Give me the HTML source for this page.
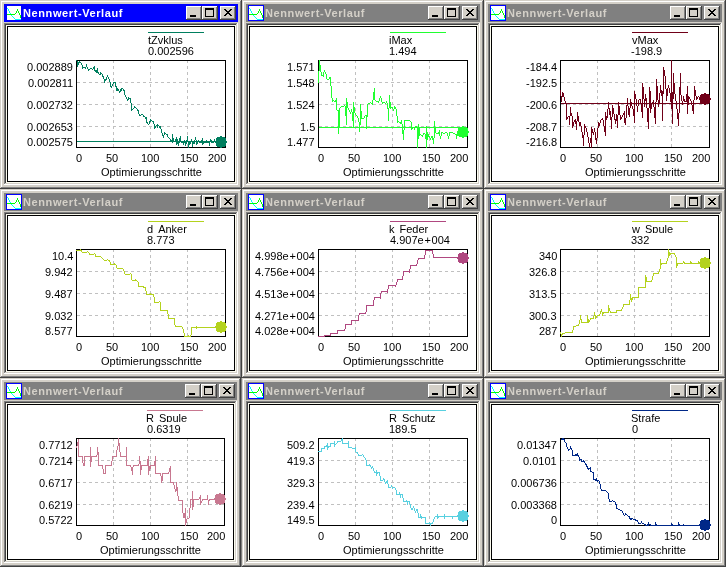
<!DOCTYPE html>
<html><head><meta charset="utf-8"><style>
html,body{margin:0;padding:0;}
body{width:726px;height:567px;overflow:hidden;background:#808080;position:relative;font-family:"Liberation Sans", sans-serif;}
.win{position:absolute;height:189px;overflow:hidden;}
.win svg{position:absolute;left:0;top:0;}
.tx{position:absolute;will-change:transform;font-size:11px;line-height:11px;height:11px;white-space:nowrap;color:#000;}
.tt{position:absolute;will-change:transform;font-size:11px;font-weight:bold;letter-spacing:0.6px;line-height:11px;white-space:nowrap;}
.yl{text-align:right;}
.pl{margin:0 0.75px;}
.us{display:inline-block;width:5px;height:9px;overflow:hidden;vertical-align:top;color:transparent;}
</style></head><body>

<div class="win" style="left:0px;top:0px;width:242px">
<svg width="242" height="189" viewBox="0 0 242 189" shape-rendering="crispEdges">
<rect x="0" y="0" width="242" height="189" fill="#d4d0c8"/>
<rect x="1" y="1" width="240" height="1" fill="#ffffff"/>
<rect x="1" y="1" width="1" height="187" fill="#ffffff"/>
<rect x="0" y="188" width="242" height="1" fill="#404040"/>
<rect x="241" y="0" width="1" height="189" fill="#404040"/>
<rect x="1" y="187" width="240" height="1" fill="#808080"/>
<rect x="240" y="1" width="1" height="187" fill="#808080"/>
<rect x="4" y="4" width="234" height="18" fill="#0000ff"/>
<rect x="6" y="5" width="16" height="16" fill="#0000ff"/>
<rect x="7" y="6" width="14" height="14" fill="#ffffff"/>
<rect x="7" y="8" width="1" height="1" fill="#00ffff"/>
<rect x="8" y="9" width="1" height="1" fill="#00ffff"/>
<rect x="8" y="10" width="1" height="1" fill="#00ffff"/>
<rect x="9" y="11" width="1" height="1" fill="#00ffff"/>
<rect x="9" y="12" width="1" height="1" fill="#00ffff"/>
<rect x="10" y="13" width="1" height="1" fill="#00ffff"/>
<rect x="11" y="14" width="1" height="1" fill="#00ffff"/>
<rect x="11" y="15" width="1" height="1" fill="#00ffff"/>
<rect x="12" y="16" width="1" height="1" fill="#00ffff"/>
<rect x="13" y="17" width="1" height="1" fill="#00ffff"/>
<rect x="14" y="18" width="1" height="1" fill="#00ffff"/>
<rect x="15" y="19" width="1" height="1" fill="#00ffff"/>
<rect x="16" y="19" width="1" height="1" fill="#00ffff"/>
<rect x="17" y="19" width="1" height="1" fill="#00ffff"/>
<rect x="18" y="19" width="1" height="1" fill="#00ffff"/>
<rect x="19" y="19" width="1" height="1" fill="#00ffff"/>
<rect x="20" y="19" width="1" height="1" fill="#00ffff"/>
<rect x="7" y="14" width="1" height="1" fill="#00ff00"/>
<rect x="8" y="14" width="1" height="1" fill="#00ff00"/>
<rect x="9" y="14" width="1" height="1" fill="#00ff00"/>
<rect x="10" y="14" width="1" height="1" fill="#00ff00"/>
<rect x="11" y="14" width="1" height="1" fill="#00ff00"/>
<rect x="12" y="14" width="1" height="1" fill="#00ff00"/>
<rect x="13" y="14" width="1" height="1" fill="#00ff00"/>
<rect x="14" y="14" width="1" height="1" fill="#00ff00"/>
<rect x="15" y="13" width="1" height="1" fill="#00ff00"/>
<rect x="16" y="11" width="1" height="1" fill="#00ff00"/>
<rect x="16" y="12" width="1" height="1" fill="#00ff00"/>
<rect x="17" y="9" width="1" height="1" fill="#00ff00"/>
<rect x="17" y="10" width="1" height="1" fill="#00ff00"/>
<rect x="18" y="11" width="1" height="1" fill="#00ff00"/>
<rect x="18" y="12" width="1" height="1" fill="#00ff00"/>
<rect x="19" y="13" width="1" height="1" fill="#00ff00"/>
<rect x="19" y="14" width="1" height="1" fill="#00ff00"/>
<rect x="20" y="15" width="1" height="1" fill="#00ff00"/>
<rect x="20" y="16" width="1" height="1" fill="#00ff00"/>
<rect x="20" y="17" width="1" height="1" fill="#00ff00"/>
<rect x="186" y="6" width="16" height="14" fill="#404040"/>
<rect x="186" y="6" width="15" height="13" fill="#ffffff"/>
<rect x="187" y="7" width="14" height="12" fill="#808080"/>
<rect x="187" y="7" width="13" height="11" fill="#d4d0c8"/>
<rect x="202" y="6" width="16" height="14" fill="#404040"/>
<rect x="202" y="6" width="15" height="13" fill="#ffffff"/>
<rect x="203" y="7" width="14" height="12" fill="#808080"/>
<rect x="203" y="7" width="13" height="11" fill="#d4d0c8"/>
<rect x="220" y="6" width="16" height="14" fill="#404040"/>
<rect x="220" y="6" width="15" height="13" fill="#ffffff"/>
<rect x="221" y="7" width="14" height="12" fill="#808080"/>
<rect x="221" y="7" width="13" height="11" fill="#d4d0c8"/>
<rect x="190" y="15" width="6" height="2" fill="#000000"/>
<rect x="205" y="8" width="9" height="9" fill="#000000"/>
<rect x="206" y="10" width="7" height="6" fill="#d4d0c8"/>
<rect x="224" y="9" width="1" height="1" fill="#000000"/>
<rect x="225" y="9" width="1" height="1" fill="#000000"/>
<rect x="230" y="9" width="1" height="1" fill="#000000"/>
<rect x="231" y="9" width="1" height="1" fill="#000000"/>
<rect x="225" y="10" width="1" height="1" fill="#000000"/>
<rect x="226" y="10" width="1" height="1" fill="#000000"/>
<rect x="229" y="10" width="1" height="1" fill="#000000"/>
<rect x="230" y="10" width="1" height="1" fill="#000000"/>
<rect x="226" y="11" width="1" height="1" fill="#000000"/>
<rect x="227" y="11" width="1" height="1" fill="#000000"/>
<rect x="228" y="11" width="1" height="1" fill="#000000"/>
<rect x="229" y="11" width="1" height="1" fill="#000000"/>
<rect x="227" y="12" width="1" height="1" fill="#000000"/>
<rect x="228" y="12" width="1" height="1" fill="#000000"/>
<rect x="226" y="13" width="1" height="1" fill="#000000"/>
<rect x="227" y="13" width="1" height="1" fill="#000000"/>
<rect x="228" y="13" width="1" height="1" fill="#000000"/>
<rect x="229" y="13" width="1" height="1" fill="#000000"/>
<rect x="225" y="14" width="1" height="1" fill="#000000"/>
<rect x="226" y="14" width="1" height="1" fill="#000000"/>
<rect x="229" y="14" width="1" height="1" fill="#000000"/>
<rect x="230" y="14" width="1" height="1" fill="#000000"/>
<rect x="224" y="15" width="1" height="1" fill="#000000"/>
<rect x="225" y="15" width="1" height="1" fill="#000000"/>
<rect x="230" y="15" width="1" height="1" fill="#000000"/>
<rect x="231" y="15" width="1" height="1" fill="#000000"/>
<rect x="4" y="23" width="234" height="162" fill="#ffffff"/>
<rect x="4" y="23" width="233" height="1" fill="#808080"/>
<rect x="4" y="23" width="1" height="161" fill="#808080"/>
<rect x="5" y="24" width="231" height="1" fill="#404040"/>
<rect x="5" y="24" width="1" height="159" fill="#404040"/>
<rect x="5" y="183" width="232" height="1" fill="#d4d0c8"/>
<rect x="236" y="24" width="1" height="160" fill="#d4d0c8"/>
<rect x="6" y="25" width="230" height="158" fill="#fbfbef"/>
<rect x="7" y="26" width="228" height="156" fill="#000000"/>
<rect x="8" y="27" width="226" height="154" fill="#ffffff"/>
<rect x="113" y="60" width="1" height="3" fill="#c0c0c0"/>
<rect x="113" y="66" width="1" height="3" fill="#c0c0c0"/>
<rect x="113" y="72" width="1" height="3" fill="#c0c0c0"/>
<rect x="113" y="78" width="1" height="3" fill="#c0c0c0"/>
<rect x="113" y="84" width="1" height="3" fill="#c0c0c0"/>
<rect x="113" y="90" width="1" height="3" fill="#c0c0c0"/>
<rect x="113" y="96" width="1" height="3" fill="#c0c0c0"/>
<rect x="113" y="102" width="1" height="3" fill="#c0c0c0"/>
<rect x="113" y="108" width="1" height="3" fill="#c0c0c0"/>
<rect x="113" y="114" width="1" height="3" fill="#c0c0c0"/>
<rect x="113" y="120" width="1" height="3" fill="#c0c0c0"/>
<rect x="113" y="126" width="1" height="3" fill="#c0c0c0"/>
<rect x="113" y="132" width="1" height="3" fill="#c0c0c0"/>
<rect x="113" y="138" width="1" height="3" fill="#c0c0c0"/>
<rect x="113" y="144" width="1" height="3" fill="#c0c0c0"/>
<rect x="150" y="60" width="1" height="3" fill="#c0c0c0"/>
<rect x="150" y="66" width="1" height="3" fill="#c0c0c0"/>
<rect x="150" y="72" width="1" height="3" fill="#c0c0c0"/>
<rect x="150" y="78" width="1" height="3" fill="#c0c0c0"/>
<rect x="150" y="84" width="1" height="3" fill="#c0c0c0"/>
<rect x="150" y="90" width="1" height="3" fill="#c0c0c0"/>
<rect x="150" y="96" width="1" height="3" fill="#c0c0c0"/>
<rect x="150" y="102" width="1" height="3" fill="#c0c0c0"/>
<rect x="150" y="108" width="1" height="3" fill="#c0c0c0"/>
<rect x="150" y="114" width="1" height="3" fill="#c0c0c0"/>
<rect x="150" y="120" width="1" height="3" fill="#c0c0c0"/>
<rect x="150" y="126" width="1" height="3" fill="#c0c0c0"/>
<rect x="150" y="132" width="1" height="3" fill="#c0c0c0"/>
<rect x="150" y="138" width="1" height="3" fill="#c0c0c0"/>
<rect x="150" y="144" width="1" height="3" fill="#c0c0c0"/>
<rect x="187" y="60" width="1" height="3" fill="#c0c0c0"/>
<rect x="187" y="66" width="1" height="3" fill="#c0c0c0"/>
<rect x="187" y="72" width="1" height="3" fill="#c0c0c0"/>
<rect x="187" y="78" width="1" height="3" fill="#c0c0c0"/>
<rect x="187" y="84" width="1" height="3" fill="#c0c0c0"/>
<rect x="187" y="90" width="1" height="3" fill="#c0c0c0"/>
<rect x="187" y="96" width="1" height="3" fill="#c0c0c0"/>
<rect x="187" y="102" width="1" height="3" fill="#c0c0c0"/>
<rect x="187" y="108" width="1" height="3" fill="#c0c0c0"/>
<rect x="187" y="114" width="1" height="3" fill="#c0c0c0"/>
<rect x="187" y="120" width="1" height="3" fill="#c0c0c0"/>
<rect x="187" y="126" width="1" height="3" fill="#c0c0c0"/>
<rect x="187" y="132" width="1" height="3" fill="#c0c0c0"/>
<rect x="187" y="138" width="1" height="3" fill="#c0c0c0"/>
<rect x="187" y="144" width="1" height="3" fill="#c0c0c0"/>
<rect x="77" y="82" width="3" height="1" fill="#c0c0c0"/>
<rect x="83" y="82" width="3" height="1" fill="#c0c0c0"/>
<rect x="89" y="82" width="3" height="1" fill="#c0c0c0"/>
<rect x="95" y="82" width="3" height="1" fill="#c0c0c0"/>
<rect x="101" y="82" width="3" height="1" fill="#c0c0c0"/>
<rect x="107" y="82" width="3" height="1" fill="#c0c0c0"/>
<rect x="113" y="82" width="3" height="1" fill="#c0c0c0"/>
<rect x="119" y="82" width="3" height="1" fill="#c0c0c0"/>
<rect x="125" y="82" width="3" height="1" fill="#c0c0c0"/>
<rect x="131" y="82" width="3" height="1" fill="#c0c0c0"/>
<rect x="137" y="82" width="3" height="1" fill="#c0c0c0"/>
<rect x="143" y="82" width="3" height="1" fill="#c0c0c0"/>
<rect x="149" y="82" width="3" height="1" fill="#c0c0c0"/>
<rect x="155" y="82" width="3" height="1" fill="#c0c0c0"/>
<rect x="161" y="82" width="3" height="1" fill="#c0c0c0"/>
<rect x="167" y="82" width="3" height="1" fill="#c0c0c0"/>
<rect x="173" y="82" width="3" height="1" fill="#c0c0c0"/>
<rect x="179" y="82" width="3" height="1" fill="#c0c0c0"/>
<rect x="185" y="82" width="3" height="1" fill="#c0c0c0"/>
<rect x="191" y="82" width="3" height="1" fill="#c0c0c0"/>
<rect x="197" y="82" width="3" height="1" fill="#c0c0c0"/>
<rect x="203" y="82" width="3" height="1" fill="#c0c0c0"/>
<rect x="209" y="82" width="3" height="1" fill="#c0c0c0"/>
<rect x="215" y="82" width="3" height="1" fill="#c0c0c0"/>
<rect x="221" y="82" width="3" height="1" fill="#c0c0c0"/>
<rect x="77" y="104" width="3" height="1" fill="#c0c0c0"/>
<rect x="83" y="104" width="3" height="1" fill="#c0c0c0"/>
<rect x="89" y="104" width="3" height="1" fill="#c0c0c0"/>
<rect x="95" y="104" width="3" height="1" fill="#c0c0c0"/>
<rect x="101" y="104" width="3" height="1" fill="#c0c0c0"/>
<rect x="107" y="104" width="3" height="1" fill="#c0c0c0"/>
<rect x="113" y="104" width="3" height="1" fill="#c0c0c0"/>
<rect x="119" y="104" width="3" height="1" fill="#c0c0c0"/>
<rect x="125" y="104" width="3" height="1" fill="#c0c0c0"/>
<rect x="131" y="104" width="3" height="1" fill="#c0c0c0"/>
<rect x="137" y="104" width="3" height="1" fill="#c0c0c0"/>
<rect x="143" y="104" width="3" height="1" fill="#c0c0c0"/>
<rect x="149" y="104" width="3" height="1" fill="#c0c0c0"/>
<rect x="155" y="104" width="3" height="1" fill="#c0c0c0"/>
<rect x="161" y="104" width="3" height="1" fill="#c0c0c0"/>
<rect x="167" y="104" width="3" height="1" fill="#c0c0c0"/>
<rect x="173" y="104" width="3" height="1" fill="#c0c0c0"/>
<rect x="179" y="104" width="3" height="1" fill="#c0c0c0"/>
<rect x="185" y="104" width="3" height="1" fill="#c0c0c0"/>
<rect x="191" y="104" width="3" height="1" fill="#c0c0c0"/>
<rect x="197" y="104" width="3" height="1" fill="#c0c0c0"/>
<rect x="203" y="104" width="3" height="1" fill="#c0c0c0"/>
<rect x="209" y="104" width="3" height="1" fill="#c0c0c0"/>
<rect x="215" y="104" width="3" height="1" fill="#c0c0c0"/>
<rect x="221" y="104" width="3" height="1" fill="#c0c0c0"/>
<rect x="77" y="126" width="3" height="1" fill="#c0c0c0"/>
<rect x="83" y="126" width="3" height="1" fill="#c0c0c0"/>
<rect x="89" y="126" width="3" height="1" fill="#c0c0c0"/>
<rect x="95" y="126" width="3" height="1" fill="#c0c0c0"/>
<rect x="101" y="126" width="3" height="1" fill="#c0c0c0"/>
<rect x="107" y="126" width="3" height="1" fill="#c0c0c0"/>
<rect x="113" y="126" width="3" height="1" fill="#c0c0c0"/>
<rect x="119" y="126" width="3" height="1" fill="#c0c0c0"/>
<rect x="125" y="126" width="3" height="1" fill="#c0c0c0"/>
<rect x="131" y="126" width="3" height="1" fill="#c0c0c0"/>
<rect x="137" y="126" width="3" height="1" fill="#c0c0c0"/>
<rect x="143" y="126" width="3" height="1" fill="#c0c0c0"/>
<rect x="149" y="126" width="3" height="1" fill="#c0c0c0"/>
<rect x="155" y="126" width="3" height="1" fill="#c0c0c0"/>
<rect x="161" y="126" width="3" height="1" fill="#c0c0c0"/>
<rect x="167" y="126" width="3" height="1" fill="#c0c0c0"/>
<rect x="173" y="126" width="3" height="1" fill="#c0c0c0"/>
<rect x="179" y="126" width="3" height="1" fill="#c0c0c0"/>
<rect x="185" y="126" width="3" height="1" fill="#c0c0c0"/>
<rect x="191" y="126" width="3" height="1" fill="#c0c0c0"/>
<rect x="197" y="126" width="3" height="1" fill="#c0c0c0"/>
<rect x="203" y="126" width="3" height="1" fill="#c0c0c0"/>
<rect x="209" y="126" width="3" height="1" fill="#c0c0c0"/>
<rect x="215" y="126" width="3" height="1" fill="#c0c0c0"/>
<rect x="221" y="126" width="3" height="1" fill="#c0c0c0"/>
<rect x="76.5" y="60.5" width="149" height="87" fill="none" stroke="#000" stroke-width="1"/>
<rect x="148" y="32" width="56" height="1" fill="#007f5f"/>
<rect x="77" y="141" width="148" height="1" fill="#007f5f"/>
<path d="M76 60h1v1h-1zM77 61h1v1h-1zM79 61h1v1h-1zM77 62h4v1h-4zM77 63h2v1h-2zM81 63h1v1h-1zM77 64h2v1h-2zM81 64h1v1h-1zM86 64h1v1h-1zM77 65h1v1h-1zM82 65h1v1h-1zM86 65h1v1h-1zM77 66h1v1h-1zM82 66h1v1h-1zM86 66h1v1h-1zM94 66h1v1h-1zM82 67h4v1h-4zM87 67h1v1h-1zM93 67h2v1h-2zM82 68h1v1h-1zM85 68h1v1h-1zM87 68h1v1h-1zM90 68h2v1h-2zM93 68h2v1h-2zM97 68h1v1h-1zM88 69h2v1h-2zM92 69h1v1h-1zM94 69h1v1h-1zM97 69h1v1h-1zM88 70h1v1h-1zM94 70h4v1h-4zM95 71h3v1h-3zM96 72h3v1h-3zM100 72h1v1h-1zM98 73h1v1h-1zM100 73h2v1h-2zM99 74h2v1h-2zM102 74h1v1h-1zM102 75h1v1h-1zM107 75h1v1h-1zM102 76h2v1h-2zM107 76h1v1h-1zM103 77h1v1h-1zM106 77h1v1h-1zM108 77h1v1h-1zM103 78h1v1h-1zM106 78h1v1h-1zM108 78h1v1h-1zM104 79h3v1h-3zM109 79h1v1h-1zM104 80h2v1h-2zM109 80h1v1h-1zM104 81h1v1h-1zM109 81h1v1h-1zM104 82h1v1h-1zM110 82h1v1h-1zM113 82h3v1h-3zM110 83h1v1h-1zM113 83h1v1h-1zM115 83h1v1h-1zM110 84h1v1h-1zM112 84h1v1h-1zM115 84h1v1h-1zM110 85h1v1h-1zM112 85h1v1h-1zM115 85h1v1h-1zM110 86h2v1h-2zM115 86h2v1h-2zM111 87h1v1h-1zM116 87h1v1h-1zM116 88h2v1h-2zM121 88h2v1h-2zM116 89h3v1h-3zM120 89h2v1h-2zM123 89h1v1h-1zM116 90h3v1h-3zM120 90h2v1h-2zM123 90h2v1h-2zM119 91h2v1h-2zM124 91h1v1h-1zM119 92h1v1h-1zM124 92h1v1h-1zM124 93h1v1h-1zM124 94h1v1h-1zM125 95h1v1h-1zM125 96h1v1h-1zM126 97h1v1h-1zM128 97h1v1h-1zM126 98h1v1h-1zM128 98h3v1h-3zM127 99h2v1h-2zM130 99h1v1h-1zM127 100h1v1h-1zM130 100h1v1h-1zM130 101h1v1h-1zM130 102h1v1h-1zM131 103h1v1h-1zM131 104h1v1h-1zM131 105h1v1h-1zM131 106h1v1h-1zM134 106h1v1h-1zM131 107h1v1h-1zM134 107h2v1h-2zM131 108h1v1h-1zM133 108h1v1h-1zM136 108h1v1h-1zM131 109h2v1h-2zM137 109h1v1h-1zM131 110h1v1h-1zM137 110h2v1h-2zM138 111h1v1h-1zM138 112h1v1h-1zM138 113h1v1h-1zM139 114h1v1h-1zM141 114h2v1h-2zM139 115h2v1h-2zM143 115h1v1h-1zM143 116h2v1h-2zM145 117h2v1h-2zM145 118h2v1h-2zM146 119h1v1h-1zM150 119h1v1h-1zM146 120h1v1h-1zM150 120h2v1h-2zM146 121h1v1h-1zM149 121h2v1h-2zM152 121h2v1h-2zM146 122h2v1h-2zM149 122h1v1h-1zM153 122h1v1h-1zM147 123h1v1h-1zM149 123h1v1h-1zM153 123h1v1h-1zM148 124h1v1h-1zM154 124h1v1h-1zM157 124h1v1h-1zM154 125h1v1h-1zM156 125h3v1h-3zM154 126h2v1h-2zM157 126h1v1h-1zM159 126h2v1h-2zM154 127h2v1h-2zM157 127h1v1h-1zM159 127h2v1h-2zM154 128h1v1h-1zM160 128h1v1h-1zM161 129h1v1h-1zM161 130h1v1h-1zM161 131h1v1h-1zM161 132h1v1h-1zM164 132h1v1h-1zM162 133h1v1h-1zM164 133h2v1h-2zM162 134h1v1h-1zM164 134h1v1h-1zM166 134h2v1h-2zM172 134h1v1h-1zM162 135h2v1h-2zM167 135h1v1h-1zM172 135h1v1h-1zM163 136h1v1h-1zM167 136h1v1h-1zM172 136h1v1h-1zM180 136h1v1h-1zM187 136h1v1h-1zM163 137h1v1h-1zM168 137h1v1h-1zM172 137h1v1h-1zM176 137h1v1h-1zM180 137h1v1h-1zM187 137h1v1h-1zM195 137h1v1h-1zM169 138h1v1h-1zM172 138h2v1h-2zM176 138h1v1h-1zM179 138h2v1h-2zM187 138h1v1h-1zM195 138h1v1h-1zM202 138h1v1h-1zM170 139h1v1h-1zM172 139h2v1h-2zM175 139h3v1h-3zM179 139h2v1h-2zM187 139h1v1h-1zM191 139h1v1h-1zM195 139h1v1h-1zM202 139h1v1h-1zM210 139h1v1h-1zM214 139h1v1h-1zM170 140h4v1h-4zM175 140h3v1h-3zM179 140h2v1h-2zM184 140h1v1h-1zM186 140h2v1h-2zM191 140h1v1h-1zM194 140h1v1h-1zM196 140h1v1h-1zM198 140h1v1h-1zM201 140h2v1h-2zM206 140h1v1h-1zM210 140h2v1h-2zM214 140h1v1h-1zM172 141h3v1h-3zM176 141h2v1h-2zM179 141h2v1h-2zM184 141h1v1h-1zM186 141h2v1h-2zM190 141h2v1h-2zM194 141h1v1h-1zM196 141h1v1h-1zM198 141h2v1h-2zM201 141h2v1h-2zM205 141h3v1h-3zM210 141h2v1h-2zM213 141h3v1h-3zM172 142h1v1h-1zM176 142h4v1h-4zM181 142h6v1h-6zM188 142h3v1h-3zM192 142h3v1h-3zM196 142h2v1h-2zM199 142h11v1h-11zM211 142h3v1h-3zM215 142h2v1h-2zM176 143h3v1h-3zM183 143h1v1h-1zM185 143h2v1h-2zM188 143h3v1h-3zM192 143h3v1h-3zM196 143h2v1h-2zM202 143h2v1h-2zM209 143h1v1h-1zM176 144h1v1h-1zM178 144h1v1h-1zM183 144h1v1h-1zM185 144h1v1h-1zM188 144h2v1h-2zM192 144h1v1h-1zM196 144h1v1h-1zM202 144h1v1h-1zM209 144h1v1h-1zM178 145h1v1h-1zM185 145h1v1h-1zM188 145h1v1h-1zM192 145h1v1h-1zM209 145h1v1h-1zM188 146h1v1h-1zM192 146h1v1h-1zM188 147h1v1h-1z" fill="#007f5f"/>
<path d="M220 136h2v1h-2zM217 137h8v1h-8zM216 138h10v1h-10zM216 139h10v1h-10zM216 140h10v1h-10zM215 141h12v1h-12zM215 142h12v1h-12zM216 143h10v1h-10zM216 144h10v1h-10zM216 145h10v1h-10zM217 146h8v1h-8zM220 147h2v1h-2z" fill="#007f5f"/>
</svg>
<div class="tt" style="left:23px;top:8px;color:#ffffff">Nennwert-Verlauf</div>
<div class="tx" style="left:148px;top:35px;height:9px;overflow:hidden">tZvklus</div>
<div class="tx" style="left:148px;top:46px">0.002596</div>
<div class="tx yl" style="right:169px;top:62px">0.002889</div>
<div class="tx yl" style="right:169px;top:78px">0.002811</div>
<div class="tx yl" style="right:169px;top:100px">0.002732</div>
<div class="tx yl" style="right:169px;top:122px">0.002653</div>
<div class="tx yl" style="right:169px;top:137px">0.002575</div>
<div class="tx" style="left:76px;top:153px">0</div>
<div class="tx" style="left:106px;top:153px">50</div>
<div class="tx" style="left:141px;top:153px">100</div>
<div class="tx" style="left:180px;top:153px">150</div>
<div class="tx" style="left:208px;top:153px">200</div>
<div class="tx" style="left:101px;top:167px">Optimierungsschritte</div>
</div>
<div class="win" style="left:242px;top:0px;width:242px">
<svg width="242" height="189" viewBox="0 0 242 189" shape-rendering="crispEdges">
<rect x="0" y="0" width="242" height="189" fill="#d4d0c8"/>
<rect x="1" y="1" width="240" height="1" fill="#ffffff"/>
<rect x="1" y="1" width="1" height="187" fill="#ffffff"/>
<rect x="0" y="188" width="242" height="1" fill="#404040"/>
<rect x="241" y="0" width="1" height="189" fill="#404040"/>
<rect x="1" y="187" width="240" height="1" fill="#808080"/>
<rect x="240" y="1" width="1" height="187" fill="#808080"/>
<rect x="4" y="4" width="234" height="18" fill="#808080"/>
<rect x="6" y="5" width="16" height="16" fill="#0000ff"/>
<rect x="7" y="6" width="14" height="14" fill="#ffffff"/>
<rect x="7" y="8" width="1" height="1" fill="#00ffff"/>
<rect x="8" y="9" width="1" height="1" fill="#00ffff"/>
<rect x="8" y="10" width="1" height="1" fill="#00ffff"/>
<rect x="9" y="11" width="1" height="1" fill="#00ffff"/>
<rect x="9" y="12" width="1" height="1" fill="#00ffff"/>
<rect x="10" y="13" width="1" height="1" fill="#00ffff"/>
<rect x="11" y="14" width="1" height="1" fill="#00ffff"/>
<rect x="11" y="15" width="1" height="1" fill="#00ffff"/>
<rect x="12" y="16" width="1" height="1" fill="#00ffff"/>
<rect x="13" y="17" width="1" height="1" fill="#00ffff"/>
<rect x="14" y="18" width="1" height="1" fill="#00ffff"/>
<rect x="15" y="19" width="1" height="1" fill="#00ffff"/>
<rect x="16" y="19" width="1" height="1" fill="#00ffff"/>
<rect x="17" y="19" width="1" height="1" fill="#00ffff"/>
<rect x="18" y="19" width="1" height="1" fill="#00ffff"/>
<rect x="19" y="19" width="1" height="1" fill="#00ffff"/>
<rect x="20" y="19" width="1" height="1" fill="#00ffff"/>
<rect x="7" y="14" width="1" height="1" fill="#00ff00"/>
<rect x="8" y="14" width="1" height="1" fill="#00ff00"/>
<rect x="9" y="14" width="1" height="1" fill="#00ff00"/>
<rect x="10" y="14" width="1" height="1" fill="#00ff00"/>
<rect x="11" y="14" width="1" height="1" fill="#00ff00"/>
<rect x="12" y="14" width="1" height="1" fill="#00ff00"/>
<rect x="13" y="14" width="1" height="1" fill="#00ff00"/>
<rect x="14" y="14" width="1" height="1" fill="#00ff00"/>
<rect x="15" y="13" width="1" height="1" fill="#00ff00"/>
<rect x="16" y="11" width="1" height="1" fill="#00ff00"/>
<rect x="16" y="12" width="1" height="1" fill="#00ff00"/>
<rect x="17" y="9" width="1" height="1" fill="#00ff00"/>
<rect x="17" y="10" width="1" height="1" fill="#00ff00"/>
<rect x="18" y="11" width="1" height="1" fill="#00ff00"/>
<rect x="18" y="12" width="1" height="1" fill="#00ff00"/>
<rect x="19" y="13" width="1" height="1" fill="#00ff00"/>
<rect x="19" y="14" width="1" height="1" fill="#00ff00"/>
<rect x="20" y="15" width="1" height="1" fill="#00ff00"/>
<rect x="20" y="16" width="1" height="1" fill="#00ff00"/>
<rect x="20" y="17" width="1" height="1" fill="#00ff00"/>
<rect x="186" y="6" width="16" height="14" fill="#404040"/>
<rect x="186" y="6" width="15" height="13" fill="#ffffff"/>
<rect x="187" y="7" width="14" height="12" fill="#808080"/>
<rect x="187" y="7" width="13" height="11" fill="#d4d0c8"/>
<rect x="202" y="6" width="16" height="14" fill="#404040"/>
<rect x="202" y="6" width="15" height="13" fill="#ffffff"/>
<rect x="203" y="7" width="14" height="12" fill="#808080"/>
<rect x="203" y="7" width="13" height="11" fill="#d4d0c8"/>
<rect x="220" y="6" width="16" height="14" fill="#404040"/>
<rect x="220" y="6" width="15" height="13" fill="#ffffff"/>
<rect x="221" y="7" width="14" height="12" fill="#808080"/>
<rect x="221" y="7" width="13" height="11" fill="#d4d0c8"/>
<rect x="190" y="15" width="6" height="2" fill="#000000"/>
<rect x="205" y="8" width="9" height="9" fill="#000000"/>
<rect x="206" y="10" width="7" height="6" fill="#d4d0c8"/>
<rect x="224" y="9" width="1" height="1" fill="#000000"/>
<rect x="225" y="9" width="1" height="1" fill="#000000"/>
<rect x="230" y="9" width="1" height="1" fill="#000000"/>
<rect x="231" y="9" width="1" height="1" fill="#000000"/>
<rect x="225" y="10" width="1" height="1" fill="#000000"/>
<rect x="226" y="10" width="1" height="1" fill="#000000"/>
<rect x="229" y="10" width="1" height="1" fill="#000000"/>
<rect x="230" y="10" width="1" height="1" fill="#000000"/>
<rect x="226" y="11" width="1" height="1" fill="#000000"/>
<rect x="227" y="11" width="1" height="1" fill="#000000"/>
<rect x="228" y="11" width="1" height="1" fill="#000000"/>
<rect x="229" y="11" width="1" height="1" fill="#000000"/>
<rect x="227" y="12" width="1" height="1" fill="#000000"/>
<rect x="228" y="12" width="1" height="1" fill="#000000"/>
<rect x="226" y="13" width="1" height="1" fill="#000000"/>
<rect x="227" y="13" width="1" height="1" fill="#000000"/>
<rect x="228" y="13" width="1" height="1" fill="#000000"/>
<rect x="229" y="13" width="1" height="1" fill="#000000"/>
<rect x="225" y="14" width="1" height="1" fill="#000000"/>
<rect x="226" y="14" width="1" height="1" fill="#000000"/>
<rect x="229" y="14" width="1" height="1" fill="#000000"/>
<rect x="230" y="14" width="1" height="1" fill="#000000"/>
<rect x="224" y="15" width="1" height="1" fill="#000000"/>
<rect x="225" y="15" width="1" height="1" fill="#000000"/>
<rect x="230" y="15" width="1" height="1" fill="#000000"/>
<rect x="231" y="15" width="1" height="1" fill="#000000"/>
<rect x="4" y="23" width="234" height="162" fill="#ffffff"/>
<rect x="4" y="23" width="233" height="1" fill="#808080"/>
<rect x="4" y="23" width="1" height="161" fill="#808080"/>
<rect x="5" y="24" width="231" height="1" fill="#404040"/>
<rect x="5" y="24" width="1" height="159" fill="#404040"/>
<rect x="5" y="183" width="232" height="1" fill="#d4d0c8"/>
<rect x="236" y="24" width="1" height="160" fill="#d4d0c8"/>
<rect x="6" y="25" width="230" height="158" fill="#fbfbef"/>
<rect x="7" y="26" width="228" height="156" fill="#000000"/>
<rect x="8" y="27" width="226" height="154" fill="#ffffff"/>
<rect x="113" y="60" width="1" height="3" fill="#c0c0c0"/>
<rect x="113" y="66" width="1" height="3" fill="#c0c0c0"/>
<rect x="113" y="72" width="1" height="3" fill="#c0c0c0"/>
<rect x="113" y="78" width="1" height="3" fill="#c0c0c0"/>
<rect x="113" y="84" width="1" height="3" fill="#c0c0c0"/>
<rect x="113" y="90" width="1" height="3" fill="#c0c0c0"/>
<rect x="113" y="96" width="1" height="3" fill="#c0c0c0"/>
<rect x="113" y="102" width="1" height="3" fill="#c0c0c0"/>
<rect x="113" y="108" width="1" height="3" fill="#c0c0c0"/>
<rect x="113" y="114" width="1" height="3" fill="#c0c0c0"/>
<rect x="113" y="120" width="1" height="3" fill="#c0c0c0"/>
<rect x="113" y="126" width="1" height="3" fill="#c0c0c0"/>
<rect x="113" y="132" width="1" height="3" fill="#c0c0c0"/>
<rect x="113" y="138" width="1" height="3" fill="#c0c0c0"/>
<rect x="113" y="144" width="1" height="3" fill="#c0c0c0"/>
<rect x="150" y="60" width="1" height="3" fill="#c0c0c0"/>
<rect x="150" y="66" width="1" height="3" fill="#c0c0c0"/>
<rect x="150" y="72" width="1" height="3" fill="#c0c0c0"/>
<rect x="150" y="78" width="1" height="3" fill="#c0c0c0"/>
<rect x="150" y="84" width="1" height="3" fill="#c0c0c0"/>
<rect x="150" y="90" width="1" height="3" fill="#c0c0c0"/>
<rect x="150" y="96" width="1" height="3" fill="#c0c0c0"/>
<rect x="150" y="102" width="1" height="3" fill="#c0c0c0"/>
<rect x="150" y="108" width="1" height="3" fill="#c0c0c0"/>
<rect x="150" y="114" width="1" height="3" fill="#c0c0c0"/>
<rect x="150" y="120" width="1" height="3" fill="#c0c0c0"/>
<rect x="150" y="126" width="1" height="3" fill="#c0c0c0"/>
<rect x="150" y="132" width="1" height="3" fill="#c0c0c0"/>
<rect x="150" y="138" width="1" height="3" fill="#c0c0c0"/>
<rect x="150" y="144" width="1" height="3" fill="#c0c0c0"/>
<rect x="187" y="60" width="1" height="3" fill="#c0c0c0"/>
<rect x="187" y="66" width="1" height="3" fill="#c0c0c0"/>
<rect x="187" y="72" width="1" height="3" fill="#c0c0c0"/>
<rect x="187" y="78" width="1" height="3" fill="#c0c0c0"/>
<rect x="187" y="84" width="1" height="3" fill="#c0c0c0"/>
<rect x="187" y="90" width="1" height="3" fill="#c0c0c0"/>
<rect x="187" y="96" width="1" height="3" fill="#c0c0c0"/>
<rect x="187" y="102" width="1" height="3" fill="#c0c0c0"/>
<rect x="187" y="108" width="1" height="3" fill="#c0c0c0"/>
<rect x="187" y="114" width="1" height="3" fill="#c0c0c0"/>
<rect x="187" y="120" width="1" height="3" fill="#c0c0c0"/>
<rect x="187" y="126" width="1" height="3" fill="#c0c0c0"/>
<rect x="187" y="132" width="1" height="3" fill="#c0c0c0"/>
<rect x="187" y="138" width="1" height="3" fill="#c0c0c0"/>
<rect x="187" y="144" width="1" height="3" fill="#c0c0c0"/>
<rect x="77" y="82" width="3" height="1" fill="#c0c0c0"/>
<rect x="83" y="82" width="3" height="1" fill="#c0c0c0"/>
<rect x="89" y="82" width="3" height="1" fill="#c0c0c0"/>
<rect x="95" y="82" width="3" height="1" fill="#c0c0c0"/>
<rect x="101" y="82" width="3" height="1" fill="#c0c0c0"/>
<rect x="107" y="82" width="3" height="1" fill="#c0c0c0"/>
<rect x="113" y="82" width="3" height="1" fill="#c0c0c0"/>
<rect x="119" y="82" width="3" height="1" fill="#c0c0c0"/>
<rect x="125" y="82" width="3" height="1" fill="#c0c0c0"/>
<rect x="131" y="82" width="3" height="1" fill="#c0c0c0"/>
<rect x="137" y="82" width="3" height="1" fill="#c0c0c0"/>
<rect x="143" y="82" width="3" height="1" fill="#c0c0c0"/>
<rect x="149" y="82" width="3" height="1" fill="#c0c0c0"/>
<rect x="155" y="82" width="3" height="1" fill="#c0c0c0"/>
<rect x="161" y="82" width="3" height="1" fill="#c0c0c0"/>
<rect x="167" y="82" width="3" height="1" fill="#c0c0c0"/>
<rect x="173" y="82" width="3" height="1" fill="#c0c0c0"/>
<rect x="179" y="82" width="3" height="1" fill="#c0c0c0"/>
<rect x="185" y="82" width="3" height="1" fill="#c0c0c0"/>
<rect x="191" y="82" width="3" height="1" fill="#c0c0c0"/>
<rect x="197" y="82" width="3" height="1" fill="#c0c0c0"/>
<rect x="203" y="82" width="3" height="1" fill="#c0c0c0"/>
<rect x="209" y="82" width="3" height="1" fill="#c0c0c0"/>
<rect x="215" y="82" width="3" height="1" fill="#c0c0c0"/>
<rect x="221" y="82" width="3" height="1" fill="#c0c0c0"/>
<rect x="77" y="104" width="3" height="1" fill="#c0c0c0"/>
<rect x="83" y="104" width="3" height="1" fill="#c0c0c0"/>
<rect x="89" y="104" width="3" height="1" fill="#c0c0c0"/>
<rect x="95" y="104" width="3" height="1" fill="#c0c0c0"/>
<rect x="101" y="104" width="3" height="1" fill="#c0c0c0"/>
<rect x="107" y="104" width="3" height="1" fill="#c0c0c0"/>
<rect x="113" y="104" width="3" height="1" fill="#c0c0c0"/>
<rect x="119" y="104" width="3" height="1" fill="#c0c0c0"/>
<rect x="125" y="104" width="3" height="1" fill="#c0c0c0"/>
<rect x="131" y="104" width="3" height="1" fill="#c0c0c0"/>
<rect x="137" y="104" width="3" height="1" fill="#c0c0c0"/>
<rect x="143" y="104" width="3" height="1" fill="#c0c0c0"/>
<rect x="149" y="104" width="3" height="1" fill="#c0c0c0"/>
<rect x="155" y="104" width="3" height="1" fill="#c0c0c0"/>
<rect x="161" y="104" width="3" height="1" fill="#c0c0c0"/>
<rect x="167" y="104" width="3" height="1" fill="#c0c0c0"/>
<rect x="173" y="104" width="3" height="1" fill="#c0c0c0"/>
<rect x="179" y="104" width="3" height="1" fill="#c0c0c0"/>
<rect x="185" y="104" width="3" height="1" fill="#c0c0c0"/>
<rect x="191" y="104" width="3" height="1" fill="#c0c0c0"/>
<rect x="197" y="104" width="3" height="1" fill="#c0c0c0"/>
<rect x="203" y="104" width="3" height="1" fill="#c0c0c0"/>
<rect x="209" y="104" width="3" height="1" fill="#c0c0c0"/>
<rect x="215" y="104" width="3" height="1" fill="#c0c0c0"/>
<rect x="221" y="104" width="3" height="1" fill="#c0c0c0"/>
<rect x="77" y="126" width="3" height="1" fill="#c0c0c0"/>
<rect x="83" y="126" width="3" height="1" fill="#c0c0c0"/>
<rect x="89" y="126" width="3" height="1" fill="#c0c0c0"/>
<rect x="95" y="126" width="3" height="1" fill="#c0c0c0"/>
<rect x="101" y="126" width="3" height="1" fill="#c0c0c0"/>
<rect x="107" y="126" width="3" height="1" fill="#c0c0c0"/>
<rect x="113" y="126" width="3" height="1" fill="#c0c0c0"/>
<rect x="119" y="126" width="3" height="1" fill="#c0c0c0"/>
<rect x="125" y="126" width="3" height="1" fill="#c0c0c0"/>
<rect x="131" y="126" width="3" height="1" fill="#c0c0c0"/>
<rect x="137" y="126" width="3" height="1" fill="#c0c0c0"/>
<rect x="143" y="126" width="3" height="1" fill="#c0c0c0"/>
<rect x="149" y="126" width="3" height="1" fill="#c0c0c0"/>
<rect x="155" y="126" width="3" height="1" fill="#c0c0c0"/>
<rect x="161" y="126" width="3" height="1" fill="#c0c0c0"/>
<rect x="167" y="126" width="3" height="1" fill="#c0c0c0"/>
<rect x="173" y="126" width="3" height="1" fill="#c0c0c0"/>
<rect x="179" y="126" width="3" height="1" fill="#c0c0c0"/>
<rect x="185" y="126" width="3" height="1" fill="#c0c0c0"/>
<rect x="191" y="126" width="3" height="1" fill="#c0c0c0"/>
<rect x="197" y="126" width="3" height="1" fill="#c0c0c0"/>
<rect x="203" y="126" width="3" height="1" fill="#c0c0c0"/>
<rect x="209" y="126" width="3" height="1" fill="#c0c0c0"/>
<rect x="215" y="126" width="3" height="1" fill="#c0c0c0"/>
<rect x="221" y="126" width="3" height="1" fill="#c0c0c0"/>
<rect x="76.5" y="60.5" width="149" height="87" fill="none" stroke="#000" stroke-width="1"/>
<rect x="148" y="32" width="56" height="1" fill="#20ff30"/>
<rect x="77" y="127" width="148" height="1" fill="#20ff30"/>
<path d="M77 60h1v1h-1zM77 61h1v1h-1zM77 62h1v1h-1zM77 63h1v1h-1zM77 64h1v1h-1zM77 65h2v1h-2zM77 66h2v1h-2zM77 67h2v1h-2zM77 68h2v1h-2zM77 69h2v1h-2zM77 70h2v1h-2zM82 70h1v1h-1zM76 71h1v1h-1zM78 71h1v1h-1zM82 71h1v1h-1zM76 72h1v1h-1zM79 72h1v1h-1zM81 72h1v1h-1zM83 72h1v1h-1zM76 73h1v1h-1zM79 73h1v1h-1zM81 73h1v1h-1zM83 73h1v1h-1zM76 74h1v1h-1zM79 74h1v1h-1zM81 74h1v1h-1zM84 74h1v1h-1zM76 75h1v1h-1zM79 75h3v1h-3zM84 75h1v1h-1zM76 76h1v1h-1zM81 76h1v1h-1zM84 76h1v1h-1zM76 77h1v1h-1zM84 77h1v1h-1zM87 77h2v1h-2zM76 78h1v1h-1zM84 78h1v1h-1zM87 78h2v1h-2zM76 79h1v1h-1zM85 79h2v1h-2zM88 79h1v1h-1zM76 80h1v1h-1zM88 80h1v1h-1zM76 81h1v1h-1zM88 81h1v1h-1zM76 82h1v1h-1zM88 82h1v1h-1zM88 83h1v1h-1zM88 84h1v1h-1zM88 85h1v1h-1zM89 86h1v1h-1zM89 87h1v1h-1zM89 88h1v1h-1zM132 88h1v1h-1zM89 89h1v1h-1zM132 89h1v1h-1zM89 90h1v1h-1zM132 90h1v1h-1zM89 91h1v1h-1zM132 91h1v1h-1zM89 92h1v1h-1zM131 92h2v1h-2zM89 93h1v1h-1zM131 93h2v1h-2zM89 94h1v1h-1zM131 94h2v1h-2zM89 95h1v1h-1zM131 95h2v1h-2zM147 95h1v1h-1zM89 96h1v1h-1zM131 96h2v1h-2zM138 96h1v1h-1zM147 96h1v1h-1zM89 97h1v1h-1zM131 97h2v1h-2zM138 97h1v1h-1zM147 97h1v1h-1zM90 98h1v1h-1zM94 98h1v1h-1zM104 98h1v1h-1zM131 98h2v1h-2zM137 98h1v1h-1zM139 98h1v1h-1zM147 98h1v1h-1zM90 99h1v1h-1zM94 99h1v1h-1zM104 99h1v1h-1zM131 99h2v1h-2zM137 99h1v1h-1zM139 99h1v1h-1zM147 99h1v1h-1zM90 100h2v1h-2zM93 100h2v1h-2zM104 100h1v1h-1zM130 100h1v1h-1zM133 100h1v1h-1zM137 100h1v1h-1zM139 100h1v1h-1zM147 100h1v1h-1zM90 101h1v1h-1zM92 101h3v1h-3zM104 101h1v1h-1zM130 101h1v1h-1zM134 101h3v1h-3zM139 101h1v1h-1zM144 101h1v1h-1zM147 101h1v1h-1zM94 102h1v1h-1zM104 102h2v1h-2zM111 102h1v1h-1zM128 102h1v1h-1zM130 102h1v1h-1zM136 102h1v1h-1zM140 102h3v1h-3zM144 102h1v1h-1zM147 102h2v1h-2zM94 103h1v1h-1zM104 103h2v1h-2zM111 103h1v1h-1zM126 103h2v1h-2zM129 103h2v1h-2zM140 103h1v1h-1zM143 103h1v1h-1zM145 103h1v1h-1zM147 103h2v1h-2zM94 104h1v1h-1zM104 104h2v1h-2zM111 104h1v1h-1zM118 104h1v1h-1zM125 104h1v1h-1zM130 104h1v1h-1zM145 104h1v1h-1zM147 104h2v1h-2zM94 105h1v1h-1zM102 105h1v1h-1zM104 105h2v1h-2zM111 105h1v1h-1zM118 105h1v1h-1zM125 105h1v1h-1zM145 105h1v1h-1zM147 105h2v1h-2zM94 106h1v1h-1zM99 106h3v1h-3zM103 106h3v1h-3zM111 106h1v1h-1zM118 106h1v1h-1zM125 106h1v1h-1zM145 106h1v1h-1zM147 106h2v1h-2zM152 106h1v1h-1zM94 107h1v1h-1zM98 107h1v1h-1zM103 107h3v1h-3zM111 107h2v1h-2zM118 107h1v1h-1zM125 107h1v1h-1zM145 107h1v1h-1zM147 107h4v1h-4zM152 107h2v1h-2zM94 108h1v1h-1zM97 108h1v1h-1zM103 108h2v1h-2zM106 108h1v1h-1zM111 108h2v1h-2zM118 108h1v1h-1zM125 108h1v1h-1zM145 108h2v1h-2zM148 108h1v1h-1zM150 108h1v1h-1zM152 108h2v1h-2zM94 109h1v1h-1zM97 109h1v1h-1zM103 109h2v1h-2zM106 109h1v1h-1zM109 109h1v1h-1zM111 109h2v1h-2zM118 109h1v1h-1zM125 109h1v1h-1zM146 109h1v1h-1zM151 109h1v1h-1zM154 109h1v1h-1zM95 110h3v1h-3zM103 110h2v1h-2zM107 110h1v1h-1zM109 110h1v1h-1zM111 110h2v1h-2zM118 110h1v1h-1zM125 110h1v1h-1zM146 110h1v1h-1zM151 110h1v1h-1zM154 110h1v1h-1zM96 111h2v1h-2zM103 111h2v1h-2zM107 111h1v1h-1zM109 111h1v1h-1zM111 111h2v1h-2zM118 111h2v1h-2zM125 111h1v1h-1zM146 111h1v1h-1zM154 111h1v1h-1zM96 112h2v1h-2zM103 112h2v1h-2zM108 112h1v1h-1zM110 112h3v1h-3zM118 112h2v1h-2zM125 112h1v1h-1zM146 112h1v1h-1zM154 112h1v1h-1zM96 113h2v1h-2zM103 113h2v1h-2zM108 113h1v1h-1zM110 113h2v1h-2zM113 113h1v1h-1zM118 113h2v1h-2zM125 113h1v1h-1zM146 113h1v1h-1zM154 113h1v1h-1zM96 114h2v1h-2zM103 114h2v1h-2zM110 114h2v1h-2zM113 114h1v1h-1zM118 114h2v1h-2zM125 114h1v1h-1zM146 114h1v1h-1zM154 114h1v1h-1zM96 115h2v1h-2zM103 115h2v1h-2zM110 115h2v1h-2zM114 115h1v1h-1zM118 115h2v1h-2zM123 115h3v1h-3zM146 115h1v1h-1zM154 115h1v1h-1zM96 116h2v1h-2zM104 116h1v1h-1zM110 116h2v1h-2zM115 116h1v1h-1zM118 116h2v1h-2zM122 116h1v1h-1zM124 116h2v1h-2zM146 116h1v1h-1zM155 116h1v1h-1zM96 117h2v1h-2zM104 117h1v1h-1zM110 117h2v1h-2zM115 117h1v1h-1zM118 117h2v1h-2zM122 117h1v1h-1zM124 117h1v1h-1zM146 117h1v1h-1zM155 117h1v1h-1zM96 118h2v1h-2zM104 118h1v1h-1zM110 118h2v1h-2zM116 118h1v1h-1zM118 118h4v1h-4zM124 118h1v1h-1zM146 118h1v1h-1zM155 118h1v1h-1zM96 119h2v1h-2zM104 119h1v1h-1zM110 119h2v1h-2zM116 119h1v1h-1zM118 119h1v1h-1zM124 119h1v1h-1zM146 119h1v1h-1zM155 119h1v1h-1zM96 120h2v1h-2zM104 120h1v1h-1zM110 120h2v1h-2zM116 120h1v1h-1zM118 120h1v1h-1zM124 120h1v1h-1zM146 120h1v1h-1zM155 120h1v1h-1zM159 120h1v1h-1zM162 120h6v1h-6zM96 121h2v1h-2zM104 121h1v1h-1zM111 121h1v1h-1zM116 121h1v1h-1zM118 121h1v1h-1zM124 121h1v1h-1zM155 121h2v1h-2zM159 121h1v1h-1zM162 121h1v1h-1zM168 121h1v1h-1zM192 121h1v1h-1zM96 122h2v1h-2zM104 122h1v1h-1zM111 122h1v1h-1zM117 122h2v1h-2zM124 122h1v1h-1zM155 122h1v1h-1zM157 122h3v1h-3zM162 122h1v1h-1zM169 122h1v1h-1zM192 122h1v1h-1zM96 123h2v1h-2zM104 123h1v1h-1zM111 123h1v1h-1zM117 123h2v1h-2zM124 123h1v1h-1zM158 123h2v1h-2zM162 123h1v1h-1zM169 123h1v1h-1zM192 123h1v1h-1zM96 124h2v1h-2zM104 124h1v1h-1zM111 124h1v1h-1zM117 124h2v1h-2zM124 124h1v1h-1zM160 124h1v1h-1zM162 124h1v1h-1zM169 124h1v1h-1zM176 124h1v1h-1zM192 124h1v1h-1zM96 125h2v1h-2zM111 125h1v1h-1zM117 125h1v1h-1zM124 125h1v1h-1zM160 125h1v1h-1zM162 125h1v1h-1zM169 125h1v1h-1zM176 125h1v1h-1zM192 125h1v1h-1zM96 126h2v1h-2zM111 126h1v1h-1zM117 126h1v1h-1zM124 126h1v1h-1zM160 126h1v1h-1zM162 126h1v1h-1zM169 126h1v1h-1zM173 126h2v1h-2zM176 126h1v1h-1zM184 126h1v1h-1zM192 126h1v1h-1zM96 127h1v1h-1zM111 127h1v1h-1zM117 127h1v1h-1zM124 127h1v1h-1zM160 127h1v1h-1zM162 127h1v1h-1zM169 127h5v1h-5zM175 127h3v1h-3zM184 127h1v1h-1zM192 127h2v1h-2zM96 128h1v1h-1zM117 128h1v1h-1zM124 128h1v1h-1zM160 128h1v1h-1zM162 128h1v1h-1zM169 128h2v1h-2zM172 128h1v1h-1zM175 128h3v1h-3zM184 128h1v1h-1zM192 128h2v1h-2zM96 129h1v1h-1zM117 129h1v1h-1zM160 129h1v1h-1zM162 129h1v1h-1zM169 129h1v1h-1zM172 129h1v1h-1zM175 129h3v1h-3zM184 129h1v1h-1zM192 129h2v1h-2zM96 130h1v1h-1zM117 130h1v1h-1zM160 130h2v1h-2zM175 130h3v1h-3zM184 130h1v1h-1zM192 130h2v1h-2zM197 130h1v1h-1zM96 131h1v1h-1zM117 131h1v1h-1zM160 131h2v1h-2zM175 131h3v1h-3zM184 131h1v1h-1zM192 131h2v1h-2zM197 131h1v1h-1zM96 132h1v1h-1zM160 132h2v1h-2zM175 132h3v1h-3zM184 132h2v1h-2zM192 132h2v1h-2zM196 132h2v1h-2zM199 132h2v1h-2zM203 132h2v1h-2zM207 132h4v1h-4zM96 133h1v1h-1zM160 133h2v1h-2zM175 133h3v1h-3zM181 133h2v1h-2zM184 133h2v1h-2zM192 133h1v1h-1zM194 133h4v1h-4zM199 133h1v1h-1zM201 133h2v1h-2zM205 133h1v1h-1zM207 133h1v1h-1zM211 133h2v1h-2zM215 133h4v1h-4zM161 134h1v1h-1zM175 134h4v1h-4zM181 134h1v1h-1zM183 134h4v1h-4zM192 134h1v1h-1zM197 134h1v1h-1zM199 134h1v1h-1zM205 134h1v1h-1zM207 134h1v1h-1zM213 134h3v1h-3zM161 135h1v1h-1zM175 135h3v1h-3zM179 135h2v1h-2zM183 135h4v1h-4zM192 135h1v1h-1zM197 135h1v1h-1zM199 135h1v1h-1zM205 135h1v1h-1zM207 135h1v1h-1zM214 135h2v1h-2zM161 136h1v1h-1zM175 136h2v1h-2zM180 136h1v1h-1zM183 136h5v1h-5zM189 136h2v1h-2zM192 136h1v1h-1zM198 136h1v1h-1zM206 136h1v1h-1zM214 136h1v1h-1zM161 137h1v1h-1zM175 137h2v1h-2zM183 137h3v1h-3zM187 137h1v1h-1zM189 137h2v1h-2zM192 137h1v1h-1zM198 137h1v1h-1zM206 137h1v1h-1zM214 137h1v1h-1zM161 138h1v1h-1zM175 138h2v1h-2zM183 138h3v1h-3zM188 138h1v1h-1zM190 138h2v1h-2zM198 138h1v1h-1zM206 138h1v1h-1zM214 138h1v1h-1zM161 139h1v1h-1zM175 139h1v1h-1zM184 139h2v1h-2zM188 139h1v1h-1zM190 139h2v1h-2zM175 140h1v1h-1zM184 140h1v1h-1zM191 140h1v1h-1zM175 141h1v1h-1zM184 141h1v1h-1zM191 141h1v1h-1zM175 142h1v1h-1zM184 142h1v1h-1zM191 142h1v1h-1zM175 143h1v1h-1zM184 143h1v1h-1zM191 143h1v1h-1zM175 144h1v1h-1zM184 144h1v1h-1zM175 145h1v1h-1zM184 145h1v1h-1zM175 146h1v1h-1zM184 146h1v1h-1zM175 147h1v1h-1zM184 147h1v1h-1z" fill="#20ff30"/>
<path d="M220 126h2v1h-2zM217 127h8v1h-8zM216 128h10v1h-10zM216 129h10v1h-10zM216 130h10v1h-10zM215 131h12v1h-12zM215 132h12v1h-12zM216 133h10v1h-10zM216 134h10v1h-10zM216 135h10v1h-10zM217 136h8v1h-8zM220 137h2v1h-2z" fill="#20ff30"/>
</svg>
<div class="tt" style="left:23px;top:8px;color:#d4d0c8">Nennwert-Verlauf</div>
<div class="tx" style="left:147px;top:35px;height:9px;overflow:hidden">iMax</div>
<div class="tx" style="left:147px;top:46px">1.494</div>
<div class="tx yl" style="right:169px;top:62px">1.571</div>
<div class="tx yl" style="right:169px;top:78px">1.548</div>
<div class="tx yl" style="right:169px;top:100px">1.524</div>
<div class="tx yl" style="right:169px;top:122px">1.5</div>
<div class="tx yl" style="right:169px;top:137px">1.477</div>
<div class="tx" style="left:76px;top:153px">0</div>
<div class="tx" style="left:106px;top:153px">50</div>
<div class="tx" style="left:141px;top:153px">100</div>
<div class="tx" style="left:180px;top:153px">150</div>
<div class="tx" style="left:208px;top:153px">200</div>
<div class="tx" style="left:101px;top:167px">Optimierungsschritte</div>
</div>
<div class="win" style="left:484px;top:0px;width:242px">
<svg width="242" height="189" viewBox="0 0 242 189" shape-rendering="crispEdges">
<rect x="0" y="0" width="242" height="189" fill="#d4d0c8"/>
<rect x="1" y="1" width="240" height="1" fill="#ffffff"/>
<rect x="1" y="1" width="1" height="187" fill="#ffffff"/>
<rect x="0" y="188" width="242" height="1" fill="#404040"/>
<rect x="241" y="0" width="1" height="189" fill="#404040"/>
<rect x="1" y="187" width="240" height="1" fill="#808080"/>
<rect x="240" y="1" width="1" height="187" fill="#808080"/>
<rect x="4" y="4" width="234" height="18" fill="#808080"/>
<rect x="6" y="5" width="16" height="16" fill="#0000ff"/>
<rect x="7" y="6" width="14" height="14" fill="#ffffff"/>
<rect x="7" y="8" width="1" height="1" fill="#00ffff"/>
<rect x="8" y="9" width="1" height="1" fill="#00ffff"/>
<rect x="8" y="10" width="1" height="1" fill="#00ffff"/>
<rect x="9" y="11" width="1" height="1" fill="#00ffff"/>
<rect x="9" y="12" width="1" height="1" fill="#00ffff"/>
<rect x="10" y="13" width="1" height="1" fill="#00ffff"/>
<rect x="11" y="14" width="1" height="1" fill="#00ffff"/>
<rect x="11" y="15" width="1" height="1" fill="#00ffff"/>
<rect x="12" y="16" width="1" height="1" fill="#00ffff"/>
<rect x="13" y="17" width="1" height="1" fill="#00ffff"/>
<rect x="14" y="18" width="1" height="1" fill="#00ffff"/>
<rect x="15" y="19" width="1" height="1" fill="#00ffff"/>
<rect x="16" y="19" width="1" height="1" fill="#00ffff"/>
<rect x="17" y="19" width="1" height="1" fill="#00ffff"/>
<rect x="18" y="19" width="1" height="1" fill="#00ffff"/>
<rect x="19" y="19" width="1" height="1" fill="#00ffff"/>
<rect x="20" y="19" width="1" height="1" fill="#00ffff"/>
<rect x="7" y="14" width="1" height="1" fill="#00ff00"/>
<rect x="8" y="14" width="1" height="1" fill="#00ff00"/>
<rect x="9" y="14" width="1" height="1" fill="#00ff00"/>
<rect x="10" y="14" width="1" height="1" fill="#00ff00"/>
<rect x="11" y="14" width="1" height="1" fill="#00ff00"/>
<rect x="12" y="14" width="1" height="1" fill="#00ff00"/>
<rect x="13" y="14" width="1" height="1" fill="#00ff00"/>
<rect x="14" y="14" width="1" height="1" fill="#00ff00"/>
<rect x="15" y="13" width="1" height="1" fill="#00ff00"/>
<rect x="16" y="11" width="1" height="1" fill="#00ff00"/>
<rect x="16" y="12" width="1" height="1" fill="#00ff00"/>
<rect x="17" y="9" width="1" height="1" fill="#00ff00"/>
<rect x="17" y="10" width="1" height="1" fill="#00ff00"/>
<rect x="18" y="11" width="1" height="1" fill="#00ff00"/>
<rect x="18" y="12" width="1" height="1" fill="#00ff00"/>
<rect x="19" y="13" width="1" height="1" fill="#00ff00"/>
<rect x="19" y="14" width="1" height="1" fill="#00ff00"/>
<rect x="20" y="15" width="1" height="1" fill="#00ff00"/>
<rect x="20" y="16" width="1" height="1" fill="#00ff00"/>
<rect x="20" y="17" width="1" height="1" fill="#00ff00"/>
<rect x="186" y="6" width="16" height="14" fill="#404040"/>
<rect x="186" y="6" width="15" height="13" fill="#ffffff"/>
<rect x="187" y="7" width="14" height="12" fill="#808080"/>
<rect x="187" y="7" width="13" height="11" fill="#d4d0c8"/>
<rect x="202" y="6" width="16" height="14" fill="#404040"/>
<rect x="202" y="6" width="15" height="13" fill="#ffffff"/>
<rect x="203" y="7" width="14" height="12" fill="#808080"/>
<rect x="203" y="7" width="13" height="11" fill="#d4d0c8"/>
<rect x="220" y="6" width="16" height="14" fill="#404040"/>
<rect x="220" y="6" width="15" height="13" fill="#ffffff"/>
<rect x="221" y="7" width="14" height="12" fill="#808080"/>
<rect x="221" y="7" width="13" height="11" fill="#d4d0c8"/>
<rect x="190" y="15" width="6" height="2" fill="#000000"/>
<rect x="205" y="8" width="9" height="9" fill="#000000"/>
<rect x="206" y="10" width="7" height="6" fill="#d4d0c8"/>
<rect x="224" y="9" width="1" height="1" fill="#000000"/>
<rect x="225" y="9" width="1" height="1" fill="#000000"/>
<rect x="230" y="9" width="1" height="1" fill="#000000"/>
<rect x="231" y="9" width="1" height="1" fill="#000000"/>
<rect x="225" y="10" width="1" height="1" fill="#000000"/>
<rect x="226" y="10" width="1" height="1" fill="#000000"/>
<rect x="229" y="10" width="1" height="1" fill="#000000"/>
<rect x="230" y="10" width="1" height="1" fill="#000000"/>
<rect x="226" y="11" width="1" height="1" fill="#000000"/>
<rect x="227" y="11" width="1" height="1" fill="#000000"/>
<rect x="228" y="11" width="1" height="1" fill="#000000"/>
<rect x="229" y="11" width="1" height="1" fill="#000000"/>
<rect x="227" y="12" width="1" height="1" fill="#000000"/>
<rect x="228" y="12" width="1" height="1" fill="#000000"/>
<rect x="226" y="13" width="1" height="1" fill="#000000"/>
<rect x="227" y="13" width="1" height="1" fill="#000000"/>
<rect x="228" y="13" width="1" height="1" fill="#000000"/>
<rect x="229" y="13" width="1" height="1" fill="#000000"/>
<rect x="225" y="14" width="1" height="1" fill="#000000"/>
<rect x="226" y="14" width="1" height="1" fill="#000000"/>
<rect x="229" y="14" width="1" height="1" fill="#000000"/>
<rect x="230" y="14" width="1" height="1" fill="#000000"/>
<rect x="224" y="15" width="1" height="1" fill="#000000"/>
<rect x="225" y="15" width="1" height="1" fill="#000000"/>
<rect x="230" y="15" width="1" height="1" fill="#000000"/>
<rect x="231" y="15" width="1" height="1" fill="#000000"/>
<rect x="4" y="23" width="234" height="162" fill="#ffffff"/>
<rect x="4" y="23" width="233" height="1" fill="#808080"/>
<rect x="4" y="23" width="1" height="161" fill="#808080"/>
<rect x="5" y="24" width="231" height="1" fill="#404040"/>
<rect x="5" y="24" width="1" height="159" fill="#404040"/>
<rect x="5" y="183" width="232" height="1" fill="#d4d0c8"/>
<rect x="236" y="24" width="1" height="160" fill="#d4d0c8"/>
<rect x="6" y="25" width="230" height="158" fill="#fbfbef"/>
<rect x="7" y="26" width="228" height="156" fill="#000000"/>
<rect x="8" y="27" width="226" height="154" fill="#ffffff"/>
<rect x="113" y="60" width="1" height="3" fill="#c0c0c0"/>
<rect x="113" y="66" width="1" height="3" fill="#c0c0c0"/>
<rect x="113" y="72" width="1" height="3" fill="#c0c0c0"/>
<rect x="113" y="78" width="1" height="3" fill="#c0c0c0"/>
<rect x="113" y="84" width="1" height="3" fill="#c0c0c0"/>
<rect x="113" y="90" width="1" height="3" fill="#c0c0c0"/>
<rect x="113" y="96" width="1" height="3" fill="#c0c0c0"/>
<rect x="113" y="102" width="1" height="3" fill="#c0c0c0"/>
<rect x="113" y="108" width="1" height="3" fill="#c0c0c0"/>
<rect x="113" y="114" width="1" height="3" fill="#c0c0c0"/>
<rect x="113" y="120" width="1" height="3" fill="#c0c0c0"/>
<rect x="113" y="126" width="1" height="3" fill="#c0c0c0"/>
<rect x="113" y="132" width="1" height="3" fill="#c0c0c0"/>
<rect x="113" y="138" width="1" height="3" fill="#c0c0c0"/>
<rect x="113" y="144" width="1" height="3" fill="#c0c0c0"/>
<rect x="150" y="60" width="1" height="3" fill="#c0c0c0"/>
<rect x="150" y="66" width="1" height="3" fill="#c0c0c0"/>
<rect x="150" y="72" width="1" height="3" fill="#c0c0c0"/>
<rect x="150" y="78" width="1" height="3" fill="#c0c0c0"/>
<rect x="150" y="84" width="1" height="3" fill="#c0c0c0"/>
<rect x="150" y="90" width="1" height="3" fill="#c0c0c0"/>
<rect x="150" y="96" width="1" height="3" fill="#c0c0c0"/>
<rect x="150" y="102" width="1" height="3" fill="#c0c0c0"/>
<rect x="150" y="108" width="1" height="3" fill="#c0c0c0"/>
<rect x="150" y="114" width="1" height="3" fill="#c0c0c0"/>
<rect x="150" y="120" width="1" height="3" fill="#c0c0c0"/>
<rect x="150" y="126" width="1" height="3" fill="#c0c0c0"/>
<rect x="150" y="132" width="1" height="3" fill="#c0c0c0"/>
<rect x="150" y="138" width="1" height="3" fill="#c0c0c0"/>
<rect x="150" y="144" width="1" height="3" fill="#c0c0c0"/>
<rect x="187" y="60" width="1" height="3" fill="#c0c0c0"/>
<rect x="187" y="66" width="1" height="3" fill="#c0c0c0"/>
<rect x="187" y="72" width="1" height="3" fill="#c0c0c0"/>
<rect x="187" y="78" width="1" height="3" fill="#c0c0c0"/>
<rect x="187" y="84" width="1" height="3" fill="#c0c0c0"/>
<rect x="187" y="90" width="1" height="3" fill="#c0c0c0"/>
<rect x="187" y="96" width="1" height="3" fill="#c0c0c0"/>
<rect x="187" y="102" width="1" height="3" fill="#c0c0c0"/>
<rect x="187" y="108" width="1" height="3" fill="#c0c0c0"/>
<rect x="187" y="114" width="1" height="3" fill="#c0c0c0"/>
<rect x="187" y="120" width="1" height="3" fill="#c0c0c0"/>
<rect x="187" y="126" width="1" height="3" fill="#c0c0c0"/>
<rect x="187" y="132" width="1" height="3" fill="#c0c0c0"/>
<rect x="187" y="138" width="1" height="3" fill="#c0c0c0"/>
<rect x="187" y="144" width="1" height="3" fill="#c0c0c0"/>
<rect x="77" y="82" width="3" height="1" fill="#c0c0c0"/>
<rect x="83" y="82" width="3" height="1" fill="#c0c0c0"/>
<rect x="89" y="82" width="3" height="1" fill="#c0c0c0"/>
<rect x="95" y="82" width="3" height="1" fill="#c0c0c0"/>
<rect x="101" y="82" width="3" height="1" fill="#c0c0c0"/>
<rect x="107" y="82" width="3" height="1" fill="#c0c0c0"/>
<rect x="113" y="82" width="3" height="1" fill="#c0c0c0"/>
<rect x="119" y="82" width="3" height="1" fill="#c0c0c0"/>
<rect x="125" y="82" width="3" height="1" fill="#c0c0c0"/>
<rect x="131" y="82" width="3" height="1" fill="#c0c0c0"/>
<rect x="137" y="82" width="3" height="1" fill="#c0c0c0"/>
<rect x="143" y="82" width="3" height="1" fill="#c0c0c0"/>
<rect x="149" y="82" width="3" height="1" fill="#c0c0c0"/>
<rect x="155" y="82" width="3" height="1" fill="#c0c0c0"/>
<rect x="161" y="82" width="3" height="1" fill="#c0c0c0"/>
<rect x="167" y="82" width="3" height="1" fill="#c0c0c0"/>
<rect x="173" y="82" width="3" height="1" fill="#c0c0c0"/>
<rect x="179" y="82" width="3" height="1" fill="#c0c0c0"/>
<rect x="185" y="82" width="3" height="1" fill="#c0c0c0"/>
<rect x="191" y="82" width="3" height="1" fill="#c0c0c0"/>
<rect x="197" y="82" width="3" height="1" fill="#c0c0c0"/>
<rect x="203" y="82" width="3" height="1" fill="#c0c0c0"/>
<rect x="209" y="82" width="3" height="1" fill="#c0c0c0"/>
<rect x="215" y="82" width="3" height="1" fill="#c0c0c0"/>
<rect x="221" y="82" width="3" height="1" fill="#c0c0c0"/>
<rect x="77" y="104" width="3" height="1" fill="#c0c0c0"/>
<rect x="83" y="104" width="3" height="1" fill="#c0c0c0"/>
<rect x="89" y="104" width="3" height="1" fill="#c0c0c0"/>
<rect x="95" y="104" width="3" height="1" fill="#c0c0c0"/>
<rect x="101" y="104" width="3" height="1" fill="#c0c0c0"/>
<rect x="107" y="104" width="3" height="1" fill="#c0c0c0"/>
<rect x="113" y="104" width="3" height="1" fill="#c0c0c0"/>
<rect x="119" y="104" width="3" height="1" fill="#c0c0c0"/>
<rect x="125" y="104" width="3" height="1" fill="#c0c0c0"/>
<rect x="131" y="104" width="3" height="1" fill="#c0c0c0"/>
<rect x="137" y="104" width="3" height="1" fill="#c0c0c0"/>
<rect x="143" y="104" width="3" height="1" fill="#c0c0c0"/>
<rect x="149" y="104" width="3" height="1" fill="#c0c0c0"/>
<rect x="155" y="104" width="3" height="1" fill="#c0c0c0"/>
<rect x="161" y="104" width="3" height="1" fill="#c0c0c0"/>
<rect x="167" y="104" width="3" height="1" fill="#c0c0c0"/>
<rect x="173" y="104" width="3" height="1" fill="#c0c0c0"/>
<rect x="179" y="104" width="3" height="1" fill="#c0c0c0"/>
<rect x="185" y="104" width="3" height="1" fill="#c0c0c0"/>
<rect x="191" y="104" width="3" height="1" fill="#c0c0c0"/>
<rect x="197" y="104" width="3" height="1" fill="#c0c0c0"/>
<rect x="203" y="104" width="3" height="1" fill="#c0c0c0"/>
<rect x="209" y="104" width="3" height="1" fill="#c0c0c0"/>
<rect x="215" y="104" width="3" height="1" fill="#c0c0c0"/>
<rect x="221" y="104" width="3" height="1" fill="#c0c0c0"/>
<rect x="77" y="126" width="3" height="1" fill="#c0c0c0"/>
<rect x="83" y="126" width="3" height="1" fill="#c0c0c0"/>
<rect x="89" y="126" width="3" height="1" fill="#c0c0c0"/>
<rect x="95" y="126" width="3" height="1" fill="#c0c0c0"/>
<rect x="101" y="126" width="3" height="1" fill="#c0c0c0"/>
<rect x="107" y="126" width="3" height="1" fill="#c0c0c0"/>
<rect x="113" y="126" width="3" height="1" fill="#c0c0c0"/>
<rect x="119" y="126" width="3" height="1" fill="#c0c0c0"/>
<rect x="125" y="126" width="3" height="1" fill="#c0c0c0"/>
<rect x="131" y="126" width="3" height="1" fill="#c0c0c0"/>
<rect x="137" y="126" width="3" height="1" fill="#c0c0c0"/>
<rect x="143" y="126" width="3" height="1" fill="#c0c0c0"/>
<rect x="149" y="126" width="3" height="1" fill="#c0c0c0"/>
<rect x="155" y="126" width="3" height="1" fill="#c0c0c0"/>
<rect x="161" y="126" width="3" height="1" fill="#c0c0c0"/>
<rect x="167" y="126" width="3" height="1" fill="#c0c0c0"/>
<rect x="173" y="126" width="3" height="1" fill="#c0c0c0"/>
<rect x="179" y="126" width="3" height="1" fill="#c0c0c0"/>
<rect x="185" y="126" width="3" height="1" fill="#c0c0c0"/>
<rect x="191" y="126" width="3" height="1" fill="#c0c0c0"/>
<rect x="197" y="126" width="3" height="1" fill="#c0c0c0"/>
<rect x="203" y="126" width="3" height="1" fill="#c0c0c0"/>
<rect x="209" y="126" width="3" height="1" fill="#c0c0c0"/>
<rect x="215" y="126" width="3" height="1" fill="#c0c0c0"/>
<rect x="221" y="126" width="3" height="1" fill="#c0c0c0"/>
<rect x="76.5" y="60.5" width="149" height="87" fill="none" stroke="#000" stroke-width="1"/>
<rect x="148" y="32" width="56" height="1" fill="#700018"/>
<rect x="77" y="103" width="148" height="1" fill="#700018"/>
<path d="M187 60h1v1h-1zM187 61h1v1h-1zM187 62h1v1h-1zM187 63h1v1h-1zM187 64h1v1h-1zM187 65h1v1h-1zM187 66h1v1h-1zM179 67h1v1h-1zM187 67h1v1h-1zM179 68h1v1h-1zM187 68h1v1h-1zM179 69h1v1h-1zM187 69h1v1h-1zM179 70h2v1h-2zM187 70h1v1h-1zM179 71h2v1h-2zM187 71h1v1h-1zM179 72h2v1h-2zM187 72h1v1h-1zM179 73h2v1h-2zM187 73h1v1h-1zM189 73h1v1h-1zM196 73h1v1h-1zM179 74h2v1h-2zM187 74h1v1h-1zM189 74h1v1h-1zM196 74h1v1h-1zM179 75h2v1h-2zM187 75h1v1h-1zM189 75h1v1h-1zM196 75h1v1h-1zM179 76h1v1h-1zM181 76h1v1h-1zM187 76h1v1h-1zM189 76h1v1h-1zM196 76h1v1h-1zM179 77h1v1h-1zM181 77h1v1h-1zM187 77h1v1h-1zM189 77h1v1h-1zM196 77h1v1h-1zM179 78h1v1h-1zM181 78h1v1h-1zM187 78h1v1h-1zM189 78h1v1h-1zM196 78h1v1h-1zM172 79h1v1h-1zM179 79h1v1h-1zM181 79h1v1h-1zM187 79h1v1h-1zM189 79h1v1h-1zM196 79h1v1h-1zM172 80h1v1h-1zM179 80h1v1h-1zM181 80h1v1h-1zM187 80h1v1h-1zM189 80h1v1h-1zM196 80h1v1h-1zM172 81h1v1h-1zM179 81h1v1h-1zM181 81h1v1h-1zM187 81h1v1h-1zM189 81h1v1h-1zM196 81h1v1h-1zM172 82h1v1h-1zM179 82h1v1h-1zM181 82h1v1h-1zM187 82h1v1h-1zM189 82h1v1h-1zM196 82h1v1h-1zM158 83h1v1h-1zM172 83h1v1h-1zM179 83h1v1h-1zM181 83h1v1h-1zM187 83h1v1h-1zM189 83h2v1h-2zM196 83h1v1h-1zM158 84h1v1h-1zM172 84h1v1h-1zM179 84h1v1h-1zM181 84h1v1h-1zM187 84h1v1h-1zM189 84h2v1h-2zM196 84h1v1h-1zM158 85h1v1h-1zM172 85h1v1h-1zM176 85h1v1h-1zM179 85h1v1h-1zM181 85h1v1h-1zM184 85h1v1h-1zM187 85h1v1h-1zM189 85h2v1h-2zM196 85h1v1h-1zM158 86h1v1h-1zM172 86h2v1h-2zM176 86h1v1h-1zM179 86h1v1h-1zM181 86h1v1h-1zM184 86h1v1h-1zM187 86h1v1h-1zM189 86h2v1h-2zM196 86h1v1h-1zM203 86h1v1h-1zM210 86h1v1h-1zM158 87h2v1h-2zM165 87h1v1h-1zM172 87h2v1h-2zM176 87h1v1h-1zM179 87h1v1h-1zM181 87h1v1h-1zM184 87h1v1h-1zM187 87h1v1h-1zM189 87h2v1h-2zM195 87h2v1h-2zM203 87h1v1h-1zM210 87h1v1h-1zM158 88h2v1h-2zM165 88h1v1h-1zM172 88h2v1h-2zM176 88h1v1h-1zM179 88h1v1h-1zM181 88h1v1h-1zM183 88h1v1h-1zM185 88h1v1h-1zM187 88h1v1h-1zM189 88h2v1h-2zM195 88h2v1h-2zM203 88h1v1h-1zM210 88h1v1h-1zM158 89h2v1h-2zM165 89h1v1h-1zM172 89h2v1h-2zM176 89h1v1h-1zM179 89h1v1h-1zM182 89h2v1h-2zM185 89h1v1h-1zM187 89h1v1h-1zM189 89h2v1h-2zM195 89h2v1h-2zM203 89h1v1h-1zM210 89h1v1h-1zM76 90h1v1h-1zM158 90h2v1h-2zM165 90h1v1h-1zM172 90h2v1h-2zM176 90h2v1h-2zM179 90h1v1h-1zM182 90h2v1h-2zM185 90h1v1h-1zM187 90h1v1h-1zM189 90h2v1h-2zM195 90h2v1h-2zM203 90h1v1h-1zM210 90h2v1h-2zM76 91h1v1h-1zM150 91h1v1h-1zM158 91h2v1h-2zM165 91h2v1h-2zM172 91h2v1h-2zM176 91h4v1h-4zM182 91h2v1h-2zM185 91h1v1h-1zM187 91h1v1h-1zM189 91h2v1h-2zM195 91h2v1h-2zM203 91h1v1h-1zM210 91h2v1h-2zM76 92h1v1h-1zM78 92h1v1h-1zM150 92h1v1h-1zM158 92h2v1h-2zM165 92h2v1h-2zM172 92h2v1h-2zM176 92h4v1h-4zM182 92h2v1h-2zM185 92h1v1h-1zM187 92h4v1h-4zM195 92h2v1h-2zM203 92h1v1h-1zM210 92h2v1h-2zM76 93h1v1h-1zM78 93h2v1h-2zM150 93h1v1h-1zM158 93h2v1h-2zM165 93h2v1h-2zM172 93h2v1h-2zM175 93h1v1h-1zM177 93h3v1h-3zM182 93h2v1h-2zM186 93h5v1h-5zM195 93h2v1h-2zM203 93h1v1h-1zM210 93h2v1h-2zM76 94h1v1h-1zM78 94h2v1h-2zM150 94h2v1h-2zM158 94h2v1h-2zM161 94h1v1h-1zM165 94h2v1h-2zM172 94h2v1h-2zM175 94h1v1h-1zM177 94h2v1h-2zM182 94h2v1h-2zM186 94h4v1h-4zM191 94h1v1h-1zM195 94h2v1h-2zM202 94h2v1h-2zM210 94h2v1h-2zM76 95h1v1h-1zM78 95h2v1h-2zM150 95h2v1h-2zM158 95h2v1h-2zM161 95h1v1h-1zM165 95h2v1h-2zM172 95h2v1h-2zM175 95h1v1h-1zM177 95h2v1h-2zM182 95h2v1h-2zM186 95h4v1h-4zM191 95h1v1h-1zM195 95h1v1h-1zM197 95h1v1h-1zM202 95h2v1h-2zM210 95h2v1h-2zM77 96h3v1h-3zM150 96h2v1h-2zM158 96h2v1h-2zM161 96h1v1h-1zM165 96h2v1h-2zM172 96h2v1h-2zM175 96h1v1h-1zM178 96h1v1h-1zM182 96h1v1h-1zM186 96h4v1h-4zM191 96h1v1h-1zM195 96h1v1h-1zM197 96h1v1h-1zM199 96h1v1h-1zM202 96h3v1h-3zM210 96h1v1h-1zM212 96h1v1h-1zM214 96h1v1h-1zM77 97h1v1h-1zM80 97h1v1h-1zM150 97h2v1h-2zM158 97h2v1h-2zM161 97h1v1h-1zM165 97h2v1h-2zM172 97h2v1h-2zM175 97h1v1h-1zM178 97h1v1h-1zM182 97h1v1h-1zM186 97h4v1h-4zM191 97h1v1h-1zM195 97h1v1h-1zM197 97h1v1h-1zM199 97h1v1h-1zM202 97h4v1h-4zM210 97h1v1h-1zM212 97h2v1h-2zM215 97h1v1h-1zM218 97h1v1h-1zM77 98h1v1h-1zM80 98h1v1h-1zM143 98h1v1h-1zM150 98h2v1h-2zM158 98h2v1h-2zM161 98h2v1h-2zM165 98h2v1h-2zM172 98h2v1h-2zM175 98h1v1h-1zM178 98h1v1h-1zM182 98h1v1h-1zM186 98h4v1h-4zM191 98h1v1h-1zM195 98h1v1h-1zM197 98h1v1h-1zM199 98h1v1h-1zM202 98h4v1h-4zM210 98h1v1h-1zM212 98h2v1h-2zM215 98h1v1h-1zM217 98h1v1h-1zM219 98h1v1h-1zM77 99h1v1h-1zM80 99h1v1h-1zM143 99h1v1h-1zM146 99h1v1h-1zM150 99h1v1h-1zM152 99h1v1h-1zM155 99h2v1h-2zM158 99h1v1h-1zM160 99h3v1h-3zM165 99h2v1h-2zM172 99h2v1h-2zM175 99h1v1h-1zM178 99h1v1h-1zM182 99h1v1h-1zM186 99h3v1h-3zM191 99h1v1h-1zM195 99h1v1h-1zM197 99h1v1h-1zM199 99h2v1h-2zM202 99h3v1h-3zM206 99h1v1h-1zM210 99h1v1h-1zM212 99h1v1h-1zM216 99h1v1h-1zM220 99h1v1h-1zM77 100h1v1h-1zM80 100h1v1h-1zM143 100h1v1h-1zM146 100h1v1h-1zM150 100h1v1h-1zM152 100h1v1h-1zM154 100h1v1h-1zM156 100h1v1h-1zM158 100h1v1h-1zM160 100h3v1h-3zM165 100h2v1h-2zM169 100h1v1h-1zM172 100h1v1h-1zM174 100h2v1h-2zM178 100h1v1h-1zM182 100h1v1h-1zM186 100h3v1h-3zM191 100h1v1h-1zM195 100h1v1h-1zM197 100h1v1h-1zM199 100h2v1h-2zM202 100h3v1h-3zM206 100h1v1h-1zM209 100h1v1h-1zM77 101h1v1h-1zM81 101h1v1h-1zM143 101h1v1h-1zM146 101h1v1h-1zM150 101h1v1h-1zM152 101h1v1h-1zM154 101h1v1h-1zM156 101h1v1h-1zM158 101h1v1h-1zM160 101h1v1h-1zM162 101h1v1h-1zM165 101h2v1h-2zM169 101h1v1h-1zM172 101h1v1h-1zM174 101h2v1h-2zM178 101h1v1h-1zM186 101h3v1h-3zM192 101h1v1h-1zM195 101h1v1h-1zM198 101h1v1h-1zM200 101h5v1h-5zM207 101h1v1h-1zM209 101h1v1h-1zM81 102h1v1h-1zM124 102h1v1h-1zM134 102h1v1h-1zM143 102h1v1h-1zM146 102h2v1h-2zM150 102h1v1h-1zM152 102h1v1h-1zM154 102h1v1h-1zM156 102h1v1h-1zM158 102h1v1h-1zM160 102h1v1h-1zM162 102h1v1h-1zM165 102h2v1h-2zM168 102h2v1h-2zM171 102h1v1h-1zM174 102h2v1h-2zM178 102h1v1h-1zM187 102h2v1h-2zM192 102h1v1h-1zM195 102h1v1h-1zM198 102h1v1h-1zM203 102h2v1h-2zM207 102h1v1h-1zM209 102h1v1h-1zM81 103h1v1h-1zM124 103h1v1h-1zM134 103h1v1h-1zM143 103h1v1h-1zM146 103h2v1h-2zM150 103h1v1h-1zM152 103h1v1h-1zM154 103h1v1h-1zM157 103h2v1h-2zM160 103h1v1h-1zM162 103h1v1h-1zM165 103h2v1h-2zM168 103h2v1h-2zM171 103h1v1h-1zM174 103h1v1h-1zM178 103h1v1h-1zM187 103h2v1h-2zM192 103h1v1h-1zM195 103h1v1h-1zM198 103h1v1h-1zM203 103h2v1h-2zM207 103h1v1h-1zM209 103h1v1h-1zM82 104h1v1h-1zM124 104h1v1h-1zM134 104h1v1h-1zM143 104h1v1h-1zM146 104h2v1h-2zM150 104h1v1h-1zM152 104h1v1h-1zM154 104h1v1h-1zM157 104h2v1h-2zM160 104h1v1h-1zM162 104h1v1h-1zM165 104h3v1h-3zM169 104h1v1h-1zM171 104h1v1h-1zM174 104h1v1h-1zM178 104h1v1h-1zM187 104h2v1h-2zM192 104h1v1h-1zM195 104h1v1h-1zM198 104h1v1h-1zM203 104h2v1h-2zM207 104h1v1h-1zM209 104h1v1h-1zM82 105h1v1h-1zM124 105h1v1h-1zM128 105h1v1h-1zM134 105h1v1h-1zM142 105h2v1h-2zM146 105h2v1h-2zM150 105h1v1h-1zM152 105h1v1h-1zM154 105h1v1h-1zM157 105h2v1h-2zM160 105h1v1h-1zM162 105h1v1h-1zM165 105h3v1h-3zM169 105h1v1h-1zM171 105h1v1h-1zM174 105h1v1h-1zM178 105h1v1h-1zM187 105h2v1h-2zM192 105h1v1h-1zM195 105h1v1h-1zM203 105h1v1h-1zM208 105h2v1h-2zM82 106h1v1h-1zM124 106h1v1h-1zM128 106h1v1h-1zM134 106h2v1h-2zM142 106h1v1h-1zM144 106h1v1h-1zM146 106h1v1h-1zM148 106h1v1h-1zM150 106h1v1h-1zM153 106h1v1h-1zM157 106h2v1h-2zM160 106h1v1h-1zM162 106h1v1h-1zM165 106h3v1h-3zM169 106h1v1h-1zM171 106h1v1h-1zM174 106h1v1h-1zM178 106h1v1h-1zM187 106h2v1h-2zM192 106h1v1h-1zM195 106h1v1h-1zM203 106h1v1h-1zM208 106h2v1h-2zM82 107h1v1h-1zM86 107h1v1h-1zM124 107h1v1h-1zM128 107h1v1h-1zM134 107h2v1h-2zM142 107h1v1h-1zM144 107h1v1h-1zM146 107h1v1h-1zM148 107h1v1h-1zM150 107h1v1h-1zM153 107h1v1h-1zM157 107h2v1h-2zM162 107h1v1h-1zM165 107h3v1h-3zM170 107h2v1h-2zM178 107h1v1h-1zM187 107h2v1h-2zM192 107h1v1h-1zM195 107h1v1h-1zM203 107h1v1h-1zM208 107h2v1h-2zM82 108h1v1h-1zM86 108h1v1h-1zM124 108h2v1h-2zM128 108h2v1h-2zM134 108h2v1h-2zM142 108h1v1h-1zM144 108h2v1h-2zM148 108h1v1h-1zM150 108h1v1h-1zM153 108h1v1h-1zM157 108h2v1h-2zM163 108h2v1h-2zM166 108h2v1h-2zM170 108h2v1h-2zM178 108h1v1h-1zM187 108h2v1h-2zM192 108h1v1h-1zM195 108h1v1h-1zM203 108h1v1h-1zM208 108h2v1h-2zM82 109h1v1h-1zM86 109h1v1h-1zM123 109h1v1h-1zM125 109h1v1h-1zM128 109h2v1h-2zM134 109h2v1h-2zM142 109h1v1h-1zM144 109h2v1h-2zM149 109h2v1h-2zM153 109h1v1h-1zM157 109h2v1h-2zM163 109h2v1h-2zM166 109h1v1h-1zM170 109h2v1h-2zM178 109h1v1h-1zM188 109h1v1h-1zM193 109h1v1h-1zM195 109h1v1h-1zM203 109h1v1h-1zM208 109h2v1h-2zM82 110h1v1h-1zM86 110h1v1h-1zM123 110h1v1h-1zM125 110h1v1h-1zM128 110h2v1h-2zM134 110h2v1h-2zM142 110h1v1h-1zM144 110h2v1h-2zM149 110h2v1h-2zM153 110h1v1h-1zM157 110h2v1h-2zM163 110h2v1h-2zM166 110h1v1h-1zM170 110h2v1h-2zM178 110h1v1h-1zM188 110h1v1h-1zM193 110h1v1h-1zM195 110h1v1h-1zM203 110h1v1h-1zM208 110h2v1h-2zM82 111h1v1h-1zM86 111h1v1h-1zM123 111h1v1h-1zM125 111h2v1h-2zM128 111h2v1h-2zM134 111h2v1h-2zM140 111h1v1h-1zM142 111h1v1h-1zM144 111h2v1h-2zM149 111h2v1h-2zM153 111h1v1h-1zM157 111h2v1h-2zM163 111h2v1h-2zM166 111h1v1h-1zM170 111h2v1h-2zM178 111h1v1h-1zM188 111h1v1h-1zM193 111h1v1h-1zM195 111h1v1h-1zM203 111h1v1h-1zM209 111h1v1h-1zM82 112h1v1h-1zM86 112h1v1h-1zM93 112h1v1h-1zM121 112h1v1h-1zM123 112h1v1h-1zM125 112h2v1h-2zM128 112h2v1h-2zM134 112h2v1h-2zM140 112h1v1h-1zM142 112h1v1h-1zM144 112h2v1h-2zM149 112h2v1h-2zM158 112h1v1h-1zM163 112h2v1h-2zM166 112h1v1h-1zM170 112h2v1h-2zM178 112h1v1h-1zM188 112h1v1h-1zM193 112h1v1h-1zM195 112h1v1h-1zM203 112h1v1h-1zM209 112h1v1h-1zM82 113h1v1h-1zM86 113h2v1h-2zM93 113h1v1h-1zM121 113h1v1h-1zM123 113h1v1h-1zM125 113h2v1h-2zM128 113h2v1h-2zM134 113h2v1h-2zM139 113h2v1h-2zM142 113h1v1h-1zM144 113h2v1h-2zM149 113h2v1h-2zM158 113h1v1h-1zM163 113h2v1h-2zM170 113h2v1h-2zM178 113h1v1h-1zM188 113h1v1h-1zM193 113h2v1h-2zM203 113h1v1h-1zM209 113h1v1h-1zM82 114h1v1h-1zM86 114h2v1h-2zM93 114h1v1h-1zM121 114h1v1h-1zM123 114h1v1h-1zM125 114h2v1h-2zM128 114h1v1h-1zM130 114h1v1h-1zM132 114h1v1h-1zM134 114h2v1h-2zM139 114h2v1h-2zM142 114h1v1h-1zM144 114h2v1h-2zM149 114h2v1h-2zM158 114h1v1h-1zM163 114h2v1h-2zM170 114h2v1h-2zM178 114h1v1h-1zM188 114h1v1h-1zM193 114h2v1h-2zM82 115h1v1h-1zM86 115h2v1h-2zM93 115h1v1h-1zM121 115h1v1h-1zM123 115h1v1h-1zM126 115h1v1h-1zM128 115h1v1h-1zM130 115h1v1h-1zM132 115h2v1h-2zM136 115h1v1h-1zM138 115h1v1h-1zM140 115h1v1h-1zM142 115h1v1h-1zM145 115h1v1h-1zM149 115h2v1h-2zM158 115h1v1h-1zM163 115h2v1h-2zM170 115h2v1h-2zM178 115h1v1h-1zM188 115h1v1h-1zM193 115h2v1h-2zM82 116h1v1h-1zM84 116h2v1h-2zM88 116h1v1h-1zM93 116h2v1h-2zM121 116h3v1h-3zM126 116h1v1h-1zM128 116h1v1h-1zM130 116h1v1h-1zM132 116h2v1h-2zM136 116h1v1h-1zM138 116h1v1h-1zM140 116h1v1h-1zM142 116h1v1h-1zM145 116h1v1h-1zM150 116h1v1h-1zM158 116h1v1h-1zM163 116h2v1h-2zM170 116h2v1h-2zM178 116h1v1h-1zM188 116h1v1h-1zM193 116h2v1h-2zM82 117h2v1h-2zM85 117h1v1h-1zM88 117h1v1h-1zM93 117h2v1h-2zM121 117h3v1h-3zM126 117h2v1h-2zM130 117h1v1h-1zM132 117h2v1h-2zM136 117h2v1h-2zM140 117h1v1h-1zM142 117h1v1h-1zM150 117h1v1h-1zM158 117h1v1h-1zM163 117h2v1h-2zM170 117h2v1h-2zM178 117h1v1h-1zM188 117h1v1h-1zM193 117h2v1h-2zM82 118h2v1h-2zM85 118h1v1h-1zM88 118h1v1h-1zM93 118h2v1h-2zM118 118h1v1h-1zM121 118h2v1h-2zM126 118h2v1h-2zM130 118h1v1h-1zM132 118h2v1h-2zM136 118h2v1h-2zM140 118h2v1h-2zM150 118h1v1h-1zM163 118h2v1h-2zM171 118h1v1h-1zM178 118h1v1h-1zM188 118h1v1h-1zM193 118h2v1h-2zM82 119h1v1h-1zM85 119h1v1h-1zM88 119h1v1h-1zM91 119h1v1h-1zM93 119h2v1h-2zM117 119h2v1h-2zM121 119h2v1h-2zM126 119h2v1h-2zM130 119h4v1h-4zM136 119h1v1h-1zM140 119h2v1h-2zM150 119h1v1h-1zM163 119h2v1h-2zM171 119h1v1h-1zM178 119h1v1h-1zM188 119h1v1h-1zM194 119h1v1h-1zM85 120h1v1h-1zM88 120h1v1h-1zM90 120h2v1h-2zM93 120h2v1h-2zM116 120h1v1h-1zM119 120h1v1h-1zM121 120h1v1h-1zM127 120h1v1h-1zM131 120h3v1h-3zM140 120h2v1h-2zM150 120h1v1h-1zM163 120h2v1h-2zM171 120h1v1h-1zM178 120h1v1h-1zM188 120h1v1h-1zM194 120h1v1h-1zM85 121h1v1h-1zM88 121h1v1h-1zM90 121h3v1h-3zM94 121h1v1h-1zM116 121h1v1h-1zM119 121h1v1h-1zM121 121h1v1h-1zM127 121h1v1h-1zM131 121h1v1h-1zM133 121h1v1h-1zM140 121h2v1h-2zM150 121h1v1h-1zM163 121h2v1h-2zM171 121h1v1h-1zM188 121h1v1h-1zM194 121h1v1h-1zM85 122h1v1h-1zM88 122h2v1h-2zM91 122h2v1h-2zM95 122h2v1h-2zM114 122h1v1h-1zM116 122h1v1h-1zM119 122h1v1h-1zM121 122h1v1h-1zM127 122h1v1h-1zM131 122h1v1h-1zM133 122h1v1h-1zM140 122h2v1h-2zM150 122h1v1h-1zM164 122h1v1h-1zM171 122h1v1h-1zM188 122h1v1h-1zM194 122h1v1h-1zM85 123h1v1h-1zM88 123h2v1h-2zM91 123h2v1h-2zM95 123h2v1h-2zM114 123h2v1h-2zM119 123h1v1h-1zM121 123h1v1h-1zM127 123h1v1h-1zM131 123h1v1h-1zM133 123h1v1h-1zM141 123h1v1h-1zM164 123h1v1h-1zM171 123h1v1h-1zM188 123h1v1h-1zM194 123h1v1h-1zM85 124h1v1h-1zM88 124h2v1h-2zM92 124h1v1h-1zM95 124h2v1h-2zM100 124h1v1h-1zM114 124h2v1h-2zM119 124h1v1h-1zM121 124h1v1h-1zM127 124h1v1h-1zM133 124h1v1h-1zM141 124h1v1h-1zM164 124h1v1h-1zM194 124h1v1h-1zM88 125h2v1h-2zM92 125h1v1h-1zM95 125h2v1h-2zM100 125h1v1h-1zM114 125h2v1h-2zM119 125h1v1h-1zM121 125h1v1h-1zM127 125h1v1h-1zM133 125h1v1h-1zM164 125h1v1h-1zM194 125h1v1h-1zM88 126h1v1h-1zM92 126h1v1h-1zM97 126h1v1h-1zM100 126h2v1h-2zM114 126h1v1h-1zM120 126h2v1h-2zM127 126h1v1h-1zM133 126h1v1h-1zM164 126h1v1h-1zM88 127h1v1h-1zM92 127h1v1h-1zM97 127h1v1h-1zM100 127h2v1h-2zM107 127h1v1h-1zM114 127h1v1h-1zM120 127h2v1h-2zM127 127h1v1h-1zM133 127h1v1h-1zM164 127h1v1h-1zM92 128h1v1h-1zM97 128h1v1h-1zM100 128h1v1h-1zM102 128h1v1h-1zM107 128h1v1h-1zM110 128h1v1h-1zM113 128h1v1h-1zM120 128h2v1h-2zM127 128h1v1h-1zM164 128h1v1h-1zM92 129h1v1h-1zM97 129h1v1h-1zM100 129h1v1h-1zM102 129h1v1h-1zM107 129h2v1h-2zM110 129h1v1h-1zM113 129h1v1h-1zM120 129h2v1h-2zM97 130h1v1h-1zM100 130h1v1h-1zM102 130h1v1h-1zM107 130h2v1h-2zM110 130h1v1h-1zM113 130h1v1h-1zM120 130h2v1h-2zM97 131h1v1h-1zM100 131h1v1h-1zM102 131h1v1h-1zM107 131h2v1h-2zM110 131h1v1h-1zM113 131h1v1h-1zM120 131h2v1h-2zM98 132h1v1h-1zM100 132h1v1h-1zM103 132h1v1h-1zM107 132h3v1h-3zM111 132h1v1h-1zM113 132h1v1h-1zM121 132h1v1h-1zM98 133h1v1h-1zM100 133h1v1h-1zM103 133h1v1h-1zM107 133h1v1h-1zM109 133h1v1h-1zM111 133h1v1h-1zM113 133h1v1h-1zM121 133h1v1h-1zM98 134h1v1h-1zM100 134h1v1h-1zM103 134h1v1h-1zM107 134h1v1h-1zM109 134h1v1h-1zM111 134h1v1h-1zM113 134h1v1h-1zM121 134h1v1h-1zM98 135h2v1h-2zM103 135h1v1h-1zM107 135h1v1h-1zM111 135h1v1h-1zM113 135h1v1h-1zM121 135h1v1h-1zM98 136h2v1h-2zM103 136h1v1h-1zM107 136h1v1h-1zM111 136h1v1h-1zM113 136h1v1h-1zM98 137h2v1h-2zM104 137h1v1h-1zM107 137h1v1h-1zM111 137h1v1h-1zM113 137h1v1h-1zM99 138h1v1h-1zM104 138h1v1h-1zM106 138h2v1h-2zM111 138h2v1h-2zM99 139h1v1h-1zM104 139h1v1h-1zM106 139h2v1h-2zM111 139h2v1h-2zM99 140h1v1h-1zM104 140h1v1h-1zM106 140h2v1h-2zM112 140h1v1h-1zM99 141h1v1h-1zM104 141h1v1h-1zM106 141h2v1h-2zM112 141h1v1h-1zM99 142h1v1h-1zM104 142h1v1h-1zM106 142h2v1h-2zM112 142h1v1h-1zM99 143h1v1h-1zM105 143h1v1h-1zM107 143h1v1h-1zM112 143h1v1h-1zM99 144h1v1h-1zM105 144h1v1h-1zM107 144h1v1h-1zM99 145h1v1h-1zM105 145h1v1h-1zM107 145h1v1h-1zM105 146h1v1h-1zM107 146h1v1h-1zM107 147h1v1h-1z" fill="#700018"/>
<path d="M220 93h2v1h-2zM217 94h8v1h-8zM216 95h10v1h-10zM216 96h10v1h-10zM216 97h10v1h-10zM215 98h12v1h-12zM215 99h12v1h-12zM216 100h10v1h-10zM216 101h10v1h-10zM216 102h10v1h-10zM217 103h8v1h-8zM220 104h2v1h-2z" fill="#700018"/>
</svg>
<div class="tt" style="left:23px;top:8px;color:#d4d0c8">Nennwert-Verlauf</div>
<div class="tx" style="left:148px;top:35px;height:9px;overflow:hidden">vMax</div>
<div class="tx" style="left:147px;top:46px">-198.9</div>
<div class="tx yl" style="right:169px;top:62px">-184.4</div>
<div class="tx yl" style="right:169px;top:78px">-192.5</div>
<div class="tx yl" style="right:169px;top:100px">-200.6</div>
<div class="tx yl" style="right:169px;top:122px">-208.7</div>
<div class="tx yl" style="right:169px;top:137px">-216.8</div>
<div class="tx" style="left:76px;top:153px">0</div>
<div class="tx" style="left:106px;top:153px">50</div>
<div class="tx" style="left:141px;top:153px">100</div>
<div class="tx" style="left:180px;top:153px">150</div>
<div class="tx" style="left:208px;top:153px">200</div>
<div class="tx" style="left:101px;top:167px">Optimierungsschritte</div>
</div>
<div class="win" style="left:0px;top:189px;width:242px">
<svg width="242" height="189" viewBox="0 0 242 189" shape-rendering="crispEdges">
<rect x="0" y="0" width="242" height="189" fill="#d4d0c8"/>
<rect x="1" y="1" width="240" height="1" fill="#ffffff"/>
<rect x="1" y="1" width="1" height="187" fill="#ffffff"/>
<rect x="0" y="188" width="242" height="1" fill="#404040"/>
<rect x="241" y="0" width="1" height="189" fill="#404040"/>
<rect x="1" y="187" width="240" height="1" fill="#808080"/>
<rect x="240" y="1" width="1" height="187" fill="#808080"/>
<rect x="4" y="4" width="234" height="18" fill="#808080"/>
<rect x="6" y="5" width="16" height="16" fill="#0000ff"/>
<rect x="7" y="6" width="14" height="14" fill="#ffffff"/>
<rect x="7" y="8" width="1" height="1" fill="#00ffff"/>
<rect x="8" y="9" width="1" height="1" fill="#00ffff"/>
<rect x="8" y="10" width="1" height="1" fill="#00ffff"/>
<rect x="9" y="11" width="1" height="1" fill="#00ffff"/>
<rect x="9" y="12" width="1" height="1" fill="#00ffff"/>
<rect x="10" y="13" width="1" height="1" fill="#00ffff"/>
<rect x="11" y="14" width="1" height="1" fill="#00ffff"/>
<rect x="11" y="15" width="1" height="1" fill="#00ffff"/>
<rect x="12" y="16" width="1" height="1" fill="#00ffff"/>
<rect x="13" y="17" width="1" height="1" fill="#00ffff"/>
<rect x="14" y="18" width="1" height="1" fill="#00ffff"/>
<rect x="15" y="19" width="1" height="1" fill="#00ffff"/>
<rect x="16" y="19" width="1" height="1" fill="#00ffff"/>
<rect x="17" y="19" width="1" height="1" fill="#00ffff"/>
<rect x="18" y="19" width="1" height="1" fill="#00ffff"/>
<rect x="19" y="19" width="1" height="1" fill="#00ffff"/>
<rect x="20" y="19" width="1" height="1" fill="#00ffff"/>
<rect x="7" y="14" width="1" height="1" fill="#00ff00"/>
<rect x="8" y="14" width="1" height="1" fill="#00ff00"/>
<rect x="9" y="14" width="1" height="1" fill="#00ff00"/>
<rect x="10" y="14" width="1" height="1" fill="#00ff00"/>
<rect x="11" y="14" width="1" height="1" fill="#00ff00"/>
<rect x="12" y="14" width="1" height="1" fill="#00ff00"/>
<rect x="13" y="14" width="1" height="1" fill="#00ff00"/>
<rect x="14" y="14" width="1" height="1" fill="#00ff00"/>
<rect x="15" y="13" width="1" height="1" fill="#00ff00"/>
<rect x="16" y="11" width="1" height="1" fill="#00ff00"/>
<rect x="16" y="12" width="1" height="1" fill="#00ff00"/>
<rect x="17" y="9" width="1" height="1" fill="#00ff00"/>
<rect x="17" y="10" width="1" height="1" fill="#00ff00"/>
<rect x="18" y="11" width="1" height="1" fill="#00ff00"/>
<rect x="18" y="12" width="1" height="1" fill="#00ff00"/>
<rect x="19" y="13" width="1" height="1" fill="#00ff00"/>
<rect x="19" y="14" width="1" height="1" fill="#00ff00"/>
<rect x="20" y="15" width="1" height="1" fill="#00ff00"/>
<rect x="20" y="16" width="1" height="1" fill="#00ff00"/>
<rect x="20" y="17" width="1" height="1" fill="#00ff00"/>
<rect x="186" y="6" width="16" height="14" fill="#404040"/>
<rect x="186" y="6" width="15" height="13" fill="#ffffff"/>
<rect x="187" y="7" width="14" height="12" fill="#808080"/>
<rect x="187" y="7" width="13" height="11" fill="#d4d0c8"/>
<rect x="202" y="6" width="16" height="14" fill="#404040"/>
<rect x="202" y="6" width="15" height="13" fill="#ffffff"/>
<rect x="203" y="7" width="14" height="12" fill="#808080"/>
<rect x="203" y="7" width="13" height="11" fill="#d4d0c8"/>
<rect x="220" y="6" width="16" height="14" fill="#404040"/>
<rect x="220" y="6" width="15" height="13" fill="#ffffff"/>
<rect x="221" y="7" width="14" height="12" fill="#808080"/>
<rect x="221" y="7" width="13" height="11" fill="#d4d0c8"/>
<rect x="190" y="15" width="6" height="2" fill="#000000"/>
<rect x="205" y="8" width="9" height="9" fill="#000000"/>
<rect x="206" y="10" width="7" height="6" fill="#d4d0c8"/>
<rect x="224" y="9" width="1" height="1" fill="#000000"/>
<rect x="225" y="9" width="1" height="1" fill="#000000"/>
<rect x="230" y="9" width="1" height="1" fill="#000000"/>
<rect x="231" y="9" width="1" height="1" fill="#000000"/>
<rect x="225" y="10" width="1" height="1" fill="#000000"/>
<rect x="226" y="10" width="1" height="1" fill="#000000"/>
<rect x="229" y="10" width="1" height="1" fill="#000000"/>
<rect x="230" y="10" width="1" height="1" fill="#000000"/>
<rect x="226" y="11" width="1" height="1" fill="#000000"/>
<rect x="227" y="11" width="1" height="1" fill="#000000"/>
<rect x="228" y="11" width="1" height="1" fill="#000000"/>
<rect x="229" y="11" width="1" height="1" fill="#000000"/>
<rect x="227" y="12" width="1" height="1" fill="#000000"/>
<rect x="228" y="12" width="1" height="1" fill="#000000"/>
<rect x="226" y="13" width="1" height="1" fill="#000000"/>
<rect x="227" y="13" width="1" height="1" fill="#000000"/>
<rect x="228" y="13" width="1" height="1" fill="#000000"/>
<rect x="229" y="13" width="1" height="1" fill="#000000"/>
<rect x="225" y="14" width="1" height="1" fill="#000000"/>
<rect x="226" y="14" width="1" height="1" fill="#000000"/>
<rect x="229" y="14" width="1" height="1" fill="#000000"/>
<rect x="230" y="14" width="1" height="1" fill="#000000"/>
<rect x="224" y="15" width="1" height="1" fill="#000000"/>
<rect x="225" y="15" width="1" height="1" fill="#000000"/>
<rect x="230" y="15" width="1" height="1" fill="#000000"/>
<rect x="231" y="15" width="1" height="1" fill="#000000"/>
<rect x="4" y="23" width="234" height="162" fill="#ffffff"/>
<rect x="4" y="23" width="233" height="1" fill="#808080"/>
<rect x="4" y="23" width="1" height="161" fill="#808080"/>
<rect x="5" y="24" width="231" height="1" fill="#404040"/>
<rect x="5" y="24" width="1" height="159" fill="#404040"/>
<rect x="5" y="183" width="232" height="1" fill="#d4d0c8"/>
<rect x="236" y="24" width="1" height="160" fill="#d4d0c8"/>
<rect x="6" y="25" width="230" height="158" fill="#fbfbef"/>
<rect x="7" y="26" width="228" height="156" fill="#000000"/>
<rect x="8" y="27" width="226" height="154" fill="#ffffff"/>
<rect x="113" y="60" width="1" height="3" fill="#c0c0c0"/>
<rect x="113" y="66" width="1" height="3" fill="#c0c0c0"/>
<rect x="113" y="72" width="1" height="3" fill="#c0c0c0"/>
<rect x="113" y="78" width="1" height="3" fill="#c0c0c0"/>
<rect x="113" y="84" width="1" height="3" fill="#c0c0c0"/>
<rect x="113" y="90" width="1" height="3" fill="#c0c0c0"/>
<rect x="113" y="96" width="1" height="3" fill="#c0c0c0"/>
<rect x="113" y="102" width="1" height="3" fill="#c0c0c0"/>
<rect x="113" y="108" width="1" height="3" fill="#c0c0c0"/>
<rect x="113" y="114" width="1" height="3" fill="#c0c0c0"/>
<rect x="113" y="120" width="1" height="3" fill="#c0c0c0"/>
<rect x="113" y="126" width="1" height="3" fill="#c0c0c0"/>
<rect x="113" y="132" width="1" height="3" fill="#c0c0c0"/>
<rect x="113" y="138" width="1" height="3" fill="#c0c0c0"/>
<rect x="113" y="144" width="1" height="3" fill="#c0c0c0"/>
<rect x="150" y="60" width="1" height="3" fill="#c0c0c0"/>
<rect x="150" y="66" width="1" height="3" fill="#c0c0c0"/>
<rect x="150" y="72" width="1" height="3" fill="#c0c0c0"/>
<rect x="150" y="78" width="1" height="3" fill="#c0c0c0"/>
<rect x="150" y="84" width="1" height="3" fill="#c0c0c0"/>
<rect x="150" y="90" width="1" height="3" fill="#c0c0c0"/>
<rect x="150" y="96" width="1" height="3" fill="#c0c0c0"/>
<rect x="150" y="102" width="1" height="3" fill="#c0c0c0"/>
<rect x="150" y="108" width="1" height="3" fill="#c0c0c0"/>
<rect x="150" y="114" width="1" height="3" fill="#c0c0c0"/>
<rect x="150" y="120" width="1" height="3" fill="#c0c0c0"/>
<rect x="150" y="126" width="1" height="3" fill="#c0c0c0"/>
<rect x="150" y="132" width="1" height="3" fill="#c0c0c0"/>
<rect x="150" y="138" width="1" height="3" fill="#c0c0c0"/>
<rect x="150" y="144" width="1" height="3" fill="#c0c0c0"/>
<rect x="187" y="60" width="1" height="3" fill="#c0c0c0"/>
<rect x="187" y="66" width="1" height="3" fill="#c0c0c0"/>
<rect x="187" y="72" width="1" height="3" fill="#c0c0c0"/>
<rect x="187" y="78" width="1" height="3" fill="#c0c0c0"/>
<rect x="187" y="84" width="1" height="3" fill="#c0c0c0"/>
<rect x="187" y="90" width="1" height="3" fill="#c0c0c0"/>
<rect x="187" y="96" width="1" height="3" fill="#c0c0c0"/>
<rect x="187" y="102" width="1" height="3" fill="#c0c0c0"/>
<rect x="187" y="108" width="1" height="3" fill="#c0c0c0"/>
<rect x="187" y="114" width="1" height="3" fill="#c0c0c0"/>
<rect x="187" y="120" width="1" height="3" fill="#c0c0c0"/>
<rect x="187" y="126" width="1" height="3" fill="#c0c0c0"/>
<rect x="187" y="132" width="1" height="3" fill="#c0c0c0"/>
<rect x="187" y="138" width="1" height="3" fill="#c0c0c0"/>
<rect x="187" y="144" width="1" height="3" fill="#c0c0c0"/>
<rect x="77" y="82" width="3" height="1" fill="#c0c0c0"/>
<rect x="83" y="82" width="3" height="1" fill="#c0c0c0"/>
<rect x="89" y="82" width="3" height="1" fill="#c0c0c0"/>
<rect x="95" y="82" width="3" height="1" fill="#c0c0c0"/>
<rect x="101" y="82" width="3" height="1" fill="#c0c0c0"/>
<rect x="107" y="82" width="3" height="1" fill="#c0c0c0"/>
<rect x="113" y="82" width="3" height="1" fill="#c0c0c0"/>
<rect x="119" y="82" width="3" height="1" fill="#c0c0c0"/>
<rect x="125" y="82" width="3" height="1" fill="#c0c0c0"/>
<rect x="131" y="82" width="3" height="1" fill="#c0c0c0"/>
<rect x="137" y="82" width="3" height="1" fill="#c0c0c0"/>
<rect x="143" y="82" width="3" height="1" fill="#c0c0c0"/>
<rect x="149" y="82" width="3" height="1" fill="#c0c0c0"/>
<rect x="155" y="82" width="3" height="1" fill="#c0c0c0"/>
<rect x="161" y="82" width="3" height="1" fill="#c0c0c0"/>
<rect x="167" y="82" width="3" height="1" fill="#c0c0c0"/>
<rect x="173" y="82" width="3" height="1" fill="#c0c0c0"/>
<rect x="179" y="82" width="3" height="1" fill="#c0c0c0"/>
<rect x="185" y="82" width="3" height="1" fill="#c0c0c0"/>
<rect x="191" y="82" width="3" height="1" fill="#c0c0c0"/>
<rect x="197" y="82" width="3" height="1" fill="#c0c0c0"/>
<rect x="203" y="82" width="3" height="1" fill="#c0c0c0"/>
<rect x="209" y="82" width="3" height="1" fill="#c0c0c0"/>
<rect x="215" y="82" width="3" height="1" fill="#c0c0c0"/>
<rect x="221" y="82" width="3" height="1" fill="#c0c0c0"/>
<rect x="77" y="104" width="3" height="1" fill="#c0c0c0"/>
<rect x="83" y="104" width="3" height="1" fill="#c0c0c0"/>
<rect x="89" y="104" width="3" height="1" fill="#c0c0c0"/>
<rect x="95" y="104" width="3" height="1" fill="#c0c0c0"/>
<rect x="101" y="104" width="3" height="1" fill="#c0c0c0"/>
<rect x="107" y="104" width="3" height="1" fill="#c0c0c0"/>
<rect x="113" y="104" width="3" height="1" fill="#c0c0c0"/>
<rect x="119" y="104" width="3" height="1" fill="#c0c0c0"/>
<rect x="125" y="104" width="3" height="1" fill="#c0c0c0"/>
<rect x="131" y="104" width="3" height="1" fill="#c0c0c0"/>
<rect x="137" y="104" width="3" height="1" fill="#c0c0c0"/>
<rect x="143" y="104" width="3" height="1" fill="#c0c0c0"/>
<rect x="149" y="104" width="3" height="1" fill="#c0c0c0"/>
<rect x="155" y="104" width="3" height="1" fill="#c0c0c0"/>
<rect x="161" y="104" width="3" height="1" fill="#c0c0c0"/>
<rect x="167" y="104" width="3" height="1" fill="#c0c0c0"/>
<rect x="173" y="104" width="3" height="1" fill="#c0c0c0"/>
<rect x="179" y="104" width="3" height="1" fill="#c0c0c0"/>
<rect x="185" y="104" width="3" height="1" fill="#c0c0c0"/>
<rect x="191" y="104" width="3" height="1" fill="#c0c0c0"/>
<rect x="197" y="104" width="3" height="1" fill="#c0c0c0"/>
<rect x="203" y="104" width="3" height="1" fill="#c0c0c0"/>
<rect x="209" y="104" width="3" height="1" fill="#c0c0c0"/>
<rect x="215" y="104" width="3" height="1" fill="#c0c0c0"/>
<rect x="221" y="104" width="3" height="1" fill="#c0c0c0"/>
<rect x="77" y="126" width="3" height="1" fill="#c0c0c0"/>
<rect x="83" y="126" width="3" height="1" fill="#c0c0c0"/>
<rect x="89" y="126" width="3" height="1" fill="#c0c0c0"/>
<rect x="95" y="126" width="3" height="1" fill="#c0c0c0"/>
<rect x="101" y="126" width="3" height="1" fill="#c0c0c0"/>
<rect x="107" y="126" width="3" height="1" fill="#c0c0c0"/>
<rect x="113" y="126" width="3" height="1" fill="#c0c0c0"/>
<rect x="119" y="126" width="3" height="1" fill="#c0c0c0"/>
<rect x="125" y="126" width="3" height="1" fill="#c0c0c0"/>
<rect x="131" y="126" width="3" height="1" fill="#c0c0c0"/>
<rect x="137" y="126" width="3" height="1" fill="#c0c0c0"/>
<rect x="143" y="126" width="3" height="1" fill="#c0c0c0"/>
<rect x="149" y="126" width="3" height="1" fill="#c0c0c0"/>
<rect x="155" y="126" width="3" height="1" fill="#c0c0c0"/>
<rect x="161" y="126" width="3" height="1" fill="#c0c0c0"/>
<rect x="167" y="126" width="3" height="1" fill="#c0c0c0"/>
<rect x="173" y="126" width="3" height="1" fill="#c0c0c0"/>
<rect x="179" y="126" width="3" height="1" fill="#c0c0c0"/>
<rect x="185" y="126" width="3" height="1" fill="#c0c0c0"/>
<rect x="191" y="126" width="3" height="1" fill="#c0c0c0"/>
<rect x="197" y="126" width="3" height="1" fill="#c0c0c0"/>
<rect x="203" y="126" width="3" height="1" fill="#c0c0c0"/>
<rect x="209" y="126" width="3" height="1" fill="#c0c0c0"/>
<rect x="215" y="126" width="3" height="1" fill="#c0c0c0"/>
<rect x="221" y="126" width="3" height="1" fill="#c0c0c0"/>
<rect x="76.5" y="60.5" width="149" height="87" fill="none" stroke="#000" stroke-width="1"/>
<rect x="148" y="32" width="56" height="1" fill="#b4d21e"/>
<path d="M80 60h1v1h-1zM76 61h6v1h-6zM81 62h1v1h-1zM87 62h1v1h-1zM82 63h5v1h-5zM88 63h1v1h-1zM89 64h1v1h-1zM94 64h1v1h-1zM89 65h5v1h-5zM95 65h1v1h-1zM95 66h1v1h-1zM95 67h6v1h-6zM101 68h1v1h-1zM102 69h1v1h-1zM103 70h1v1h-1zM107 70h1v1h-1zM104 71h3v1h-3zM108 71h2v1h-2zM109 72h1v1h-1zM110 73h1v1h-1zM110 74h1v1h-1zM114 74h1v1h-1zM110 75h6v1h-6zM116 76h1v1h-1zM116 77h1v1h-1zM116 78h1v1h-1zM117 79h6v1h-6zM123 80h1v1h-1zM123 81h1v1h-1zM124 82h1v1h-1zM124 83h1v1h-1zM124 84h1v1h-1zM130 84h1v1h-1zM125 85h5v1h-5zM131 85h1v1h-1zM131 86h1v1h-1zM131 87h1v1h-1zM131 88h1v1h-1zM131 89h1v1h-1zM131 90h1v1h-1zM135 90h1v1h-1zM132 91h5v1h-5zM137 92h1v1h-1zM138 93h1v1h-1zM138 94h1v1h-1zM138 95h1v1h-1zM138 96h1v1h-1zM138 97h6v1h-6zM143 98h3v1h-3zM145 99h1v1h-1zM145 100h1v1h-1zM145 101h1v1h-1zM146 102h1v1h-1zM146 103h1v1h-1zM146 104h1v1h-1zM150 104h1v1h-1zM146 105h8v1h-8zM153 106h1v1h-1zM153 107h1v1h-1zM154 108h1v1h-1zM154 109h1v1h-1zM154 110h1v1h-1zM154 111h1v1h-1zM154 112h1v1h-1zM159 112h1v1h-1zM154 113h5v1h-5zM160 113h1v1h-1zM160 114h1v1h-1zM160 115h1v1h-1zM160 116h1v1h-1zM160 117h1v1h-1zM160 118h1v1h-1zM160 119h1v1h-1zM160 120h1v1h-1zM160 121h8v1h-8zM167 122h1v1h-1zM167 123h1v1h-1zM167 124h1v1h-1zM168 125h1v1h-1zM168 126h1v1h-1zM168 127h1v1h-1zM168 128h1v1h-1zM168 129h7v1h-7zM174 130h1v1h-1zM174 131h1v1h-1zM174 132h1v1h-1zM174 133h1v1h-1zM174 134h1v1h-1zM174 135h1v1h-1zM175 136h1v1h-1zM175 137h7v1h-7zM196 137h1v1h-1zM182 138h1v1h-1zM191 138h26v1h-26zM182 139h1v1h-1zM191 139h1v1h-1zM196 139h1v1h-1zM183 140h1v1h-1zM191 140h1v1h-1zM183 141h1v1h-1zM191 141h1v1h-1zM183 142h1v1h-1zM191 142h1v1h-1zM183 143h1v1h-1zM191 143h1v1h-1zM184 144h1v1h-1zM191 144h1v1h-1zM184 145h1v1h-1zM191 145h1v1h-1zM184 146h1v1h-1zM188 146h1v1h-1zM190 146h1v1h-1zM184 147h7v1h-7z" fill="#b4d21e"/>
<path d="M220 132h2v1h-2zM217 133h8v1h-8zM216 134h10v1h-10zM216 135h10v1h-10zM216 136h10v1h-10zM215 137h12v1h-12zM215 138h12v1h-12zM216 139h10v1h-10zM216 140h10v1h-10zM216 141h10v1h-10zM217 142h8v1h-8zM220 143h2v1h-2z" fill="#b4d21e"/>
</svg>
<div class="tt" style="left:23px;top:8px;color:#d4d0c8">Nennwert-Verlauf</div>
<div class="tx" style="left:147px;top:35px;height:9px;overflow:hidden">d<span class="us">_</span>Anker</div>
<div class="tx" style="left:147px;top:46px">8.773</div>
<div class="tx yl" style="right:169px;top:62px">10.4</div>
<div class="tx yl" style="right:169px;top:78px">9.942</div>
<div class="tx yl" style="right:169px;top:100px">9.487</div>
<div class="tx yl" style="right:169px;top:122px">9.032</div>
<div class="tx yl" style="right:169px;top:137px">8.577</div>
<div class="tx" style="left:76px;top:153px">0</div>
<div class="tx" style="left:106px;top:153px">50</div>
<div class="tx" style="left:141px;top:153px">100</div>
<div class="tx" style="left:180px;top:153px">150</div>
<div class="tx" style="left:208px;top:153px">200</div>
<div class="tx" style="left:101px;top:167px">Optimierungsschritte</div>
</div>
<div class="win" style="left:242px;top:189px;width:242px">
<svg width="242" height="189" viewBox="0 0 242 189" shape-rendering="crispEdges">
<rect x="0" y="0" width="242" height="189" fill="#d4d0c8"/>
<rect x="1" y="1" width="240" height="1" fill="#ffffff"/>
<rect x="1" y="1" width="1" height="187" fill="#ffffff"/>
<rect x="0" y="188" width="242" height="1" fill="#404040"/>
<rect x="241" y="0" width="1" height="189" fill="#404040"/>
<rect x="1" y="187" width="240" height="1" fill="#808080"/>
<rect x="240" y="1" width="1" height="187" fill="#808080"/>
<rect x="4" y="4" width="234" height="18" fill="#808080"/>
<rect x="6" y="5" width="16" height="16" fill="#0000ff"/>
<rect x="7" y="6" width="14" height="14" fill="#ffffff"/>
<rect x="7" y="8" width="1" height="1" fill="#00ffff"/>
<rect x="8" y="9" width="1" height="1" fill="#00ffff"/>
<rect x="8" y="10" width="1" height="1" fill="#00ffff"/>
<rect x="9" y="11" width="1" height="1" fill="#00ffff"/>
<rect x="9" y="12" width="1" height="1" fill="#00ffff"/>
<rect x="10" y="13" width="1" height="1" fill="#00ffff"/>
<rect x="11" y="14" width="1" height="1" fill="#00ffff"/>
<rect x="11" y="15" width="1" height="1" fill="#00ffff"/>
<rect x="12" y="16" width="1" height="1" fill="#00ffff"/>
<rect x="13" y="17" width="1" height="1" fill="#00ffff"/>
<rect x="14" y="18" width="1" height="1" fill="#00ffff"/>
<rect x="15" y="19" width="1" height="1" fill="#00ffff"/>
<rect x="16" y="19" width="1" height="1" fill="#00ffff"/>
<rect x="17" y="19" width="1" height="1" fill="#00ffff"/>
<rect x="18" y="19" width="1" height="1" fill="#00ffff"/>
<rect x="19" y="19" width="1" height="1" fill="#00ffff"/>
<rect x="20" y="19" width="1" height="1" fill="#00ffff"/>
<rect x="7" y="14" width="1" height="1" fill="#00ff00"/>
<rect x="8" y="14" width="1" height="1" fill="#00ff00"/>
<rect x="9" y="14" width="1" height="1" fill="#00ff00"/>
<rect x="10" y="14" width="1" height="1" fill="#00ff00"/>
<rect x="11" y="14" width="1" height="1" fill="#00ff00"/>
<rect x="12" y="14" width="1" height="1" fill="#00ff00"/>
<rect x="13" y="14" width="1" height="1" fill="#00ff00"/>
<rect x="14" y="14" width="1" height="1" fill="#00ff00"/>
<rect x="15" y="13" width="1" height="1" fill="#00ff00"/>
<rect x="16" y="11" width="1" height="1" fill="#00ff00"/>
<rect x="16" y="12" width="1" height="1" fill="#00ff00"/>
<rect x="17" y="9" width="1" height="1" fill="#00ff00"/>
<rect x="17" y="10" width="1" height="1" fill="#00ff00"/>
<rect x="18" y="11" width="1" height="1" fill="#00ff00"/>
<rect x="18" y="12" width="1" height="1" fill="#00ff00"/>
<rect x="19" y="13" width="1" height="1" fill="#00ff00"/>
<rect x="19" y="14" width="1" height="1" fill="#00ff00"/>
<rect x="20" y="15" width="1" height="1" fill="#00ff00"/>
<rect x="20" y="16" width="1" height="1" fill="#00ff00"/>
<rect x="20" y="17" width="1" height="1" fill="#00ff00"/>
<rect x="186" y="6" width="16" height="14" fill="#404040"/>
<rect x="186" y="6" width="15" height="13" fill="#ffffff"/>
<rect x="187" y="7" width="14" height="12" fill="#808080"/>
<rect x="187" y="7" width="13" height="11" fill="#d4d0c8"/>
<rect x="202" y="6" width="16" height="14" fill="#404040"/>
<rect x="202" y="6" width="15" height="13" fill="#ffffff"/>
<rect x="203" y="7" width="14" height="12" fill="#808080"/>
<rect x="203" y="7" width="13" height="11" fill="#d4d0c8"/>
<rect x="220" y="6" width="16" height="14" fill="#404040"/>
<rect x="220" y="6" width="15" height="13" fill="#ffffff"/>
<rect x="221" y="7" width="14" height="12" fill="#808080"/>
<rect x="221" y="7" width="13" height="11" fill="#d4d0c8"/>
<rect x="190" y="15" width="6" height="2" fill="#000000"/>
<rect x="205" y="8" width="9" height="9" fill="#000000"/>
<rect x="206" y="10" width="7" height="6" fill="#d4d0c8"/>
<rect x="224" y="9" width="1" height="1" fill="#000000"/>
<rect x="225" y="9" width="1" height="1" fill="#000000"/>
<rect x="230" y="9" width="1" height="1" fill="#000000"/>
<rect x="231" y="9" width="1" height="1" fill="#000000"/>
<rect x="225" y="10" width="1" height="1" fill="#000000"/>
<rect x="226" y="10" width="1" height="1" fill="#000000"/>
<rect x="229" y="10" width="1" height="1" fill="#000000"/>
<rect x="230" y="10" width="1" height="1" fill="#000000"/>
<rect x="226" y="11" width="1" height="1" fill="#000000"/>
<rect x="227" y="11" width="1" height="1" fill="#000000"/>
<rect x="228" y="11" width="1" height="1" fill="#000000"/>
<rect x="229" y="11" width="1" height="1" fill="#000000"/>
<rect x="227" y="12" width="1" height="1" fill="#000000"/>
<rect x="228" y="12" width="1" height="1" fill="#000000"/>
<rect x="226" y="13" width="1" height="1" fill="#000000"/>
<rect x="227" y="13" width="1" height="1" fill="#000000"/>
<rect x="228" y="13" width="1" height="1" fill="#000000"/>
<rect x="229" y="13" width="1" height="1" fill="#000000"/>
<rect x="225" y="14" width="1" height="1" fill="#000000"/>
<rect x="226" y="14" width="1" height="1" fill="#000000"/>
<rect x="229" y="14" width="1" height="1" fill="#000000"/>
<rect x="230" y="14" width="1" height="1" fill="#000000"/>
<rect x="224" y="15" width="1" height="1" fill="#000000"/>
<rect x="225" y="15" width="1" height="1" fill="#000000"/>
<rect x="230" y="15" width="1" height="1" fill="#000000"/>
<rect x="231" y="15" width="1" height="1" fill="#000000"/>
<rect x="4" y="23" width="234" height="162" fill="#ffffff"/>
<rect x="4" y="23" width="233" height="1" fill="#808080"/>
<rect x="4" y="23" width="1" height="161" fill="#808080"/>
<rect x="5" y="24" width="231" height="1" fill="#404040"/>
<rect x="5" y="24" width="1" height="159" fill="#404040"/>
<rect x="5" y="183" width="232" height="1" fill="#d4d0c8"/>
<rect x="236" y="24" width="1" height="160" fill="#d4d0c8"/>
<rect x="6" y="25" width="230" height="158" fill="#fbfbef"/>
<rect x="7" y="26" width="228" height="156" fill="#000000"/>
<rect x="8" y="27" width="226" height="154" fill="#ffffff"/>
<rect x="113" y="60" width="1" height="3" fill="#c0c0c0"/>
<rect x="113" y="66" width="1" height="3" fill="#c0c0c0"/>
<rect x="113" y="72" width="1" height="3" fill="#c0c0c0"/>
<rect x="113" y="78" width="1" height="3" fill="#c0c0c0"/>
<rect x="113" y="84" width="1" height="3" fill="#c0c0c0"/>
<rect x="113" y="90" width="1" height="3" fill="#c0c0c0"/>
<rect x="113" y="96" width="1" height="3" fill="#c0c0c0"/>
<rect x="113" y="102" width="1" height="3" fill="#c0c0c0"/>
<rect x="113" y="108" width="1" height="3" fill="#c0c0c0"/>
<rect x="113" y="114" width="1" height="3" fill="#c0c0c0"/>
<rect x="113" y="120" width="1" height="3" fill="#c0c0c0"/>
<rect x="113" y="126" width="1" height="3" fill="#c0c0c0"/>
<rect x="113" y="132" width="1" height="3" fill="#c0c0c0"/>
<rect x="113" y="138" width="1" height="3" fill="#c0c0c0"/>
<rect x="113" y="144" width="1" height="3" fill="#c0c0c0"/>
<rect x="150" y="60" width="1" height="3" fill="#c0c0c0"/>
<rect x="150" y="66" width="1" height="3" fill="#c0c0c0"/>
<rect x="150" y="72" width="1" height="3" fill="#c0c0c0"/>
<rect x="150" y="78" width="1" height="3" fill="#c0c0c0"/>
<rect x="150" y="84" width="1" height="3" fill="#c0c0c0"/>
<rect x="150" y="90" width="1" height="3" fill="#c0c0c0"/>
<rect x="150" y="96" width="1" height="3" fill="#c0c0c0"/>
<rect x="150" y="102" width="1" height="3" fill="#c0c0c0"/>
<rect x="150" y="108" width="1" height="3" fill="#c0c0c0"/>
<rect x="150" y="114" width="1" height="3" fill="#c0c0c0"/>
<rect x="150" y="120" width="1" height="3" fill="#c0c0c0"/>
<rect x="150" y="126" width="1" height="3" fill="#c0c0c0"/>
<rect x="150" y="132" width="1" height="3" fill="#c0c0c0"/>
<rect x="150" y="138" width="1" height="3" fill="#c0c0c0"/>
<rect x="150" y="144" width="1" height="3" fill="#c0c0c0"/>
<rect x="187" y="60" width="1" height="3" fill="#c0c0c0"/>
<rect x="187" y="66" width="1" height="3" fill="#c0c0c0"/>
<rect x="187" y="72" width="1" height="3" fill="#c0c0c0"/>
<rect x="187" y="78" width="1" height="3" fill="#c0c0c0"/>
<rect x="187" y="84" width="1" height="3" fill="#c0c0c0"/>
<rect x="187" y="90" width="1" height="3" fill="#c0c0c0"/>
<rect x="187" y="96" width="1" height="3" fill="#c0c0c0"/>
<rect x="187" y="102" width="1" height="3" fill="#c0c0c0"/>
<rect x="187" y="108" width="1" height="3" fill="#c0c0c0"/>
<rect x="187" y="114" width="1" height="3" fill="#c0c0c0"/>
<rect x="187" y="120" width="1" height="3" fill="#c0c0c0"/>
<rect x="187" y="126" width="1" height="3" fill="#c0c0c0"/>
<rect x="187" y="132" width="1" height="3" fill="#c0c0c0"/>
<rect x="187" y="138" width="1" height="3" fill="#c0c0c0"/>
<rect x="187" y="144" width="1" height="3" fill="#c0c0c0"/>
<rect x="77" y="82" width="3" height="1" fill="#c0c0c0"/>
<rect x="83" y="82" width="3" height="1" fill="#c0c0c0"/>
<rect x="89" y="82" width="3" height="1" fill="#c0c0c0"/>
<rect x="95" y="82" width="3" height="1" fill="#c0c0c0"/>
<rect x="101" y="82" width="3" height="1" fill="#c0c0c0"/>
<rect x="107" y="82" width="3" height="1" fill="#c0c0c0"/>
<rect x="113" y="82" width="3" height="1" fill="#c0c0c0"/>
<rect x="119" y="82" width="3" height="1" fill="#c0c0c0"/>
<rect x="125" y="82" width="3" height="1" fill="#c0c0c0"/>
<rect x="131" y="82" width="3" height="1" fill="#c0c0c0"/>
<rect x="137" y="82" width="3" height="1" fill="#c0c0c0"/>
<rect x="143" y="82" width="3" height="1" fill="#c0c0c0"/>
<rect x="149" y="82" width="3" height="1" fill="#c0c0c0"/>
<rect x="155" y="82" width="3" height="1" fill="#c0c0c0"/>
<rect x="161" y="82" width="3" height="1" fill="#c0c0c0"/>
<rect x="167" y="82" width="3" height="1" fill="#c0c0c0"/>
<rect x="173" y="82" width="3" height="1" fill="#c0c0c0"/>
<rect x="179" y="82" width="3" height="1" fill="#c0c0c0"/>
<rect x="185" y="82" width="3" height="1" fill="#c0c0c0"/>
<rect x="191" y="82" width="3" height="1" fill="#c0c0c0"/>
<rect x="197" y="82" width="3" height="1" fill="#c0c0c0"/>
<rect x="203" y="82" width="3" height="1" fill="#c0c0c0"/>
<rect x="209" y="82" width="3" height="1" fill="#c0c0c0"/>
<rect x="215" y="82" width="3" height="1" fill="#c0c0c0"/>
<rect x="221" y="82" width="3" height="1" fill="#c0c0c0"/>
<rect x="77" y="104" width="3" height="1" fill="#c0c0c0"/>
<rect x="83" y="104" width="3" height="1" fill="#c0c0c0"/>
<rect x="89" y="104" width="3" height="1" fill="#c0c0c0"/>
<rect x="95" y="104" width="3" height="1" fill="#c0c0c0"/>
<rect x="101" y="104" width="3" height="1" fill="#c0c0c0"/>
<rect x="107" y="104" width="3" height="1" fill="#c0c0c0"/>
<rect x="113" y="104" width="3" height="1" fill="#c0c0c0"/>
<rect x="119" y="104" width="3" height="1" fill="#c0c0c0"/>
<rect x="125" y="104" width="3" height="1" fill="#c0c0c0"/>
<rect x="131" y="104" width="3" height="1" fill="#c0c0c0"/>
<rect x="137" y="104" width="3" height="1" fill="#c0c0c0"/>
<rect x="143" y="104" width="3" height="1" fill="#c0c0c0"/>
<rect x="149" y="104" width="3" height="1" fill="#c0c0c0"/>
<rect x="155" y="104" width="3" height="1" fill="#c0c0c0"/>
<rect x="161" y="104" width="3" height="1" fill="#c0c0c0"/>
<rect x="167" y="104" width="3" height="1" fill="#c0c0c0"/>
<rect x="173" y="104" width="3" height="1" fill="#c0c0c0"/>
<rect x="179" y="104" width="3" height="1" fill="#c0c0c0"/>
<rect x="185" y="104" width="3" height="1" fill="#c0c0c0"/>
<rect x="191" y="104" width="3" height="1" fill="#c0c0c0"/>
<rect x="197" y="104" width="3" height="1" fill="#c0c0c0"/>
<rect x="203" y="104" width="3" height="1" fill="#c0c0c0"/>
<rect x="209" y="104" width="3" height="1" fill="#c0c0c0"/>
<rect x="215" y="104" width="3" height="1" fill="#c0c0c0"/>
<rect x="221" y="104" width="3" height="1" fill="#c0c0c0"/>
<rect x="77" y="126" width="3" height="1" fill="#c0c0c0"/>
<rect x="83" y="126" width="3" height="1" fill="#c0c0c0"/>
<rect x="89" y="126" width="3" height="1" fill="#c0c0c0"/>
<rect x="95" y="126" width="3" height="1" fill="#c0c0c0"/>
<rect x="101" y="126" width="3" height="1" fill="#c0c0c0"/>
<rect x="107" y="126" width="3" height="1" fill="#c0c0c0"/>
<rect x="113" y="126" width="3" height="1" fill="#c0c0c0"/>
<rect x="119" y="126" width="3" height="1" fill="#c0c0c0"/>
<rect x="125" y="126" width="3" height="1" fill="#c0c0c0"/>
<rect x="131" y="126" width="3" height="1" fill="#c0c0c0"/>
<rect x="137" y="126" width="3" height="1" fill="#c0c0c0"/>
<rect x="143" y="126" width="3" height="1" fill="#c0c0c0"/>
<rect x="149" y="126" width="3" height="1" fill="#c0c0c0"/>
<rect x="155" y="126" width="3" height="1" fill="#c0c0c0"/>
<rect x="161" y="126" width="3" height="1" fill="#c0c0c0"/>
<rect x="167" y="126" width="3" height="1" fill="#c0c0c0"/>
<rect x="173" y="126" width="3" height="1" fill="#c0c0c0"/>
<rect x="179" y="126" width="3" height="1" fill="#c0c0c0"/>
<rect x="185" y="126" width="3" height="1" fill="#c0c0c0"/>
<rect x="191" y="126" width="3" height="1" fill="#c0c0c0"/>
<rect x="197" y="126" width="3" height="1" fill="#c0c0c0"/>
<rect x="203" y="126" width="3" height="1" fill="#c0c0c0"/>
<rect x="209" y="126" width="3" height="1" fill="#c0c0c0"/>
<rect x="215" y="126" width="3" height="1" fill="#c0c0c0"/>
<rect x="221" y="126" width="3" height="1" fill="#c0c0c0"/>
<rect x="76.5" y="60.5" width="149" height="87" fill="none" stroke="#000" stroke-width="1"/>
<rect x="148" y="32" width="56" height="1" fill="#b04880"/>
<path d="M183 61h8v1h-8zM183 62h1v1h-1zM190 62h1v1h-1zM183 63h1v1h-1zM190 63h1v1h-1zM183 64h1v1h-1zM190 64h1v1h-1zM183 65h1v1h-1zM191 65h1v1h-1zM182 66h1v1h-1zM191 66h1v1h-1zM182 67h1v1h-1zM191 67h1v1h-1zM182 68h1v1h-1zM191 68h31v1h-31zM176 69h7v1h-7zM176 70h1v1h-1zM175 71h1v1h-1zM175 72h1v1h-1zM175 73h1v1h-1zM175 74h1v1h-1zM174 75h1v1h-1zM168 76h7v1h-7zM168 77h1v1h-1zM168 78h1v1h-1zM168 79h1v1h-1zM167 80h1v1h-1zM167 81h1v1h-1zM161 82h7v1h-7zM161 83h1v1h-1zM167 83h1v1h-1zM161 84h1v1h-1zM161 85h1v1h-1zM161 86h1v1h-1zM160 87h1v1h-1zM160 88h1v1h-1zM160 89h1v1h-1zM155 90h6v1h-6zM155 91h1v1h-1zM155 92h1v1h-1zM154 93h1v1h-1zM154 94h1v1h-1zM154 95h1v1h-1zM146 96h8v1h-8zM146 97h1v1h-1zM153 97h1v1h-1zM146 98h1v1h-1zM146 99h1v1h-1zM145 100h1v1h-1zM145 101h1v1h-1zM139 102h7v1h-7zM139 103h1v1h-1zM145 103h1v1h-1zM138 104h1v1h-1zM138 105h1v1h-1zM138 106h1v1h-1zM138 107h1v1h-1zM132 108h7v1h-7zM132 109h1v1h-1zM138 109h1v1h-1zM132 110h1v1h-1zM131 111h1v1h-1zM131 112h1v1h-1zM131 113h1v1h-1zM131 114h1v1h-1zM131 115h1v1h-1zM124 116h8v1h-8zM124 117h1v1h-1zM124 118h1v1h-1zM124 119h1v1h-1zM124 120h1v1h-1zM124 121h1v1h-1zM124 122h1v1h-1zM123 123h1v1h-1zM117 124h7v1h-7zM117 125h1v1h-1zM116 126h1v1h-1zM116 127h1v1h-1zM116 128h1v1h-1zM116 129h1v1h-1zM116 130h1v1h-1zM109 131h8v1h-8zM109 132h1v1h-1zM109 133h1v1h-1zM109 134h1v1h-1zM103 135h7v1h-7zM103 136h1v1h-1zM103 137h1v1h-1zM103 138h1v1h-1zM103 139h1v1h-1zM102 140h1v1h-1zM95 141h8v1h-8zM95 142h1v1h-1zM95 143h1v1h-1zM88 144h8v1h-8zM88 145h1v1h-1zM82 146h7v1h-7zM76 147h7v1h-7z" fill="#b04880"/>
<path d="M220 63h2v1h-2zM217 64h8v1h-8zM216 65h10v1h-10zM216 66h10v1h-10zM216 67h10v1h-10zM215 68h12v1h-12zM215 69h12v1h-12zM216 70h10v1h-10zM216 71h10v1h-10zM216 72h10v1h-10zM217 73h8v1h-8zM220 74h2v1h-2z" fill="#b04880"/>
</svg>
<div class="tt" style="left:23px;top:8px;color:#d4d0c8">Nennwert-Verlauf</div>
<div class="tx" style="left:147px;top:35px;height:9px;overflow:hidden">k<span class="us">_</span>Feder</div>
<div class="tx" style="left:148px;top:46px">4.907e<span class=pl>+</span>004</div>
<div class="tx yl" style="right:169px;top:62px">4.998e<span class=pl>+</span>004</div>
<div class="tx yl" style="right:169px;top:78px">4.756e<span class=pl>+</span>004</div>
<div class="tx yl" style="right:169px;top:100px">4.513e<span class=pl>+</span>004</div>
<div class="tx yl" style="right:169px;top:122px">4.271e<span class=pl>+</span>004</div>
<div class="tx yl" style="right:169px;top:137px">4.028e<span class=pl>+</span>004</div>
<div class="tx" style="left:76px;top:153px">0</div>
<div class="tx" style="left:106px;top:153px">50</div>
<div class="tx" style="left:141px;top:153px">100</div>
<div class="tx" style="left:180px;top:153px">150</div>
<div class="tx" style="left:208px;top:153px">200</div>
<div class="tx" style="left:101px;top:167px">Optimierungsschritte</div>
</div>
<div class="win" style="left:484px;top:189px;width:242px">
<svg width="242" height="189" viewBox="0 0 242 189" shape-rendering="crispEdges">
<rect x="0" y="0" width="242" height="189" fill="#d4d0c8"/>
<rect x="1" y="1" width="240" height="1" fill="#ffffff"/>
<rect x="1" y="1" width="1" height="187" fill="#ffffff"/>
<rect x="0" y="188" width="242" height="1" fill="#404040"/>
<rect x="241" y="0" width="1" height="189" fill="#404040"/>
<rect x="1" y="187" width="240" height="1" fill="#808080"/>
<rect x="240" y="1" width="1" height="187" fill="#808080"/>
<rect x="4" y="4" width="234" height="18" fill="#808080"/>
<rect x="6" y="5" width="16" height="16" fill="#0000ff"/>
<rect x="7" y="6" width="14" height="14" fill="#ffffff"/>
<rect x="7" y="8" width="1" height="1" fill="#00ffff"/>
<rect x="8" y="9" width="1" height="1" fill="#00ffff"/>
<rect x="8" y="10" width="1" height="1" fill="#00ffff"/>
<rect x="9" y="11" width="1" height="1" fill="#00ffff"/>
<rect x="9" y="12" width="1" height="1" fill="#00ffff"/>
<rect x="10" y="13" width="1" height="1" fill="#00ffff"/>
<rect x="11" y="14" width="1" height="1" fill="#00ffff"/>
<rect x="11" y="15" width="1" height="1" fill="#00ffff"/>
<rect x="12" y="16" width="1" height="1" fill="#00ffff"/>
<rect x="13" y="17" width="1" height="1" fill="#00ffff"/>
<rect x="14" y="18" width="1" height="1" fill="#00ffff"/>
<rect x="15" y="19" width="1" height="1" fill="#00ffff"/>
<rect x="16" y="19" width="1" height="1" fill="#00ffff"/>
<rect x="17" y="19" width="1" height="1" fill="#00ffff"/>
<rect x="18" y="19" width="1" height="1" fill="#00ffff"/>
<rect x="19" y="19" width="1" height="1" fill="#00ffff"/>
<rect x="20" y="19" width="1" height="1" fill="#00ffff"/>
<rect x="7" y="14" width="1" height="1" fill="#00ff00"/>
<rect x="8" y="14" width="1" height="1" fill="#00ff00"/>
<rect x="9" y="14" width="1" height="1" fill="#00ff00"/>
<rect x="10" y="14" width="1" height="1" fill="#00ff00"/>
<rect x="11" y="14" width="1" height="1" fill="#00ff00"/>
<rect x="12" y="14" width="1" height="1" fill="#00ff00"/>
<rect x="13" y="14" width="1" height="1" fill="#00ff00"/>
<rect x="14" y="14" width="1" height="1" fill="#00ff00"/>
<rect x="15" y="13" width="1" height="1" fill="#00ff00"/>
<rect x="16" y="11" width="1" height="1" fill="#00ff00"/>
<rect x="16" y="12" width="1" height="1" fill="#00ff00"/>
<rect x="17" y="9" width="1" height="1" fill="#00ff00"/>
<rect x="17" y="10" width="1" height="1" fill="#00ff00"/>
<rect x="18" y="11" width="1" height="1" fill="#00ff00"/>
<rect x="18" y="12" width="1" height="1" fill="#00ff00"/>
<rect x="19" y="13" width="1" height="1" fill="#00ff00"/>
<rect x="19" y="14" width="1" height="1" fill="#00ff00"/>
<rect x="20" y="15" width="1" height="1" fill="#00ff00"/>
<rect x="20" y="16" width="1" height="1" fill="#00ff00"/>
<rect x="20" y="17" width="1" height="1" fill="#00ff00"/>
<rect x="186" y="6" width="16" height="14" fill="#404040"/>
<rect x="186" y="6" width="15" height="13" fill="#ffffff"/>
<rect x="187" y="7" width="14" height="12" fill="#808080"/>
<rect x="187" y="7" width="13" height="11" fill="#d4d0c8"/>
<rect x="202" y="6" width="16" height="14" fill="#404040"/>
<rect x="202" y="6" width="15" height="13" fill="#ffffff"/>
<rect x="203" y="7" width="14" height="12" fill="#808080"/>
<rect x="203" y="7" width="13" height="11" fill="#d4d0c8"/>
<rect x="220" y="6" width="16" height="14" fill="#404040"/>
<rect x="220" y="6" width="15" height="13" fill="#ffffff"/>
<rect x="221" y="7" width="14" height="12" fill="#808080"/>
<rect x="221" y="7" width="13" height="11" fill="#d4d0c8"/>
<rect x="190" y="15" width="6" height="2" fill="#000000"/>
<rect x="205" y="8" width="9" height="9" fill="#000000"/>
<rect x="206" y="10" width="7" height="6" fill="#d4d0c8"/>
<rect x="224" y="9" width="1" height="1" fill="#000000"/>
<rect x="225" y="9" width="1" height="1" fill="#000000"/>
<rect x="230" y="9" width="1" height="1" fill="#000000"/>
<rect x="231" y="9" width="1" height="1" fill="#000000"/>
<rect x="225" y="10" width="1" height="1" fill="#000000"/>
<rect x="226" y="10" width="1" height="1" fill="#000000"/>
<rect x="229" y="10" width="1" height="1" fill="#000000"/>
<rect x="230" y="10" width="1" height="1" fill="#000000"/>
<rect x="226" y="11" width="1" height="1" fill="#000000"/>
<rect x="227" y="11" width="1" height="1" fill="#000000"/>
<rect x="228" y="11" width="1" height="1" fill="#000000"/>
<rect x="229" y="11" width="1" height="1" fill="#000000"/>
<rect x="227" y="12" width="1" height="1" fill="#000000"/>
<rect x="228" y="12" width="1" height="1" fill="#000000"/>
<rect x="226" y="13" width="1" height="1" fill="#000000"/>
<rect x="227" y="13" width="1" height="1" fill="#000000"/>
<rect x="228" y="13" width="1" height="1" fill="#000000"/>
<rect x="229" y="13" width="1" height="1" fill="#000000"/>
<rect x="225" y="14" width="1" height="1" fill="#000000"/>
<rect x="226" y="14" width="1" height="1" fill="#000000"/>
<rect x="229" y="14" width="1" height="1" fill="#000000"/>
<rect x="230" y="14" width="1" height="1" fill="#000000"/>
<rect x="224" y="15" width="1" height="1" fill="#000000"/>
<rect x="225" y="15" width="1" height="1" fill="#000000"/>
<rect x="230" y="15" width="1" height="1" fill="#000000"/>
<rect x="231" y="15" width="1" height="1" fill="#000000"/>
<rect x="4" y="23" width="234" height="162" fill="#ffffff"/>
<rect x="4" y="23" width="233" height="1" fill="#808080"/>
<rect x="4" y="23" width="1" height="161" fill="#808080"/>
<rect x="5" y="24" width="231" height="1" fill="#404040"/>
<rect x="5" y="24" width="1" height="159" fill="#404040"/>
<rect x="5" y="183" width="232" height="1" fill="#d4d0c8"/>
<rect x="236" y="24" width="1" height="160" fill="#d4d0c8"/>
<rect x="6" y="25" width="230" height="158" fill="#fbfbef"/>
<rect x="7" y="26" width="228" height="156" fill="#000000"/>
<rect x="8" y="27" width="226" height="154" fill="#ffffff"/>
<rect x="113" y="60" width="1" height="3" fill="#c0c0c0"/>
<rect x="113" y="66" width="1" height="3" fill="#c0c0c0"/>
<rect x="113" y="72" width="1" height="3" fill="#c0c0c0"/>
<rect x="113" y="78" width="1" height="3" fill="#c0c0c0"/>
<rect x="113" y="84" width="1" height="3" fill="#c0c0c0"/>
<rect x="113" y="90" width="1" height="3" fill="#c0c0c0"/>
<rect x="113" y="96" width="1" height="3" fill="#c0c0c0"/>
<rect x="113" y="102" width="1" height="3" fill="#c0c0c0"/>
<rect x="113" y="108" width="1" height="3" fill="#c0c0c0"/>
<rect x="113" y="114" width="1" height="3" fill="#c0c0c0"/>
<rect x="113" y="120" width="1" height="3" fill="#c0c0c0"/>
<rect x="113" y="126" width="1" height="3" fill="#c0c0c0"/>
<rect x="113" y="132" width="1" height="3" fill="#c0c0c0"/>
<rect x="113" y="138" width="1" height="3" fill="#c0c0c0"/>
<rect x="113" y="144" width="1" height="3" fill="#c0c0c0"/>
<rect x="150" y="60" width="1" height="3" fill="#c0c0c0"/>
<rect x="150" y="66" width="1" height="3" fill="#c0c0c0"/>
<rect x="150" y="72" width="1" height="3" fill="#c0c0c0"/>
<rect x="150" y="78" width="1" height="3" fill="#c0c0c0"/>
<rect x="150" y="84" width="1" height="3" fill="#c0c0c0"/>
<rect x="150" y="90" width="1" height="3" fill="#c0c0c0"/>
<rect x="150" y="96" width="1" height="3" fill="#c0c0c0"/>
<rect x="150" y="102" width="1" height="3" fill="#c0c0c0"/>
<rect x="150" y="108" width="1" height="3" fill="#c0c0c0"/>
<rect x="150" y="114" width="1" height="3" fill="#c0c0c0"/>
<rect x="150" y="120" width="1" height="3" fill="#c0c0c0"/>
<rect x="150" y="126" width="1" height="3" fill="#c0c0c0"/>
<rect x="150" y="132" width="1" height="3" fill="#c0c0c0"/>
<rect x="150" y="138" width="1" height="3" fill="#c0c0c0"/>
<rect x="150" y="144" width="1" height="3" fill="#c0c0c0"/>
<rect x="187" y="60" width="1" height="3" fill="#c0c0c0"/>
<rect x="187" y="66" width="1" height="3" fill="#c0c0c0"/>
<rect x="187" y="72" width="1" height="3" fill="#c0c0c0"/>
<rect x="187" y="78" width="1" height="3" fill="#c0c0c0"/>
<rect x="187" y="84" width="1" height="3" fill="#c0c0c0"/>
<rect x="187" y="90" width="1" height="3" fill="#c0c0c0"/>
<rect x="187" y="96" width="1" height="3" fill="#c0c0c0"/>
<rect x="187" y="102" width="1" height="3" fill="#c0c0c0"/>
<rect x="187" y="108" width="1" height="3" fill="#c0c0c0"/>
<rect x="187" y="114" width="1" height="3" fill="#c0c0c0"/>
<rect x="187" y="120" width="1" height="3" fill="#c0c0c0"/>
<rect x="187" y="126" width="1" height="3" fill="#c0c0c0"/>
<rect x="187" y="132" width="1" height="3" fill="#c0c0c0"/>
<rect x="187" y="138" width="1" height="3" fill="#c0c0c0"/>
<rect x="187" y="144" width="1" height="3" fill="#c0c0c0"/>
<rect x="77" y="82" width="3" height="1" fill="#c0c0c0"/>
<rect x="83" y="82" width="3" height="1" fill="#c0c0c0"/>
<rect x="89" y="82" width="3" height="1" fill="#c0c0c0"/>
<rect x="95" y="82" width="3" height="1" fill="#c0c0c0"/>
<rect x="101" y="82" width="3" height="1" fill="#c0c0c0"/>
<rect x="107" y="82" width="3" height="1" fill="#c0c0c0"/>
<rect x="113" y="82" width="3" height="1" fill="#c0c0c0"/>
<rect x="119" y="82" width="3" height="1" fill="#c0c0c0"/>
<rect x="125" y="82" width="3" height="1" fill="#c0c0c0"/>
<rect x="131" y="82" width="3" height="1" fill="#c0c0c0"/>
<rect x="137" y="82" width="3" height="1" fill="#c0c0c0"/>
<rect x="143" y="82" width="3" height="1" fill="#c0c0c0"/>
<rect x="149" y="82" width="3" height="1" fill="#c0c0c0"/>
<rect x="155" y="82" width="3" height="1" fill="#c0c0c0"/>
<rect x="161" y="82" width="3" height="1" fill="#c0c0c0"/>
<rect x="167" y="82" width="3" height="1" fill="#c0c0c0"/>
<rect x="173" y="82" width="3" height="1" fill="#c0c0c0"/>
<rect x="179" y="82" width="3" height="1" fill="#c0c0c0"/>
<rect x="185" y="82" width="3" height="1" fill="#c0c0c0"/>
<rect x="191" y="82" width="3" height="1" fill="#c0c0c0"/>
<rect x="197" y="82" width="3" height="1" fill="#c0c0c0"/>
<rect x="203" y="82" width="3" height="1" fill="#c0c0c0"/>
<rect x="209" y="82" width="3" height="1" fill="#c0c0c0"/>
<rect x="215" y="82" width="3" height="1" fill="#c0c0c0"/>
<rect x="221" y="82" width="3" height="1" fill="#c0c0c0"/>
<rect x="77" y="104" width="3" height="1" fill="#c0c0c0"/>
<rect x="83" y="104" width="3" height="1" fill="#c0c0c0"/>
<rect x="89" y="104" width="3" height="1" fill="#c0c0c0"/>
<rect x="95" y="104" width="3" height="1" fill="#c0c0c0"/>
<rect x="101" y="104" width="3" height="1" fill="#c0c0c0"/>
<rect x="107" y="104" width="3" height="1" fill="#c0c0c0"/>
<rect x="113" y="104" width="3" height="1" fill="#c0c0c0"/>
<rect x="119" y="104" width="3" height="1" fill="#c0c0c0"/>
<rect x="125" y="104" width="3" height="1" fill="#c0c0c0"/>
<rect x="131" y="104" width="3" height="1" fill="#c0c0c0"/>
<rect x="137" y="104" width="3" height="1" fill="#c0c0c0"/>
<rect x="143" y="104" width="3" height="1" fill="#c0c0c0"/>
<rect x="149" y="104" width="3" height="1" fill="#c0c0c0"/>
<rect x="155" y="104" width="3" height="1" fill="#c0c0c0"/>
<rect x="161" y="104" width="3" height="1" fill="#c0c0c0"/>
<rect x="167" y="104" width="3" height="1" fill="#c0c0c0"/>
<rect x="173" y="104" width="3" height="1" fill="#c0c0c0"/>
<rect x="179" y="104" width="3" height="1" fill="#c0c0c0"/>
<rect x="185" y="104" width="3" height="1" fill="#c0c0c0"/>
<rect x="191" y="104" width="3" height="1" fill="#c0c0c0"/>
<rect x="197" y="104" width="3" height="1" fill="#c0c0c0"/>
<rect x="203" y="104" width="3" height="1" fill="#c0c0c0"/>
<rect x="209" y="104" width="3" height="1" fill="#c0c0c0"/>
<rect x="215" y="104" width="3" height="1" fill="#c0c0c0"/>
<rect x="221" y="104" width="3" height="1" fill="#c0c0c0"/>
<rect x="77" y="126" width="3" height="1" fill="#c0c0c0"/>
<rect x="83" y="126" width="3" height="1" fill="#c0c0c0"/>
<rect x="89" y="126" width="3" height="1" fill="#c0c0c0"/>
<rect x="95" y="126" width="3" height="1" fill="#c0c0c0"/>
<rect x="101" y="126" width="3" height="1" fill="#c0c0c0"/>
<rect x="107" y="126" width="3" height="1" fill="#c0c0c0"/>
<rect x="113" y="126" width="3" height="1" fill="#c0c0c0"/>
<rect x="119" y="126" width="3" height="1" fill="#c0c0c0"/>
<rect x="125" y="126" width="3" height="1" fill="#c0c0c0"/>
<rect x="131" y="126" width="3" height="1" fill="#c0c0c0"/>
<rect x="137" y="126" width="3" height="1" fill="#c0c0c0"/>
<rect x="143" y="126" width="3" height="1" fill="#c0c0c0"/>
<rect x="149" y="126" width="3" height="1" fill="#c0c0c0"/>
<rect x="155" y="126" width="3" height="1" fill="#c0c0c0"/>
<rect x="161" y="126" width="3" height="1" fill="#c0c0c0"/>
<rect x="167" y="126" width="3" height="1" fill="#c0c0c0"/>
<rect x="173" y="126" width="3" height="1" fill="#c0c0c0"/>
<rect x="179" y="126" width="3" height="1" fill="#c0c0c0"/>
<rect x="185" y="126" width="3" height="1" fill="#c0c0c0"/>
<rect x="191" y="126" width="3" height="1" fill="#c0c0c0"/>
<rect x="197" y="126" width="3" height="1" fill="#c0c0c0"/>
<rect x="203" y="126" width="3" height="1" fill="#c0c0c0"/>
<rect x="209" y="126" width="3" height="1" fill="#c0c0c0"/>
<rect x="215" y="126" width="3" height="1" fill="#c0c0c0"/>
<rect x="221" y="126" width="3" height="1" fill="#c0c0c0"/>
<rect x="76.5" y="60.5" width="149" height="87" fill="none" stroke="#000" stroke-width="1"/>
<rect x="148" y="32" width="56" height="1" fill="#b4d21e"/>
<path d="M184 60h1v1h-1zM184 61h1v1h-1zM184 62h1v1h-1zM184 63h2v1h-2zM184 64h7v1h-7zM184 65h3v1h-3zM190 65h1v1h-1zM184 66h2v1h-2zM191 66h1v1h-1zM184 67h1v1h-1zM191 67h1v1h-1zM184 68h1v1h-1zM192 68h1v1h-1zM183 69h1v1h-1zM192 69h1v1h-1zM176 70h1v1h-1zM183 70h1v1h-1zM192 70h1v1h-1zM176 71h1v1h-1zM183 71h1v1h-1zM192 71h1v1h-1zM176 72h1v1h-1zM182 72h1v1h-1zM192 72h1v1h-1zM199 72h1v1h-1zM206 72h1v1h-1zM214 72h1v1h-1zM176 73h1v1h-1zM182 73h1v1h-1zM192 73h1v1h-1zM199 73h2v1h-2zM206 73h2v1h-2zM214 73h2v1h-2zM176 74h7v1h-7zM192 74h7v1h-7zM200 74h22v1h-22zM176 75h2v1h-2zM192 75h2v1h-2zM176 76h1v1h-1zM192 76h2v1h-2zM176 77h1v1h-1zM192 77h1v1h-1zM176 78h1v1h-1zM192 78h1v1h-1zM176 79h1v1h-1zM175 80h1v1h-1zM175 81h1v1h-1zM175 82h1v1h-1zM174 83h1v1h-1zM169 84h6v1h-6zM169 85h1v1h-1zM161 86h1v1h-1zM169 86h1v1h-1zM161 87h1v1h-1zM168 87h1v1h-1zM161 88h2v1h-2zM168 88h1v1h-1zM161 89h2v1h-2zM168 89h1v1h-1zM161 90h2v1h-2zM168 90h1v1h-1zM161 91h2v1h-2zM167 91h1v1h-1zM161 92h7v1h-7zM161 93h1v1h-1zM161 94h1v1h-1zM161 95h1v1h-1zM161 96h1v1h-1zM161 97h1v1h-1zM154 98h8v1h-8zM154 99h1v1h-1zM154 100h1v1h-1zM154 101h1v1h-1zM154 102h1v1h-1zM154 103h1v1h-1zM154 104h1v1h-1zM146 105h1v1h-1zM154 105h1v1h-1zM146 106h1v1h-1zM154 106h1v1h-1zM146 107h1v1h-1zM154 107h1v1h-1zM146 108h1v1h-1zM148 108h7v1h-7zM146 109h3v1h-3zM146 110h3v1h-3zM145 111h1v1h-1zM147 111h1v1h-1zM145 112h1v1h-1zM147 112h1v1h-1zM145 113h1v1h-1zM145 114h1v1h-1zM139 115h7v1h-7zM124 116h1v1h-1zM139 116h1v1h-1zM124 117h1v1h-1zM139 117h1v1h-1zM124 118h1v1h-1zM138 118h1v1h-1zM124 119h2v1h-2zM138 119h1v1h-1zM117 120h1v1h-1zM124 120h2v1h-2zM137 120h1v1h-1zM117 121h1v1h-1zM124 121h2v1h-2zM132 121h6v1h-6zM116 122h2v1h-2zM124 122h1v1h-1zM126 122h1v1h-1zM132 122h1v1h-1zM110 123h1v1h-1zM116 123h1v1h-1zM118 123h7v1h-7zM126 123h7v1h-7zM110 124h1v1h-1zM116 124h1v1h-1zM118 124h2v1h-2zM110 125h1v1h-1zM115 125h1v1h-1zM118 125h1v1h-1zM96 126h1v1h-1zM103 126h1v1h-1zM110 126h2v1h-2zM113 126h3v1h-3zM118 126h1v1h-1zM96 127h1v1h-1zM103 127h1v1h-1zM109 127h1v1h-1zM111 127h2v1h-2zM96 128h1v1h-1zM103 128h1v1h-1zM109 128h1v1h-1zM111 128h2v1h-2zM96 129h1v1h-1zM103 129h1v1h-1zM106 129h4v1h-4zM111 129h1v1h-1zM96 130h2v1h-2zM103 130h2v1h-2zM106 130h1v1h-1zM95 131h1v1h-1zM97 131h1v1h-1zM103 131h3v1h-3zM95 132h1v1h-1zM97 132h1v1h-1zM103 132h3v1h-3zM95 133h1v1h-1zM97 133h8v1h-8zM95 134h1v1h-1zM94 135h1v1h-1zM92 136h3v1h-3zM89 137h3v1h-3zM89 138h1v1h-1zM89 139h1v1h-1zM89 140h1v1h-1zM88 141h1v1h-1zM88 142h1v1h-1zM76 143h1v1h-1zM81 143h8v1h-8zM76 144h1v1h-1zM78 144h3v1h-3zM77 145h2v1h-2zM77 146h1v1h-1zM77 147h1v1h-1z" fill="#b4d21e"/>
<path d="M220 68h2v1h-2zM217 69h8v1h-8zM216 70h10v1h-10zM216 71h10v1h-10zM216 72h10v1h-10zM215 73h12v1h-12zM215 74h12v1h-12zM216 75h10v1h-10zM216 76h10v1h-10zM216 77h10v1h-10zM217 78h8v1h-8zM220 79h2v1h-2z" fill="#b4d21e"/>
</svg>
<div class="tt" style="left:23px;top:8px;color:#d4d0c8">Nennwert-Verlauf</div>
<div class="tx" style="left:148px;top:35px;height:9px;overflow:hidden">w<span class="us">_</span>Spule</div>
<div class="tx" style="left:147px;top:46px">332</div>
<div class="tx yl" style="right:169px;top:62px">340</div>
<div class="tx yl" style="right:169px;top:78px">326.8</div>
<div class="tx yl" style="right:169px;top:100px">313.5</div>
<div class="tx yl" style="right:169px;top:122px">300.3</div>
<div class="tx yl" style="right:169px;top:137px">287</div>
<div class="tx" style="left:76px;top:153px">0</div>
<div class="tx" style="left:106px;top:153px">50</div>
<div class="tx" style="left:141px;top:153px">100</div>
<div class="tx" style="left:180px;top:153px">150</div>
<div class="tx" style="left:208px;top:153px">200</div>
<div class="tx" style="left:101px;top:167px">Optimierungsschritte</div>
</div>
<div class="win" style="left:0px;top:378px;width:241px">
<svg width="241" height="189" viewBox="0 0 241 189" shape-rendering="crispEdges">
<rect x="0" y="0" width="241" height="189" fill="#d4d0c8"/>
<rect x="1" y="1" width="239" height="1" fill="#ffffff"/>
<rect x="1" y="1" width="1" height="187" fill="#ffffff"/>
<rect x="0" y="188" width="241" height="1" fill="#404040"/>
<rect x="240" y="0" width="1" height="189" fill="#404040"/>
<rect x="1" y="187" width="239" height="1" fill="#808080"/>
<rect x="239" y="1" width="1" height="187" fill="#808080"/>
<rect x="4" y="4" width="233" height="18" fill="#808080"/>
<rect x="6" y="5" width="16" height="16" fill="#0000ff"/>
<rect x="7" y="6" width="14" height="14" fill="#ffffff"/>
<rect x="7" y="8" width="1" height="1" fill="#00ffff"/>
<rect x="8" y="9" width="1" height="1" fill="#00ffff"/>
<rect x="8" y="10" width="1" height="1" fill="#00ffff"/>
<rect x="9" y="11" width="1" height="1" fill="#00ffff"/>
<rect x="9" y="12" width="1" height="1" fill="#00ffff"/>
<rect x="10" y="13" width="1" height="1" fill="#00ffff"/>
<rect x="11" y="14" width="1" height="1" fill="#00ffff"/>
<rect x="11" y="15" width="1" height="1" fill="#00ffff"/>
<rect x="12" y="16" width="1" height="1" fill="#00ffff"/>
<rect x="13" y="17" width="1" height="1" fill="#00ffff"/>
<rect x="14" y="18" width="1" height="1" fill="#00ffff"/>
<rect x="15" y="19" width="1" height="1" fill="#00ffff"/>
<rect x="16" y="19" width="1" height="1" fill="#00ffff"/>
<rect x="17" y="19" width="1" height="1" fill="#00ffff"/>
<rect x="18" y="19" width="1" height="1" fill="#00ffff"/>
<rect x="19" y="19" width="1" height="1" fill="#00ffff"/>
<rect x="20" y="19" width="1" height="1" fill="#00ffff"/>
<rect x="7" y="14" width="1" height="1" fill="#00ff00"/>
<rect x="8" y="14" width="1" height="1" fill="#00ff00"/>
<rect x="9" y="14" width="1" height="1" fill="#00ff00"/>
<rect x="10" y="14" width="1" height="1" fill="#00ff00"/>
<rect x="11" y="14" width="1" height="1" fill="#00ff00"/>
<rect x="12" y="14" width="1" height="1" fill="#00ff00"/>
<rect x="13" y="14" width="1" height="1" fill="#00ff00"/>
<rect x="14" y="14" width="1" height="1" fill="#00ff00"/>
<rect x="15" y="13" width="1" height="1" fill="#00ff00"/>
<rect x="16" y="11" width="1" height="1" fill="#00ff00"/>
<rect x="16" y="12" width="1" height="1" fill="#00ff00"/>
<rect x="17" y="9" width="1" height="1" fill="#00ff00"/>
<rect x="17" y="10" width="1" height="1" fill="#00ff00"/>
<rect x="18" y="11" width="1" height="1" fill="#00ff00"/>
<rect x="18" y="12" width="1" height="1" fill="#00ff00"/>
<rect x="19" y="13" width="1" height="1" fill="#00ff00"/>
<rect x="19" y="14" width="1" height="1" fill="#00ff00"/>
<rect x="20" y="15" width="1" height="1" fill="#00ff00"/>
<rect x="20" y="16" width="1" height="1" fill="#00ff00"/>
<rect x="20" y="17" width="1" height="1" fill="#00ff00"/>
<rect x="185" y="6" width="16" height="14" fill="#404040"/>
<rect x="185" y="6" width="15" height="13" fill="#ffffff"/>
<rect x="186" y="7" width="14" height="12" fill="#808080"/>
<rect x="186" y="7" width="13" height="11" fill="#d4d0c8"/>
<rect x="201" y="6" width="16" height="14" fill="#404040"/>
<rect x="201" y="6" width="15" height="13" fill="#ffffff"/>
<rect x="202" y="7" width="14" height="12" fill="#808080"/>
<rect x="202" y="7" width="13" height="11" fill="#d4d0c8"/>
<rect x="219" y="6" width="16" height="14" fill="#404040"/>
<rect x="219" y="6" width="15" height="13" fill="#ffffff"/>
<rect x="220" y="7" width="14" height="12" fill="#808080"/>
<rect x="220" y="7" width="13" height="11" fill="#d4d0c8"/>
<rect x="189" y="15" width="6" height="2" fill="#000000"/>
<rect x="204" y="8" width="9" height="9" fill="#000000"/>
<rect x="205" y="10" width="7" height="6" fill="#d4d0c8"/>
<rect x="223" y="9" width="1" height="1" fill="#000000"/>
<rect x="224" y="9" width="1" height="1" fill="#000000"/>
<rect x="229" y="9" width="1" height="1" fill="#000000"/>
<rect x="230" y="9" width="1" height="1" fill="#000000"/>
<rect x="224" y="10" width="1" height="1" fill="#000000"/>
<rect x="225" y="10" width="1" height="1" fill="#000000"/>
<rect x="228" y="10" width="1" height="1" fill="#000000"/>
<rect x="229" y="10" width="1" height="1" fill="#000000"/>
<rect x="225" y="11" width="1" height="1" fill="#000000"/>
<rect x="226" y="11" width="1" height="1" fill="#000000"/>
<rect x="227" y="11" width="1" height="1" fill="#000000"/>
<rect x="228" y="11" width="1" height="1" fill="#000000"/>
<rect x="226" y="12" width="1" height="1" fill="#000000"/>
<rect x="227" y="12" width="1" height="1" fill="#000000"/>
<rect x="225" y="13" width="1" height="1" fill="#000000"/>
<rect x="226" y="13" width="1" height="1" fill="#000000"/>
<rect x="227" y="13" width="1" height="1" fill="#000000"/>
<rect x="228" y="13" width="1" height="1" fill="#000000"/>
<rect x="224" y="14" width="1" height="1" fill="#000000"/>
<rect x="225" y="14" width="1" height="1" fill="#000000"/>
<rect x="228" y="14" width="1" height="1" fill="#000000"/>
<rect x="229" y="14" width="1" height="1" fill="#000000"/>
<rect x="223" y="15" width="1" height="1" fill="#000000"/>
<rect x="224" y="15" width="1" height="1" fill="#000000"/>
<rect x="229" y="15" width="1" height="1" fill="#000000"/>
<rect x="230" y="15" width="1" height="1" fill="#000000"/>
<rect x="4" y="23" width="233" height="162" fill="#ffffff"/>
<rect x="4" y="23" width="232" height="1" fill="#808080"/>
<rect x="4" y="23" width="1" height="161" fill="#808080"/>
<rect x="5" y="24" width="230" height="1" fill="#404040"/>
<rect x="5" y="24" width="1" height="159" fill="#404040"/>
<rect x="5" y="183" width="231" height="1" fill="#d4d0c8"/>
<rect x="235" y="24" width="1" height="160" fill="#d4d0c8"/>
<rect x="6" y="25" width="229" height="158" fill="#fbfbef"/>
<rect x="7" y="26" width="227" height="156" fill="#000000"/>
<rect x="8" y="27" width="225" height="154" fill="#ffffff"/>
<rect x="113" y="60" width="1" height="3" fill="#c0c0c0"/>
<rect x="113" y="66" width="1" height="3" fill="#c0c0c0"/>
<rect x="113" y="72" width="1" height="3" fill="#c0c0c0"/>
<rect x="113" y="78" width="1" height="3" fill="#c0c0c0"/>
<rect x="113" y="84" width="1" height="3" fill="#c0c0c0"/>
<rect x="113" y="90" width="1" height="3" fill="#c0c0c0"/>
<rect x="113" y="96" width="1" height="3" fill="#c0c0c0"/>
<rect x="113" y="102" width="1" height="3" fill="#c0c0c0"/>
<rect x="113" y="108" width="1" height="3" fill="#c0c0c0"/>
<rect x="113" y="114" width="1" height="3" fill="#c0c0c0"/>
<rect x="113" y="120" width="1" height="3" fill="#c0c0c0"/>
<rect x="113" y="126" width="1" height="3" fill="#c0c0c0"/>
<rect x="113" y="132" width="1" height="3" fill="#c0c0c0"/>
<rect x="113" y="138" width="1" height="3" fill="#c0c0c0"/>
<rect x="113" y="144" width="1" height="3" fill="#c0c0c0"/>
<rect x="150" y="60" width="1" height="3" fill="#c0c0c0"/>
<rect x="150" y="66" width="1" height="3" fill="#c0c0c0"/>
<rect x="150" y="72" width="1" height="3" fill="#c0c0c0"/>
<rect x="150" y="78" width="1" height="3" fill="#c0c0c0"/>
<rect x="150" y="84" width="1" height="3" fill="#c0c0c0"/>
<rect x="150" y="90" width="1" height="3" fill="#c0c0c0"/>
<rect x="150" y="96" width="1" height="3" fill="#c0c0c0"/>
<rect x="150" y="102" width="1" height="3" fill="#c0c0c0"/>
<rect x="150" y="108" width="1" height="3" fill="#c0c0c0"/>
<rect x="150" y="114" width="1" height="3" fill="#c0c0c0"/>
<rect x="150" y="120" width="1" height="3" fill="#c0c0c0"/>
<rect x="150" y="126" width="1" height="3" fill="#c0c0c0"/>
<rect x="150" y="132" width="1" height="3" fill="#c0c0c0"/>
<rect x="150" y="138" width="1" height="3" fill="#c0c0c0"/>
<rect x="150" y="144" width="1" height="3" fill="#c0c0c0"/>
<rect x="187" y="60" width="1" height="3" fill="#c0c0c0"/>
<rect x="187" y="66" width="1" height="3" fill="#c0c0c0"/>
<rect x="187" y="72" width="1" height="3" fill="#c0c0c0"/>
<rect x="187" y="78" width="1" height="3" fill="#c0c0c0"/>
<rect x="187" y="84" width="1" height="3" fill="#c0c0c0"/>
<rect x="187" y="90" width="1" height="3" fill="#c0c0c0"/>
<rect x="187" y="96" width="1" height="3" fill="#c0c0c0"/>
<rect x="187" y="102" width="1" height="3" fill="#c0c0c0"/>
<rect x="187" y="108" width="1" height="3" fill="#c0c0c0"/>
<rect x="187" y="114" width="1" height="3" fill="#c0c0c0"/>
<rect x="187" y="120" width="1" height="3" fill="#c0c0c0"/>
<rect x="187" y="126" width="1" height="3" fill="#c0c0c0"/>
<rect x="187" y="132" width="1" height="3" fill="#c0c0c0"/>
<rect x="187" y="138" width="1" height="3" fill="#c0c0c0"/>
<rect x="187" y="144" width="1" height="3" fill="#c0c0c0"/>
<rect x="77" y="82" width="3" height="1" fill="#c0c0c0"/>
<rect x="83" y="82" width="3" height="1" fill="#c0c0c0"/>
<rect x="89" y="82" width="3" height="1" fill="#c0c0c0"/>
<rect x="95" y="82" width="3" height="1" fill="#c0c0c0"/>
<rect x="101" y="82" width="3" height="1" fill="#c0c0c0"/>
<rect x="107" y="82" width="3" height="1" fill="#c0c0c0"/>
<rect x="113" y="82" width="3" height="1" fill="#c0c0c0"/>
<rect x="119" y="82" width="3" height="1" fill="#c0c0c0"/>
<rect x="125" y="82" width="3" height="1" fill="#c0c0c0"/>
<rect x="131" y="82" width="3" height="1" fill="#c0c0c0"/>
<rect x="137" y="82" width="3" height="1" fill="#c0c0c0"/>
<rect x="143" y="82" width="3" height="1" fill="#c0c0c0"/>
<rect x="149" y="82" width="3" height="1" fill="#c0c0c0"/>
<rect x="155" y="82" width="3" height="1" fill="#c0c0c0"/>
<rect x="161" y="82" width="3" height="1" fill="#c0c0c0"/>
<rect x="167" y="82" width="3" height="1" fill="#c0c0c0"/>
<rect x="173" y="82" width="3" height="1" fill="#c0c0c0"/>
<rect x="179" y="82" width="3" height="1" fill="#c0c0c0"/>
<rect x="185" y="82" width="3" height="1" fill="#c0c0c0"/>
<rect x="191" y="82" width="3" height="1" fill="#c0c0c0"/>
<rect x="197" y="82" width="3" height="1" fill="#c0c0c0"/>
<rect x="203" y="82" width="3" height="1" fill="#c0c0c0"/>
<rect x="209" y="82" width="3" height="1" fill="#c0c0c0"/>
<rect x="215" y="82" width="3" height="1" fill="#c0c0c0"/>
<rect x="221" y="82" width="3" height="1" fill="#c0c0c0"/>
<rect x="77" y="104" width="3" height="1" fill="#c0c0c0"/>
<rect x="83" y="104" width="3" height="1" fill="#c0c0c0"/>
<rect x="89" y="104" width="3" height="1" fill="#c0c0c0"/>
<rect x="95" y="104" width="3" height="1" fill="#c0c0c0"/>
<rect x="101" y="104" width="3" height="1" fill="#c0c0c0"/>
<rect x="107" y="104" width="3" height="1" fill="#c0c0c0"/>
<rect x="113" y="104" width="3" height="1" fill="#c0c0c0"/>
<rect x="119" y="104" width="3" height="1" fill="#c0c0c0"/>
<rect x="125" y="104" width="3" height="1" fill="#c0c0c0"/>
<rect x="131" y="104" width="3" height="1" fill="#c0c0c0"/>
<rect x="137" y="104" width="3" height="1" fill="#c0c0c0"/>
<rect x="143" y="104" width="3" height="1" fill="#c0c0c0"/>
<rect x="149" y="104" width="3" height="1" fill="#c0c0c0"/>
<rect x="155" y="104" width="3" height="1" fill="#c0c0c0"/>
<rect x="161" y="104" width="3" height="1" fill="#c0c0c0"/>
<rect x="167" y="104" width="3" height="1" fill="#c0c0c0"/>
<rect x="173" y="104" width="3" height="1" fill="#c0c0c0"/>
<rect x="179" y="104" width="3" height="1" fill="#c0c0c0"/>
<rect x="185" y="104" width="3" height="1" fill="#c0c0c0"/>
<rect x="191" y="104" width="3" height="1" fill="#c0c0c0"/>
<rect x="197" y="104" width="3" height="1" fill="#c0c0c0"/>
<rect x="203" y="104" width="3" height="1" fill="#c0c0c0"/>
<rect x="209" y="104" width="3" height="1" fill="#c0c0c0"/>
<rect x="215" y="104" width="3" height="1" fill="#c0c0c0"/>
<rect x="221" y="104" width="3" height="1" fill="#c0c0c0"/>
<rect x="77" y="126" width="3" height="1" fill="#c0c0c0"/>
<rect x="83" y="126" width="3" height="1" fill="#c0c0c0"/>
<rect x="89" y="126" width="3" height="1" fill="#c0c0c0"/>
<rect x="95" y="126" width="3" height="1" fill="#c0c0c0"/>
<rect x="101" y="126" width="3" height="1" fill="#c0c0c0"/>
<rect x="107" y="126" width="3" height="1" fill="#c0c0c0"/>
<rect x="113" y="126" width="3" height="1" fill="#c0c0c0"/>
<rect x="119" y="126" width="3" height="1" fill="#c0c0c0"/>
<rect x="125" y="126" width="3" height="1" fill="#c0c0c0"/>
<rect x="131" y="126" width="3" height="1" fill="#c0c0c0"/>
<rect x="137" y="126" width="3" height="1" fill="#c0c0c0"/>
<rect x="143" y="126" width="3" height="1" fill="#c0c0c0"/>
<rect x="149" y="126" width="3" height="1" fill="#c0c0c0"/>
<rect x="155" y="126" width="3" height="1" fill="#c0c0c0"/>
<rect x="161" y="126" width="3" height="1" fill="#c0c0c0"/>
<rect x="167" y="126" width="3" height="1" fill="#c0c0c0"/>
<rect x="173" y="126" width="3" height="1" fill="#c0c0c0"/>
<rect x="179" y="126" width="3" height="1" fill="#c0c0c0"/>
<rect x="185" y="126" width="3" height="1" fill="#c0c0c0"/>
<rect x="191" y="126" width="3" height="1" fill="#c0c0c0"/>
<rect x="197" y="126" width="3" height="1" fill="#c0c0c0"/>
<rect x="203" y="126" width="3" height="1" fill="#c0c0c0"/>
<rect x="209" y="126" width="3" height="1" fill="#c0c0c0"/>
<rect x="215" y="126" width="3" height="1" fill="#c0c0c0"/>
<rect x="221" y="126" width="3" height="1" fill="#c0c0c0"/>
<rect x="76.5" y="60.5" width="148" height="87" fill="none" stroke="#000" stroke-width="1"/>
<rect x="147" y="32" width="56" height="1" fill="#c87890"/>
<path d="M118 60h1v1h-1zM78 61h1v1h-1zM118 61h1v1h-1zM78 62h1v1h-1zM118 62h1v1h-1zM78 63h1v1h-1zM118 63h1v1h-1zM77 64h2v1h-2zM118 64h1v1h-1zM77 65h2v1h-2zM118 65h2v1h-2zM77 66h2v1h-2zM118 66h2v1h-2zM77 67h2v1h-2zM118 67h2v1h-2zM76 68h1v1h-1zM78 68h1v1h-1zM117 68h1v1h-1zM119 68h1v1h-1zM76 69h1v1h-1zM78 69h1v1h-1zM90 69h1v1h-1zM97 69h1v1h-1zM117 69h1v1h-1zM119 69h1v1h-1zM126 69h1v1h-1zM78 70h1v1h-1zM90 70h1v1h-1zM97 70h1v1h-1zM117 70h1v1h-1zM119 70h1v1h-1zM126 70h1v1h-1zM78 71h1v1h-1zM90 71h1v1h-1zM97 71h1v1h-1zM117 71h1v1h-1zM119 71h1v1h-1zM126 71h1v1h-1zM78 72h1v1h-1zM90 72h1v1h-1zM97 72h1v1h-1zM116 72h1v1h-1zM119 72h1v1h-1zM126 72h1v1h-1zM78 73h1v1h-1zM90 73h1v1h-1zM97 73h1v1h-1zM116 73h1v1h-1zM119 73h1v1h-1zM126 73h1v1h-1zM78 74h1v1h-1zM90 74h1v1h-1zM97 74h2v1h-2zM116 74h1v1h-1zM120 74h1v1h-1zM126 74h1v1h-1zM78 75h1v1h-1zM90 75h1v1h-1zM97 75h2v1h-2zM116 75h1v1h-1zM120 75h1v1h-1zM126 75h1v1h-1zM78 76h1v1h-1zM90 76h1v1h-1zM97 76h2v1h-2zM116 76h1v1h-1zM120 76h1v1h-1zM126 76h1v1h-1zM78 77h1v1h-1zM90 77h1v1h-1zM96 77h1v1h-1zM98 77h1v1h-1zM116 77h1v1h-1zM120 77h1v1h-1zM126 77h1v1h-1zM78 78h5v1h-5zM84 78h13v1h-13zM98 78h1v1h-1zM112 78h5v1h-5zM120 78h7v1h-7zM139 78h1v1h-1zM148 78h1v1h-1zM155 78h1v1h-1zM82 79h1v1h-1zM84 79h1v1h-1zM90 79h2v1h-2zM98 79h1v1h-1zM112 79h1v1h-1zM126 79h1v1h-1zM139 79h1v1h-1zM148 79h1v1h-1zM155 79h1v1h-1zM82 80h1v1h-1zM84 80h1v1h-1zM90 80h2v1h-2zM98 80h1v1h-1zM112 80h1v1h-1zM126 80h1v1h-1zM139 80h1v1h-1zM148 80h1v1h-1zM155 80h1v1h-1zM82 81h1v1h-1zM84 81h1v1h-1zM90 81h2v1h-2zM98 81h1v1h-1zM112 81h1v1h-1zM126 81h1v1h-1zM139 81h1v1h-1zM147 81h2v1h-2zM155 81h1v1h-1zM82 82h1v1h-1zM84 82h1v1h-1zM90 82h2v1h-2zM98 82h1v1h-1zM112 82h1v1h-1zM126 82h1v1h-1zM139 82h1v1h-1zM147 82h2v1h-2zM155 82h1v1h-1zM82 83h1v1h-1zM84 83h1v1h-1zM90 83h2v1h-2zM98 83h1v1h-1zM111 83h1v1h-1zM126 83h1v1h-1zM139 83h2v1h-2zM147 83h2v1h-2zM154 83h2v1h-2zM82 84h1v1h-1zM84 84h1v1h-1zM90 84h1v1h-1zM98 84h1v1h-1zM111 84h1v1h-1zM126 84h1v1h-1zM139 84h2v1h-2zM147 84h2v1h-2zM154 84h2v1h-2zM83 85h2v1h-2zM90 85h1v1h-1zM98 85h1v1h-1zM111 85h1v1h-1zM126 85h1v1h-1zM139 85h2v1h-2zM147 85h2v1h-2zM154 85h2v1h-2zM83 86h2v1h-2zM90 86h1v1h-1zM98 86h1v1h-1zM111 86h1v1h-1zM126 86h1v1h-1zM138 86h1v1h-1zM140 86h1v1h-1zM147 86h2v1h-2zM154 86h2v1h-2zM83 87h2v1h-2zM90 87h1v1h-1zM98 87h5v1h-5zM105 87h7v1h-7zM126 87h5v1h-5zM133 87h6v1h-6zM140 87h9v1h-9zM150 87h6v1h-6zM90 88h1v1h-1zM102 88h1v1h-1zM105 88h1v1h-1zM130 88h1v1h-1zM133 88h1v1h-1zM140 88h2v1h-2zM148 88h3v1h-3zM155 88h1v1h-1zM170 88h1v1h-1zM102 89h1v1h-1zM105 89h1v1h-1zM131 89h2v1h-2zM140 89h2v1h-2zM148 89h3v1h-3zM155 89h1v1h-1zM170 89h1v1h-1zM102 90h1v1h-1zM105 90h1v1h-1zM131 90h2v1h-2zM140 90h2v1h-2zM148 90h3v1h-3zM155 90h1v1h-1zM169 90h2v1h-2zM103 91h1v1h-1zM105 91h1v1h-1zM131 91h2v1h-2zM140 91h2v1h-2zM148 91h2v1h-2zM155 91h1v1h-1zM169 91h2v1h-2zM103 92h1v1h-1zM105 92h1v1h-1zM131 92h2v1h-2zM140 92h1v1h-1zM148 92h2v1h-2zM155 92h1v1h-1zM169 92h2v1h-2zM103 93h1v1h-1zM105 93h1v1h-1zM132 93h1v1h-1zM140 93h1v1h-1zM148 93h1v1h-1zM155 93h1v1h-1zM169 93h2v1h-2zM103 94h1v1h-1zM105 94h1v1h-1zM132 94h1v1h-1zM140 94h1v1h-1zM148 94h1v1h-1zM155 94h1v1h-1zM168 94h1v1h-1zM170 94h1v1h-1zM103 95h3v1h-3zM132 95h1v1h-1zM140 95h1v1h-1zM148 95h1v1h-1zM155 95h6v1h-6zM162 95h7v1h-7zM170 95h1v1h-1zM132 96h1v1h-1zM140 96h1v1h-1zM148 96h1v1h-1zM160 96h1v1h-1zM162 96h1v1h-1zM170 96h1v1h-1zM160 97h1v1h-1zM162 97h1v1h-1zM170 97h1v1h-1zM161 98h2v1h-2zM170 98h1v1h-1zM161 99h2v1h-2zM170 99h1v1h-1zM161 100h2v1h-2zM170 100h1v1h-1zM161 101h2v1h-2zM170 101h1v1h-1zM161 102h2v1h-2zM170 102h1v1h-1zM161 103h1v1h-1zM170 103h1v1h-1zM161 104h1v1h-1zM170 104h4v1h-4zM176 104h1v1h-1zM173 105h1v1h-1zM176 105h1v1h-1zM173 106h1v1h-1zM176 106h1v1h-1zM174 107h1v1h-1zM176 107h1v1h-1zM174 108h1v1h-1zM176 108h1v1h-1zM174 109h1v1h-1zM176 109h2v1h-2zM174 110h1v1h-1zM176 110h2v1h-2zM175 111h3v1h-3zM175 112h3v1h-3zM175 113h1v1h-1zM177 113h1v1h-1zM192 113h1v1h-1zM177 114h1v1h-1zM192 114h1v1h-1zM177 115h1v1h-1zM192 115h1v1h-1zM177 116h1v1h-1zM192 116h1v1h-1zM177 117h1v1h-1zM192 117h1v1h-1zM200 117h1v1h-1zM207 117h1v1h-1zM178 118h1v1h-1zM192 118h1v1h-1zM200 118h1v1h-1zM207 118h1v1h-1zM178 119h1v1h-1zM192 119h1v1h-1zM199 119h2v1h-2zM207 119h1v1h-1zM178 120h1v1h-1zM192 120h1v1h-1zM199 120h2v1h-2zM207 120h1v1h-1zM178 121h1v1h-1zM190 121h9v1h-9zM200 121h1v1h-1zM202 121h6v1h-6zM209 121h6v1h-6zM178 122h5v1h-5zM190 122h1v1h-1zM192 122h2v1h-2zM200 122h1v1h-1zM202 122h1v1h-1zM208 122h2v1h-2zM182 123h1v1h-1zM190 123h1v1h-1zM192 123h2v1h-2zM200 123h2v1h-2zM208 123h1v1h-1zM182 124h1v1h-1zM190 124h1v1h-1zM192 124h2v1h-2zM200 124h2v1h-2zM208 124h1v1h-1zM182 125h1v1h-1zM190 125h1v1h-1zM192 125h2v1h-2zM200 125h1v1h-1zM208 125h1v1h-1zM182 126h1v1h-1zM190 126h1v1h-1zM192 126h2v1h-2zM200 126h1v1h-1zM208 126h1v1h-1zM182 127h1v1h-1zM190 127h1v1h-1zM192 127h2v1h-2zM182 128h1v1h-1zM190 128h1v1h-1zM192 128h2v1h-2zM182 129h1v1h-1zM190 129h1v1h-1zM192 129h1v1h-1zM182 130h1v1h-1zM185 130h1v1h-1zM189 130h1v1h-1zM192 130h1v1h-1zM182 131h1v1h-1zM185 131h1v1h-1zM189 131h1v1h-1zM192 131h1v1h-1zM182 132h1v1h-1zM185 132h1v1h-1zM189 132h1v1h-1zM182 133h1v1h-1zM185 133h1v1h-1zM189 133h1v1h-1zM182 134h1v1h-1zM185 134h1v1h-1zM189 134h1v1h-1zM183 135h3v1h-3zM189 135h1v1h-1zM183 136h3v1h-3zM189 136h1v1h-1zM183 137h3v1h-3zM189 137h1v1h-1zM183 138h3v1h-3zM189 138h1v1h-1zM183 139h3v1h-3zM189 139h1v1h-1zM185 140h1v1h-1zM187 140h2v1h-2zM185 141h2v1h-2zM185 142h2v1h-2zM185 143h2v1h-2zM185 144h2v1h-2zM185 145h1v1h-1zM185 146h1v1h-1zM185 147h1v1h-1z" fill="#c87890"/>
<path d="M219 115h2v1h-2zM216 116h8v1h-8zM215 117h10v1h-10zM215 118h10v1h-10zM215 119h10v1h-10zM214 120h12v1h-12zM214 121h12v1h-12zM215 122h10v1h-10zM215 123h10v1h-10zM215 124h10v1h-10zM216 125h8v1h-8zM219 126h2v1h-2z" fill="#c87890"/>
</svg>
<div class="tt" style="left:23px;top:8px;color:#d4d0c8">Nennwert-Verlauf</div>
<div class="tx" style="left:146px;top:35px;height:9px;overflow:hidden">R<span class="us">_</span>Spule</div>
<div class="tx" style="left:147px;top:46px">0.6319</div>
<div class="tx yl" style="right:168px;top:62px">0.7712</div>
<div class="tx yl" style="right:168px;top:78px">0.7214</div>
<div class="tx yl" style="right:168px;top:100px">0.6717</div>
<div class="tx yl" style="right:168px;top:122px">0.6219</div>
<div class="tx yl" style="right:168px;top:137px">0.5722</div>
<div class="tx" style="left:76px;top:153px">0</div>
<div class="tx" style="left:106px;top:153px">50</div>
<div class="tx" style="left:141px;top:153px">100</div>
<div class="tx" style="left:180px;top:153px">150</div>
<div class="tx" style="left:207px;top:153px">200</div>
<div class="tx" style="left:100px;top:167px">Optimierungsschritte</div>
</div>
<div class="win" style="left:242px;top:378px;width:242px">
<svg width="242" height="189" viewBox="0 0 242 189" shape-rendering="crispEdges">
<rect x="0" y="0" width="242" height="189" fill="#d4d0c8"/>
<rect x="1" y="1" width="240" height="1" fill="#ffffff"/>
<rect x="1" y="1" width="1" height="187" fill="#ffffff"/>
<rect x="0" y="188" width="242" height="1" fill="#404040"/>
<rect x="241" y="0" width="1" height="189" fill="#404040"/>
<rect x="1" y="187" width="240" height="1" fill="#808080"/>
<rect x="240" y="1" width="1" height="187" fill="#808080"/>
<rect x="4" y="4" width="234" height="18" fill="#808080"/>
<rect x="6" y="5" width="16" height="16" fill="#0000ff"/>
<rect x="7" y="6" width="14" height="14" fill="#ffffff"/>
<rect x="7" y="8" width="1" height="1" fill="#00ffff"/>
<rect x="8" y="9" width="1" height="1" fill="#00ffff"/>
<rect x="8" y="10" width="1" height="1" fill="#00ffff"/>
<rect x="9" y="11" width="1" height="1" fill="#00ffff"/>
<rect x="9" y="12" width="1" height="1" fill="#00ffff"/>
<rect x="10" y="13" width="1" height="1" fill="#00ffff"/>
<rect x="11" y="14" width="1" height="1" fill="#00ffff"/>
<rect x="11" y="15" width="1" height="1" fill="#00ffff"/>
<rect x="12" y="16" width="1" height="1" fill="#00ffff"/>
<rect x="13" y="17" width="1" height="1" fill="#00ffff"/>
<rect x="14" y="18" width="1" height="1" fill="#00ffff"/>
<rect x="15" y="19" width="1" height="1" fill="#00ffff"/>
<rect x="16" y="19" width="1" height="1" fill="#00ffff"/>
<rect x="17" y="19" width="1" height="1" fill="#00ffff"/>
<rect x="18" y="19" width="1" height="1" fill="#00ffff"/>
<rect x="19" y="19" width="1" height="1" fill="#00ffff"/>
<rect x="20" y="19" width="1" height="1" fill="#00ffff"/>
<rect x="7" y="14" width="1" height="1" fill="#00ff00"/>
<rect x="8" y="14" width="1" height="1" fill="#00ff00"/>
<rect x="9" y="14" width="1" height="1" fill="#00ff00"/>
<rect x="10" y="14" width="1" height="1" fill="#00ff00"/>
<rect x="11" y="14" width="1" height="1" fill="#00ff00"/>
<rect x="12" y="14" width="1" height="1" fill="#00ff00"/>
<rect x="13" y="14" width="1" height="1" fill="#00ff00"/>
<rect x="14" y="14" width="1" height="1" fill="#00ff00"/>
<rect x="15" y="13" width="1" height="1" fill="#00ff00"/>
<rect x="16" y="11" width="1" height="1" fill="#00ff00"/>
<rect x="16" y="12" width="1" height="1" fill="#00ff00"/>
<rect x="17" y="9" width="1" height="1" fill="#00ff00"/>
<rect x="17" y="10" width="1" height="1" fill="#00ff00"/>
<rect x="18" y="11" width="1" height="1" fill="#00ff00"/>
<rect x="18" y="12" width="1" height="1" fill="#00ff00"/>
<rect x="19" y="13" width="1" height="1" fill="#00ff00"/>
<rect x="19" y="14" width="1" height="1" fill="#00ff00"/>
<rect x="20" y="15" width="1" height="1" fill="#00ff00"/>
<rect x="20" y="16" width="1" height="1" fill="#00ff00"/>
<rect x="20" y="17" width="1" height="1" fill="#00ff00"/>
<rect x="186" y="6" width="16" height="14" fill="#404040"/>
<rect x="186" y="6" width="15" height="13" fill="#ffffff"/>
<rect x="187" y="7" width="14" height="12" fill="#808080"/>
<rect x="187" y="7" width="13" height="11" fill="#d4d0c8"/>
<rect x="202" y="6" width="16" height="14" fill="#404040"/>
<rect x="202" y="6" width="15" height="13" fill="#ffffff"/>
<rect x="203" y="7" width="14" height="12" fill="#808080"/>
<rect x="203" y="7" width="13" height="11" fill="#d4d0c8"/>
<rect x="220" y="6" width="16" height="14" fill="#404040"/>
<rect x="220" y="6" width="15" height="13" fill="#ffffff"/>
<rect x="221" y="7" width="14" height="12" fill="#808080"/>
<rect x="221" y="7" width="13" height="11" fill="#d4d0c8"/>
<rect x="190" y="15" width="6" height="2" fill="#000000"/>
<rect x="205" y="8" width="9" height="9" fill="#000000"/>
<rect x="206" y="10" width="7" height="6" fill="#d4d0c8"/>
<rect x="224" y="9" width="1" height="1" fill="#000000"/>
<rect x="225" y="9" width="1" height="1" fill="#000000"/>
<rect x="230" y="9" width="1" height="1" fill="#000000"/>
<rect x="231" y="9" width="1" height="1" fill="#000000"/>
<rect x="225" y="10" width="1" height="1" fill="#000000"/>
<rect x="226" y="10" width="1" height="1" fill="#000000"/>
<rect x="229" y="10" width="1" height="1" fill="#000000"/>
<rect x="230" y="10" width="1" height="1" fill="#000000"/>
<rect x="226" y="11" width="1" height="1" fill="#000000"/>
<rect x="227" y="11" width="1" height="1" fill="#000000"/>
<rect x="228" y="11" width="1" height="1" fill="#000000"/>
<rect x="229" y="11" width="1" height="1" fill="#000000"/>
<rect x="227" y="12" width="1" height="1" fill="#000000"/>
<rect x="228" y="12" width="1" height="1" fill="#000000"/>
<rect x="226" y="13" width="1" height="1" fill="#000000"/>
<rect x="227" y="13" width="1" height="1" fill="#000000"/>
<rect x="228" y="13" width="1" height="1" fill="#000000"/>
<rect x="229" y="13" width="1" height="1" fill="#000000"/>
<rect x="225" y="14" width="1" height="1" fill="#000000"/>
<rect x="226" y="14" width="1" height="1" fill="#000000"/>
<rect x="229" y="14" width="1" height="1" fill="#000000"/>
<rect x="230" y="14" width="1" height="1" fill="#000000"/>
<rect x="224" y="15" width="1" height="1" fill="#000000"/>
<rect x="225" y="15" width="1" height="1" fill="#000000"/>
<rect x="230" y="15" width="1" height="1" fill="#000000"/>
<rect x="231" y="15" width="1" height="1" fill="#000000"/>
<rect x="4" y="23" width="234" height="162" fill="#ffffff"/>
<rect x="4" y="23" width="233" height="1" fill="#808080"/>
<rect x="4" y="23" width="1" height="161" fill="#808080"/>
<rect x="5" y="24" width="231" height="1" fill="#404040"/>
<rect x="5" y="24" width="1" height="159" fill="#404040"/>
<rect x="5" y="183" width="232" height="1" fill="#d4d0c8"/>
<rect x="236" y="24" width="1" height="160" fill="#d4d0c8"/>
<rect x="6" y="25" width="230" height="158" fill="#fbfbef"/>
<rect x="7" y="26" width="228" height="156" fill="#000000"/>
<rect x="8" y="27" width="226" height="154" fill="#ffffff"/>
<rect x="113" y="60" width="1" height="3" fill="#c0c0c0"/>
<rect x="113" y="66" width="1" height="3" fill="#c0c0c0"/>
<rect x="113" y="72" width="1" height="3" fill="#c0c0c0"/>
<rect x="113" y="78" width="1" height="3" fill="#c0c0c0"/>
<rect x="113" y="84" width="1" height="3" fill="#c0c0c0"/>
<rect x="113" y="90" width="1" height="3" fill="#c0c0c0"/>
<rect x="113" y="96" width="1" height="3" fill="#c0c0c0"/>
<rect x="113" y="102" width="1" height="3" fill="#c0c0c0"/>
<rect x="113" y="108" width="1" height="3" fill="#c0c0c0"/>
<rect x="113" y="114" width="1" height="3" fill="#c0c0c0"/>
<rect x="113" y="120" width="1" height="3" fill="#c0c0c0"/>
<rect x="113" y="126" width="1" height="3" fill="#c0c0c0"/>
<rect x="113" y="132" width="1" height="3" fill="#c0c0c0"/>
<rect x="113" y="138" width="1" height="3" fill="#c0c0c0"/>
<rect x="113" y="144" width="1" height="3" fill="#c0c0c0"/>
<rect x="150" y="60" width="1" height="3" fill="#c0c0c0"/>
<rect x="150" y="66" width="1" height="3" fill="#c0c0c0"/>
<rect x="150" y="72" width="1" height="3" fill="#c0c0c0"/>
<rect x="150" y="78" width="1" height="3" fill="#c0c0c0"/>
<rect x="150" y="84" width="1" height="3" fill="#c0c0c0"/>
<rect x="150" y="90" width="1" height="3" fill="#c0c0c0"/>
<rect x="150" y="96" width="1" height="3" fill="#c0c0c0"/>
<rect x="150" y="102" width="1" height="3" fill="#c0c0c0"/>
<rect x="150" y="108" width="1" height="3" fill="#c0c0c0"/>
<rect x="150" y="114" width="1" height="3" fill="#c0c0c0"/>
<rect x="150" y="120" width="1" height="3" fill="#c0c0c0"/>
<rect x="150" y="126" width="1" height="3" fill="#c0c0c0"/>
<rect x="150" y="132" width="1" height="3" fill="#c0c0c0"/>
<rect x="150" y="138" width="1" height="3" fill="#c0c0c0"/>
<rect x="150" y="144" width="1" height="3" fill="#c0c0c0"/>
<rect x="187" y="60" width="1" height="3" fill="#c0c0c0"/>
<rect x="187" y="66" width="1" height="3" fill="#c0c0c0"/>
<rect x="187" y="72" width="1" height="3" fill="#c0c0c0"/>
<rect x="187" y="78" width="1" height="3" fill="#c0c0c0"/>
<rect x="187" y="84" width="1" height="3" fill="#c0c0c0"/>
<rect x="187" y="90" width="1" height="3" fill="#c0c0c0"/>
<rect x="187" y="96" width="1" height="3" fill="#c0c0c0"/>
<rect x="187" y="102" width="1" height="3" fill="#c0c0c0"/>
<rect x="187" y="108" width="1" height="3" fill="#c0c0c0"/>
<rect x="187" y="114" width="1" height="3" fill="#c0c0c0"/>
<rect x="187" y="120" width="1" height="3" fill="#c0c0c0"/>
<rect x="187" y="126" width="1" height="3" fill="#c0c0c0"/>
<rect x="187" y="132" width="1" height="3" fill="#c0c0c0"/>
<rect x="187" y="138" width="1" height="3" fill="#c0c0c0"/>
<rect x="187" y="144" width="1" height="3" fill="#c0c0c0"/>
<rect x="77" y="82" width="3" height="1" fill="#c0c0c0"/>
<rect x="83" y="82" width="3" height="1" fill="#c0c0c0"/>
<rect x="89" y="82" width="3" height="1" fill="#c0c0c0"/>
<rect x="95" y="82" width="3" height="1" fill="#c0c0c0"/>
<rect x="101" y="82" width="3" height="1" fill="#c0c0c0"/>
<rect x="107" y="82" width="3" height="1" fill="#c0c0c0"/>
<rect x="113" y="82" width="3" height="1" fill="#c0c0c0"/>
<rect x="119" y="82" width="3" height="1" fill="#c0c0c0"/>
<rect x="125" y="82" width="3" height="1" fill="#c0c0c0"/>
<rect x="131" y="82" width="3" height="1" fill="#c0c0c0"/>
<rect x="137" y="82" width="3" height="1" fill="#c0c0c0"/>
<rect x="143" y="82" width="3" height="1" fill="#c0c0c0"/>
<rect x="149" y="82" width="3" height="1" fill="#c0c0c0"/>
<rect x="155" y="82" width="3" height="1" fill="#c0c0c0"/>
<rect x="161" y="82" width="3" height="1" fill="#c0c0c0"/>
<rect x="167" y="82" width="3" height="1" fill="#c0c0c0"/>
<rect x="173" y="82" width="3" height="1" fill="#c0c0c0"/>
<rect x="179" y="82" width="3" height="1" fill="#c0c0c0"/>
<rect x="185" y="82" width="3" height="1" fill="#c0c0c0"/>
<rect x="191" y="82" width="3" height="1" fill="#c0c0c0"/>
<rect x="197" y="82" width="3" height="1" fill="#c0c0c0"/>
<rect x="203" y="82" width="3" height="1" fill="#c0c0c0"/>
<rect x="209" y="82" width="3" height="1" fill="#c0c0c0"/>
<rect x="215" y="82" width="3" height="1" fill="#c0c0c0"/>
<rect x="221" y="82" width="3" height="1" fill="#c0c0c0"/>
<rect x="77" y="104" width="3" height="1" fill="#c0c0c0"/>
<rect x="83" y="104" width="3" height="1" fill="#c0c0c0"/>
<rect x="89" y="104" width="3" height="1" fill="#c0c0c0"/>
<rect x="95" y="104" width="3" height="1" fill="#c0c0c0"/>
<rect x="101" y="104" width="3" height="1" fill="#c0c0c0"/>
<rect x="107" y="104" width="3" height="1" fill="#c0c0c0"/>
<rect x="113" y="104" width="3" height="1" fill="#c0c0c0"/>
<rect x="119" y="104" width="3" height="1" fill="#c0c0c0"/>
<rect x="125" y="104" width="3" height="1" fill="#c0c0c0"/>
<rect x="131" y="104" width="3" height="1" fill="#c0c0c0"/>
<rect x="137" y="104" width="3" height="1" fill="#c0c0c0"/>
<rect x="143" y="104" width="3" height="1" fill="#c0c0c0"/>
<rect x="149" y="104" width="3" height="1" fill="#c0c0c0"/>
<rect x="155" y="104" width="3" height="1" fill="#c0c0c0"/>
<rect x="161" y="104" width="3" height="1" fill="#c0c0c0"/>
<rect x="167" y="104" width="3" height="1" fill="#c0c0c0"/>
<rect x="173" y="104" width="3" height="1" fill="#c0c0c0"/>
<rect x="179" y="104" width="3" height="1" fill="#c0c0c0"/>
<rect x="185" y="104" width="3" height="1" fill="#c0c0c0"/>
<rect x="191" y="104" width="3" height="1" fill="#c0c0c0"/>
<rect x="197" y="104" width="3" height="1" fill="#c0c0c0"/>
<rect x="203" y="104" width="3" height="1" fill="#c0c0c0"/>
<rect x="209" y="104" width="3" height="1" fill="#c0c0c0"/>
<rect x="215" y="104" width="3" height="1" fill="#c0c0c0"/>
<rect x="221" y="104" width="3" height="1" fill="#c0c0c0"/>
<rect x="77" y="126" width="3" height="1" fill="#c0c0c0"/>
<rect x="83" y="126" width="3" height="1" fill="#c0c0c0"/>
<rect x="89" y="126" width="3" height="1" fill="#c0c0c0"/>
<rect x="95" y="126" width="3" height="1" fill="#c0c0c0"/>
<rect x="101" y="126" width="3" height="1" fill="#c0c0c0"/>
<rect x="107" y="126" width="3" height="1" fill="#c0c0c0"/>
<rect x="113" y="126" width="3" height="1" fill="#c0c0c0"/>
<rect x="119" y="126" width="3" height="1" fill="#c0c0c0"/>
<rect x="125" y="126" width="3" height="1" fill="#c0c0c0"/>
<rect x="131" y="126" width="3" height="1" fill="#c0c0c0"/>
<rect x="137" y="126" width="3" height="1" fill="#c0c0c0"/>
<rect x="143" y="126" width="3" height="1" fill="#c0c0c0"/>
<rect x="149" y="126" width="3" height="1" fill="#c0c0c0"/>
<rect x="155" y="126" width="3" height="1" fill="#c0c0c0"/>
<rect x="161" y="126" width="3" height="1" fill="#c0c0c0"/>
<rect x="167" y="126" width="3" height="1" fill="#c0c0c0"/>
<rect x="173" y="126" width="3" height="1" fill="#c0c0c0"/>
<rect x="179" y="126" width="3" height="1" fill="#c0c0c0"/>
<rect x="185" y="126" width="3" height="1" fill="#c0c0c0"/>
<rect x="191" y="126" width="3" height="1" fill="#c0c0c0"/>
<rect x="197" y="126" width="3" height="1" fill="#c0c0c0"/>
<rect x="203" y="126" width="3" height="1" fill="#c0c0c0"/>
<rect x="209" y="126" width="3" height="1" fill="#c0c0c0"/>
<rect x="215" y="126" width="3" height="1" fill="#c0c0c0"/>
<rect x="221" y="126" width="3" height="1" fill="#c0c0c0"/>
<rect x="76.5" y="60.5" width="149" height="87" fill="none" stroke="#000" stroke-width="1"/>
<rect x="148" y="32" width="56" height="1" fill="#58d0e0"/>
<path d="M100 60h1v1h-1zM99 61h2v1h-2zM99 62h2v1h-2zM92 63h1v1h-1zM95 63h4v1h-4zM100 63h1v1h-1zM106 63h1v1h-1zM92 64h1v1h-1zM95 64h1v1h-1zM100 64h1v1h-1zM106 64h1v1h-1zM85 65h1v1h-1zM88 65h5v1h-5zM94 65h1v1h-1zM100 65h7v1h-7zM85 66h1v1h-1zM88 66h1v1h-1zM92 66h2v1h-2zM106 66h1v1h-1zM84 67h2v1h-2zM88 67h1v1h-1zM92 67h1v1h-1zM106 67h1v1h-1zM82 68h7v1h-7zM92 68h1v1h-1zM106 68h1v1h-1zM82 69h1v1h-1zM85 69h2v1h-2zM106 69h4v1h-4zM113 69h1v1h-1zM79 70h4v1h-4zM85 70h1v1h-1zM110 70h4v1h-4zM79 71h1v1h-1zM85 71h1v1h-1zM113 71h1v1h-1zM79 72h1v1h-1zM113 72h1v1h-1zM76 73h4v1h-4zM113 73h1v1h-1zM114 74h2v1h-2zM115 75h1v1h-1zM116 76h1v1h-1zM120 76h1v1h-1zM116 77h4v1h-4zM121 77h1v1h-1zM121 78h1v1h-1zM122 79h1v1h-1zM123 80h1v1h-1zM123 81h1v1h-1zM124 82h1v1h-1zM124 83h1v1h-1zM124 84h1v1h-1zM124 85h1v1h-1zM124 86h1v1h-1zM127 86h1v1h-1zM124 87h5v1h-5zM128 88h1v1h-1zM130 88h1v1h-1zM129 89h2v1h-2zM129 90h1v1h-1zM131 90h1v1h-1zM131 91h1v1h-1zM131 92h1v1h-1zM134 92h1v1h-1zM132 93h1v1h-1zM134 93h1v1h-1zM132 94h6v1h-6zM134 95h2v1h-2zM137 95h1v1h-1zM134 96h1v1h-1zM137 96h1v1h-1zM134 97h1v1h-1zM137 97h1v1h-1zM138 98h1v1h-1zM138 99h1v1h-1zM138 100h1v1h-1zM141 100h1v1h-1zM138 101h1v1h-1zM141 101h2v1h-2zM138 102h3v1h-3zM142 102h1v1h-1zM145 102h1v1h-1zM142 103h1v1h-1zM144 103h2v1h-2zM143 104h3v1h-3zM143 105h1v1h-1zM145 105h1v1h-1zM146 106h1v1h-1zM146 107h1v1h-1zM149 107h1v1h-1zM146 108h1v1h-1zM149 108h1v1h-1zM146 109h3v1h-3zM150 109h3v1h-3zM150 110h1v1h-1zM153 110h1v1h-1zM153 111h1v1h-1zM154 112h1v1h-1zM154 113h1v1h-1zM154 114h1v1h-1zM157 114h1v1h-1zM154 115h1v1h-1zM157 115h1v1h-1zM154 116h7v1h-7zM158 117h1v1h-1zM160 117h1v1h-1zM158 118h1v1h-1zM160 118h1v1h-1zM158 119h1v1h-1zM160 119h1v1h-1zM161 120h1v1h-1zM161 121h1v1h-1zM161 122h1v1h-1zM164 122h1v1h-1zM161 123h7v1h-7zM165 124h1v1h-1zM167 124h1v1h-1zM165 125h1v1h-1zM167 125h1v1h-1zM165 126h1v1h-1zM168 126h1v1h-1zM168 127h1v1h-1zM168 128h1v1h-1zM171 128h1v1h-1zM168 129h1v1h-1zM171 129h1v1h-1zM169 130h2v1h-2zM172 130h1v1h-1zM169 131h2v1h-2zM172 131h1v1h-1zM174 131h2v1h-2zM172 132h1v1h-1zM174 132h2v1h-2zM173 133h1v1h-1zM175 133h1v1h-1zM173 134h1v1h-1zM175 134h1v1h-1zM176 135h1v1h-1zM176 136h1v1h-1zM178 136h1v1h-1zM195 136h1v1h-1zM202 136h1v1h-1zM176 137h1v1h-1zM178 137h1v1h-1zM195 137h1v1h-1zM202 137h1v1h-1zM176 138h1v1h-1zM178 138h2v1h-2zM193 138h23v1h-23zM176 139h8v1h-8zM192 139h1v1h-1zM195 139h2v1h-2zM202 139h1v1h-1zM210 139h1v1h-1zM179 140h1v1h-1zM183 140h1v1h-1zM192 140h1v1h-1zM195 140h1v1h-1zM202 140h1v1h-1zM210 140h1v1h-1zM183 141h1v1h-1zM191 141h1v1h-1zM183 142h1v1h-1zM191 142h1v1h-1zM183 143h1v1h-1zM191 143h1v1h-1zM183 144h1v1h-1zM187 144h1v1h-1zM190 144h1v1h-1zM183 145h8v1h-8zM188 146h1v1h-1zM188 147h1v1h-1z" fill="#58d0e0"/>
<path d="M220 132h2v1h-2zM217 133h8v1h-8zM216 134h10v1h-10zM216 135h10v1h-10zM216 136h10v1h-10zM215 137h12v1h-12zM215 138h12v1h-12zM216 139h10v1h-10zM216 140h10v1h-10zM216 141h10v1h-10zM217 142h8v1h-8zM220 143h2v1h-2z" fill="#58d0e0"/>
</svg>
<div class="tt" style="left:23px;top:8px;color:#d4d0c8">Nennwert-Verlauf</div>
<div class="tx" style="left:147px;top:35px;height:9px;overflow:hidden">R<span class="us">_</span>Schutz</div>
<div class="tx" style="left:147px;top:46px">189.5</div>
<div class="tx yl" style="right:169px;top:62px">509.2</div>
<div class="tx yl" style="right:169px;top:78px">419.3</div>
<div class="tx yl" style="right:169px;top:100px">329.3</div>
<div class="tx yl" style="right:169px;top:122px">239.4</div>
<div class="tx yl" style="right:169px;top:137px">149.5</div>
<div class="tx" style="left:76px;top:153px">0</div>
<div class="tx" style="left:106px;top:153px">50</div>
<div class="tx" style="left:141px;top:153px">100</div>
<div class="tx" style="left:180px;top:153px">150</div>
<div class="tx" style="left:208px;top:153px">200</div>
<div class="tx" style="left:101px;top:167px">Optimierungsschritte</div>
</div>
<div class="win" style="left:484px;top:378px;width:242px">
<svg width="242" height="189" viewBox="0 0 242 189" shape-rendering="crispEdges">
<rect x="0" y="0" width="242" height="189" fill="#d4d0c8"/>
<rect x="1" y="1" width="240" height="1" fill="#ffffff"/>
<rect x="1" y="1" width="1" height="187" fill="#ffffff"/>
<rect x="0" y="188" width="242" height="1" fill="#404040"/>
<rect x="241" y="0" width="1" height="189" fill="#404040"/>
<rect x="1" y="187" width="240" height="1" fill="#808080"/>
<rect x="240" y="1" width="1" height="187" fill="#808080"/>
<rect x="4" y="4" width="234" height="18" fill="#808080"/>
<rect x="6" y="5" width="16" height="16" fill="#0000ff"/>
<rect x="7" y="6" width="14" height="14" fill="#ffffff"/>
<rect x="7" y="8" width="1" height="1" fill="#00ffff"/>
<rect x="8" y="9" width="1" height="1" fill="#00ffff"/>
<rect x="8" y="10" width="1" height="1" fill="#00ffff"/>
<rect x="9" y="11" width="1" height="1" fill="#00ffff"/>
<rect x="9" y="12" width="1" height="1" fill="#00ffff"/>
<rect x="10" y="13" width="1" height="1" fill="#00ffff"/>
<rect x="11" y="14" width="1" height="1" fill="#00ffff"/>
<rect x="11" y="15" width="1" height="1" fill="#00ffff"/>
<rect x="12" y="16" width="1" height="1" fill="#00ffff"/>
<rect x="13" y="17" width="1" height="1" fill="#00ffff"/>
<rect x="14" y="18" width="1" height="1" fill="#00ffff"/>
<rect x="15" y="19" width="1" height="1" fill="#00ffff"/>
<rect x="16" y="19" width="1" height="1" fill="#00ffff"/>
<rect x="17" y="19" width="1" height="1" fill="#00ffff"/>
<rect x="18" y="19" width="1" height="1" fill="#00ffff"/>
<rect x="19" y="19" width="1" height="1" fill="#00ffff"/>
<rect x="20" y="19" width="1" height="1" fill="#00ffff"/>
<rect x="7" y="14" width="1" height="1" fill="#00ff00"/>
<rect x="8" y="14" width="1" height="1" fill="#00ff00"/>
<rect x="9" y="14" width="1" height="1" fill="#00ff00"/>
<rect x="10" y="14" width="1" height="1" fill="#00ff00"/>
<rect x="11" y="14" width="1" height="1" fill="#00ff00"/>
<rect x="12" y="14" width="1" height="1" fill="#00ff00"/>
<rect x="13" y="14" width="1" height="1" fill="#00ff00"/>
<rect x="14" y="14" width="1" height="1" fill="#00ff00"/>
<rect x="15" y="13" width="1" height="1" fill="#00ff00"/>
<rect x="16" y="11" width="1" height="1" fill="#00ff00"/>
<rect x="16" y="12" width="1" height="1" fill="#00ff00"/>
<rect x="17" y="9" width="1" height="1" fill="#00ff00"/>
<rect x="17" y="10" width="1" height="1" fill="#00ff00"/>
<rect x="18" y="11" width="1" height="1" fill="#00ff00"/>
<rect x="18" y="12" width="1" height="1" fill="#00ff00"/>
<rect x="19" y="13" width="1" height="1" fill="#00ff00"/>
<rect x="19" y="14" width="1" height="1" fill="#00ff00"/>
<rect x="20" y="15" width="1" height="1" fill="#00ff00"/>
<rect x="20" y="16" width="1" height="1" fill="#00ff00"/>
<rect x="20" y="17" width="1" height="1" fill="#00ff00"/>
<rect x="186" y="6" width="16" height="14" fill="#404040"/>
<rect x="186" y="6" width="15" height="13" fill="#ffffff"/>
<rect x="187" y="7" width="14" height="12" fill="#808080"/>
<rect x="187" y="7" width="13" height="11" fill="#d4d0c8"/>
<rect x="202" y="6" width="16" height="14" fill="#404040"/>
<rect x="202" y="6" width="15" height="13" fill="#ffffff"/>
<rect x="203" y="7" width="14" height="12" fill="#808080"/>
<rect x="203" y="7" width="13" height="11" fill="#d4d0c8"/>
<rect x="220" y="6" width="16" height="14" fill="#404040"/>
<rect x="220" y="6" width="15" height="13" fill="#ffffff"/>
<rect x="221" y="7" width="14" height="12" fill="#808080"/>
<rect x="221" y="7" width="13" height="11" fill="#d4d0c8"/>
<rect x="190" y="15" width="6" height="2" fill="#000000"/>
<rect x="205" y="8" width="9" height="9" fill="#000000"/>
<rect x="206" y="10" width="7" height="6" fill="#d4d0c8"/>
<rect x="224" y="9" width="1" height="1" fill="#000000"/>
<rect x="225" y="9" width="1" height="1" fill="#000000"/>
<rect x="230" y="9" width="1" height="1" fill="#000000"/>
<rect x="231" y="9" width="1" height="1" fill="#000000"/>
<rect x="225" y="10" width="1" height="1" fill="#000000"/>
<rect x="226" y="10" width="1" height="1" fill="#000000"/>
<rect x="229" y="10" width="1" height="1" fill="#000000"/>
<rect x="230" y="10" width="1" height="1" fill="#000000"/>
<rect x="226" y="11" width="1" height="1" fill="#000000"/>
<rect x="227" y="11" width="1" height="1" fill="#000000"/>
<rect x="228" y="11" width="1" height="1" fill="#000000"/>
<rect x="229" y="11" width="1" height="1" fill="#000000"/>
<rect x="227" y="12" width="1" height="1" fill="#000000"/>
<rect x="228" y="12" width="1" height="1" fill="#000000"/>
<rect x="226" y="13" width="1" height="1" fill="#000000"/>
<rect x="227" y="13" width="1" height="1" fill="#000000"/>
<rect x="228" y="13" width="1" height="1" fill="#000000"/>
<rect x="229" y="13" width="1" height="1" fill="#000000"/>
<rect x="225" y="14" width="1" height="1" fill="#000000"/>
<rect x="226" y="14" width="1" height="1" fill="#000000"/>
<rect x="229" y="14" width="1" height="1" fill="#000000"/>
<rect x="230" y="14" width="1" height="1" fill="#000000"/>
<rect x="224" y="15" width="1" height="1" fill="#000000"/>
<rect x="225" y="15" width="1" height="1" fill="#000000"/>
<rect x="230" y="15" width="1" height="1" fill="#000000"/>
<rect x="231" y="15" width="1" height="1" fill="#000000"/>
<rect x="4" y="23" width="234" height="162" fill="#ffffff"/>
<rect x="4" y="23" width="233" height="1" fill="#808080"/>
<rect x="4" y="23" width="1" height="161" fill="#808080"/>
<rect x="5" y="24" width="231" height="1" fill="#404040"/>
<rect x="5" y="24" width="1" height="159" fill="#404040"/>
<rect x="5" y="183" width="232" height="1" fill="#d4d0c8"/>
<rect x="236" y="24" width="1" height="160" fill="#d4d0c8"/>
<rect x="6" y="25" width="230" height="158" fill="#fbfbef"/>
<rect x="7" y="26" width="228" height="156" fill="#000000"/>
<rect x="8" y="27" width="226" height="154" fill="#ffffff"/>
<rect x="113" y="60" width="1" height="3" fill="#c0c0c0"/>
<rect x="113" y="66" width="1" height="3" fill="#c0c0c0"/>
<rect x="113" y="72" width="1" height="3" fill="#c0c0c0"/>
<rect x="113" y="78" width="1" height="3" fill="#c0c0c0"/>
<rect x="113" y="84" width="1" height="3" fill="#c0c0c0"/>
<rect x="113" y="90" width="1" height="3" fill="#c0c0c0"/>
<rect x="113" y="96" width="1" height="3" fill="#c0c0c0"/>
<rect x="113" y="102" width="1" height="3" fill="#c0c0c0"/>
<rect x="113" y="108" width="1" height="3" fill="#c0c0c0"/>
<rect x="113" y="114" width="1" height="3" fill="#c0c0c0"/>
<rect x="113" y="120" width="1" height="3" fill="#c0c0c0"/>
<rect x="113" y="126" width="1" height="3" fill="#c0c0c0"/>
<rect x="113" y="132" width="1" height="3" fill="#c0c0c0"/>
<rect x="113" y="138" width="1" height="3" fill="#c0c0c0"/>
<rect x="113" y="144" width="1" height="3" fill="#c0c0c0"/>
<rect x="150" y="60" width="1" height="3" fill="#c0c0c0"/>
<rect x="150" y="66" width="1" height="3" fill="#c0c0c0"/>
<rect x="150" y="72" width="1" height="3" fill="#c0c0c0"/>
<rect x="150" y="78" width="1" height="3" fill="#c0c0c0"/>
<rect x="150" y="84" width="1" height="3" fill="#c0c0c0"/>
<rect x="150" y="90" width="1" height="3" fill="#c0c0c0"/>
<rect x="150" y="96" width="1" height="3" fill="#c0c0c0"/>
<rect x="150" y="102" width="1" height="3" fill="#c0c0c0"/>
<rect x="150" y="108" width="1" height="3" fill="#c0c0c0"/>
<rect x="150" y="114" width="1" height="3" fill="#c0c0c0"/>
<rect x="150" y="120" width="1" height="3" fill="#c0c0c0"/>
<rect x="150" y="126" width="1" height="3" fill="#c0c0c0"/>
<rect x="150" y="132" width="1" height="3" fill="#c0c0c0"/>
<rect x="150" y="138" width="1" height="3" fill="#c0c0c0"/>
<rect x="150" y="144" width="1" height="3" fill="#c0c0c0"/>
<rect x="187" y="60" width="1" height="3" fill="#c0c0c0"/>
<rect x="187" y="66" width="1" height="3" fill="#c0c0c0"/>
<rect x="187" y="72" width="1" height="3" fill="#c0c0c0"/>
<rect x="187" y="78" width="1" height="3" fill="#c0c0c0"/>
<rect x="187" y="84" width="1" height="3" fill="#c0c0c0"/>
<rect x="187" y="90" width="1" height="3" fill="#c0c0c0"/>
<rect x="187" y="96" width="1" height="3" fill="#c0c0c0"/>
<rect x="187" y="102" width="1" height="3" fill="#c0c0c0"/>
<rect x="187" y="108" width="1" height="3" fill="#c0c0c0"/>
<rect x="187" y="114" width="1" height="3" fill="#c0c0c0"/>
<rect x="187" y="120" width="1" height="3" fill="#c0c0c0"/>
<rect x="187" y="126" width="1" height="3" fill="#c0c0c0"/>
<rect x="187" y="132" width="1" height="3" fill="#c0c0c0"/>
<rect x="187" y="138" width="1" height="3" fill="#c0c0c0"/>
<rect x="187" y="144" width="1" height="3" fill="#c0c0c0"/>
<rect x="77" y="82" width="3" height="1" fill="#c0c0c0"/>
<rect x="83" y="82" width="3" height="1" fill="#c0c0c0"/>
<rect x="89" y="82" width="3" height="1" fill="#c0c0c0"/>
<rect x="95" y="82" width="3" height="1" fill="#c0c0c0"/>
<rect x="101" y="82" width="3" height="1" fill="#c0c0c0"/>
<rect x="107" y="82" width="3" height="1" fill="#c0c0c0"/>
<rect x="113" y="82" width="3" height="1" fill="#c0c0c0"/>
<rect x="119" y="82" width="3" height="1" fill="#c0c0c0"/>
<rect x="125" y="82" width="3" height="1" fill="#c0c0c0"/>
<rect x="131" y="82" width="3" height="1" fill="#c0c0c0"/>
<rect x="137" y="82" width="3" height="1" fill="#c0c0c0"/>
<rect x="143" y="82" width="3" height="1" fill="#c0c0c0"/>
<rect x="149" y="82" width="3" height="1" fill="#c0c0c0"/>
<rect x="155" y="82" width="3" height="1" fill="#c0c0c0"/>
<rect x="161" y="82" width="3" height="1" fill="#c0c0c0"/>
<rect x="167" y="82" width="3" height="1" fill="#c0c0c0"/>
<rect x="173" y="82" width="3" height="1" fill="#c0c0c0"/>
<rect x="179" y="82" width="3" height="1" fill="#c0c0c0"/>
<rect x="185" y="82" width="3" height="1" fill="#c0c0c0"/>
<rect x="191" y="82" width="3" height="1" fill="#c0c0c0"/>
<rect x="197" y="82" width="3" height="1" fill="#c0c0c0"/>
<rect x="203" y="82" width="3" height="1" fill="#c0c0c0"/>
<rect x="209" y="82" width="3" height="1" fill="#c0c0c0"/>
<rect x="215" y="82" width="3" height="1" fill="#c0c0c0"/>
<rect x="221" y="82" width="3" height="1" fill="#c0c0c0"/>
<rect x="77" y="104" width="3" height="1" fill="#c0c0c0"/>
<rect x="83" y="104" width="3" height="1" fill="#c0c0c0"/>
<rect x="89" y="104" width="3" height="1" fill="#c0c0c0"/>
<rect x="95" y="104" width="3" height="1" fill="#c0c0c0"/>
<rect x="101" y="104" width="3" height="1" fill="#c0c0c0"/>
<rect x="107" y="104" width="3" height="1" fill="#c0c0c0"/>
<rect x="113" y="104" width="3" height="1" fill="#c0c0c0"/>
<rect x="119" y="104" width="3" height="1" fill="#c0c0c0"/>
<rect x="125" y="104" width="3" height="1" fill="#c0c0c0"/>
<rect x="131" y="104" width="3" height="1" fill="#c0c0c0"/>
<rect x="137" y="104" width="3" height="1" fill="#c0c0c0"/>
<rect x="143" y="104" width="3" height="1" fill="#c0c0c0"/>
<rect x="149" y="104" width="3" height="1" fill="#c0c0c0"/>
<rect x="155" y="104" width="3" height="1" fill="#c0c0c0"/>
<rect x="161" y="104" width="3" height="1" fill="#c0c0c0"/>
<rect x="167" y="104" width="3" height="1" fill="#c0c0c0"/>
<rect x="173" y="104" width="3" height="1" fill="#c0c0c0"/>
<rect x="179" y="104" width="3" height="1" fill="#c0c0c0"/>
<rect x="185" y="104" width="3" height="1" fill="#c0c0c0"/>
<rect x="191" y="104" width="3" height="1" fill="#c0c0c0"/>
<rect x="197" y="104" width="3" height="1" fill="#c0c0c0"/>
<rect x="203" y="104" width="3" height="1" fill="#c0c0c0"/>
<rect x="209" y="104" width="3" height="1" fill="#c0c0c0"/>
<rect x="215" y="104" width="3" height="1" fill="#c0c0c0"/>
<rect x="221" y="104" width="3" height="1" fill="#c0c0c0"/>
<rect x="77" y="126" width="3" height="1" fill="#c0c0c0"/>
<rect x="83" y="126" width="3" height="1" fill="#c0c0c0"/>
<rect x="89" y="126" width="3" height="1" fill="#c0c0c0"/>
<rect x="95" y="126" width="3" height="1" fill="#c0c0c0"/>
<rect x="101" y="126" width="3" height="1" fill="#c0c0c0"/>
<rect x="107" y="126" width="3" height="1" fill="#c0c0c0"/>
<rect x="113" y="126" width="3" height="1" fill="#c0c0c0"/>
<rect x="119" y="126" width="3" height="1" fill="#c0c0c0"/>
<rect x="125" y="126" width="3" height="1" fill="#c0c0c0"/>
<rect x="131" y="126" width="3" height="1" fill="#c0c0c0"/>
<rect x="137" y="126" width="3" height="1" fill="#c0c0c0"/>
<rect x="143" y="126" width="3" height="1" fill="#c0c0c0"/>
<rect x="149" y="126" width="3" height="1" fill="#c0c0c0"/>
<rect x="155" y="126" width="3" height="1" fill="#c0c0c0"/>
<rect x="161" y="126" width="3" height="1" fill="#c0c0c0"/>
<rect x="167" y="126" width="3" height="1" fill="#c0c0c0"/>
<rect x="173" y="126" width="3" height="1" fill="#c0c0c0"/>
<rect x="179" y="126" width="3" height="1" fill="#c0c0c0"/>
<rect x="185" y="126" width="3" height="1" fill="#c0c0c0"/>
<rect x="191" y="126" width="3" height="1" fill="#c0c0c0"/>
<rect x="197" y="126" width="3" height="1" fill="#c0c0c0"/>
<rect x="203" y="126" width="3" height="1" fill="#c0c0c0"/>
<rect x="209" y="126" width="3" height="1" fill="#c0c0c0"/>
<rect x="215" y="126" width="3" height="1" fill="#c0c0c0"/>
<rect x="221" y="126" width="3" height="1" fill="#c0c0c0"/>
<rect x="76.5" y="60.5" width="149" height="87" fill="none" stroke="#000" stroke-width="1"/>
<rect x="148" y="32" width="56" height="1" fill="#002888"/>
<path d="M78 60h2v1h-2zM77 61h4v1h-4zM80 62h1v1h-1zM80 63h1v1h-1zM81 64h1v1h-1zM82 65h1v1h-1zM82 66h1v1h-1zM82 67h1v1h-1zM82 68h1v1h-1zM86 68h1v1h-1zM83 69h1v1h-1zM86 69h1v1h-1zM83 70h1v1h-1zM86 70h2v1h-2zM84 71h2v1h-2zM87 71h1v1h-1zM84 72h1v1h-1zM88 72h1v1h-1zM88 73h1v1h-1zM88 74h1v1h-1zM88 75h1v1h-1zM93 75h1v1h-1zM88 76h1v1h-1zM91 76h3v1h-3zM88 77h7v1h-7zM94 78h1v1h-1zM95 79h1v1h-1zM95 80h1v1h-1zM95 81h3v1h-3zM95 82h1v1h-1zM97 82h1v1h-1zM99 82h1v1h-1zM97 83h4v1h-4zM100 84h1v1h-1zM101 85h1v1h-1zM101 86h2v1h-2zM102 87h1v1h-1zM102 88h2v1h-2zM103 89h1v1h-1zM106 89h1v1h-1zM103 90h4v1h-4zM104 91h1v1h-1zM106 91h1v1h-1zM106 92h1v1h-1zM106 93h2v1h-2zM108 94h2v1h-2zM109 95h1v1h-1zM109 96h1v1h-1zM109 97h1v1h-1zM109 98h1v1h-1zM109 99h1v1h-1zM109 100h1v1h-1zM112 100h1v1h-1zM109 101h4v1h-4zM111 102h4v1h-4zM113 103h1v1h-1zM115 103h1v1h-1zM115 104h1v1h-1zM115 105h1v1h-1zM116 106h1v1h-1zM116 107h1v1h-1zM116 108h1v1h-1zM116 109h1v1h-1zM116 110h1v1h-1zM117 111h1v1h-1zM117 112h5v1h-5zM122 113h1v1h-1zM123 114h1v1h-1zM124 115h1v1h-1zM124 116h1v1h-1zM124 117h1v1h-1zM124 118h1v1h-1zM124 119h1v1h-1zM124 120h1v1h-1zM125 121h1v1h-1zM125 122h1v1h-1zM128 122h1v1h-1zM125 123h3v1h-3zM129 123h2v1h-2zM131 124h1v1h-1zM131 125h1v1h-1zM131 126h2v1h-2zM132 127h1v1h-1zM132 128h1v1h-1zM132 129h1v1h-1zM132 130h2v1h-2zM134 131h2v1h-2zM136 132h2v1h-2zM138 133h1v1h-1zM138 134h1v1h-1zM139 135h1v1h-1zM141 135h1v1h-1zM139 136h1v1h-1zM141 136h2v1h-2zM140 137h1v1h-1zM143 137h1v1h-1zM144 138h2v1h-2zM145 139h1v1h-1zM145 140h4v1h-4zM146 141h2v1h-2zM149 141h3v1h-3zM151 142h3v1h-3zM153 143h1v1h-1zM157 143h1v1h-1zM154 144h1v1h-1zM157 144h1v1h-1zM164 144h1v1h-1zM171 144h1v1h-1zM194 144h1v1h-1zM154 145h3v1h-3zM158 145h2v1h-2zM164 145h1v1h-1zM171 145h1v1h-1zM187 145h1v1h-1zM194 145h1v1h-1zM160 146h2v1h-2zM163 146h4v1h-4zM171 146h2v1h-2zM187 146h2v1h-2zM194 146h2v1h-2zM199 146h1v1h-1zM217 146h1v1h-1zM161 147h4v1h-4zM166 147h56v1h-56z" fill="#002888"/>
<path d="M220 141h2v1h-2zM217 142h8v1h-8zM216 143h10v1h-10zM216 144h10v1h-10zM216 145h10v1h-10zM215 146h12v1h-12zM215 147h12v1h-12zM216 148h10v1h-10zM216 149h10v1h-10zM216 150h10v1h-10zM217 151h8v1h-8zM220 152h2v1h-2z" fill="#002888"/>
</svg>
<div class="tt" style="left:23px;top:8px;color:#d4d0c8">Nennwert-Verlauf</div>
<div class="tx" style="left:147px;top:35px;height:9px;overflow:hidden">Strafe</div>
<div class="tx" style="left:148px;top:46px">0</div>
<div class="tx yl" style="right:169px;top:62px">0.01347</div>
<div class="tx yl" style="right:169px;top:78px">0.0101</div>
<div class="tx yl" style="right:169px;top:100px">0.006736</div>
<div class="tx yl" style="right:169px;top:122px">0.003368</div>
<div class="tx yl" style="right:169px;top:137px">0</div>
<div class="tx" style="left:76px;top:153px">0</div>
<div class="tx" style="left:106px;top:153px">50</div>
<div class="tx" style="left:141px;top:153px">100</div>
<div class="tx" style="left:180px;top:153px">150</div>
<div class="tx" style="left:208px;top:153px">200</div>
<div class="tx" style="left:101px;top:167px">Optimierungsschritte</div>
</div>
</body></html>
